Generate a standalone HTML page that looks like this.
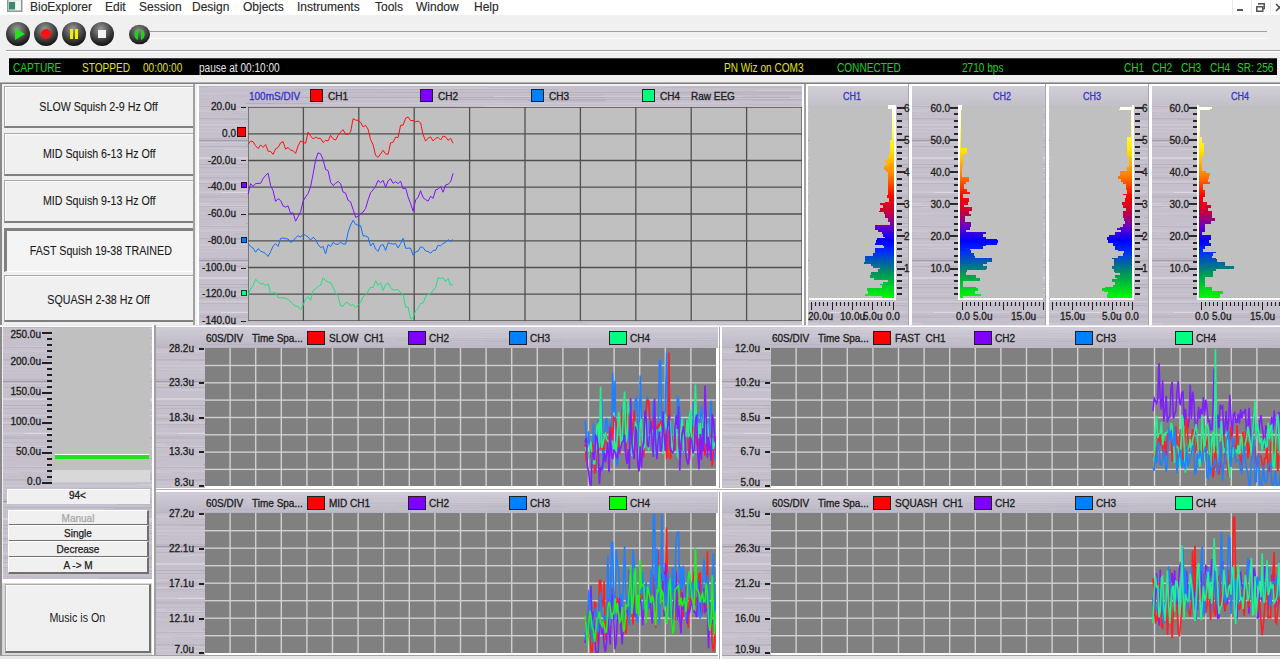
<!DOCTYPE html><html><head><meta charset="utf-8"><style>
*{margin:0;padding:0;box-sizing:border-box}
html,body{width:1280px;height:659px;overflow:hidden;background:#f0f0f0;font-family:"Liberation Sans", sans-serif;position:relative}
.t{position:absolute;white-space:nowrap;line-height:1;-webkit-text-stroke:0.3px currentColor}
.btn,.btnp{-webkit-text-stroke:0.1px currentColor}
.metal{background-color:#c6c2cc;background-image:
 repeating-linear-gradient(180deg, rgba(255,255,255,.10) 0px, rgba(255,255,255,.10) 1px, rgba(0,0,0,0) 1px, rgba(0,0,0,0) 3px),
 repeating-linear-gradient(180deg, rgba(0,0,0,.05) 0px, rgba(0,0,0,.05) 2px, rgba(0,0,0,0) 2px, rgba(0,0,0,0) 7px),
 repeating-linear-gradient(180deg, rgba(255,255,255,.08) 0px, rgba(255,255,255,.08) 3px, rgba(0,0,0,0) 3px, rgba(0,0,0,0) 11px);}
.btn{position:absolute;background:#f0f0f0;border-top:1px solid #a8a8a8;border-left:1px solid #a8a8a8;border-right:2px solid #808080;border-bottom:2px solid #808080;box-shadow:inset 1px 1px 0 #fff;font-size:12px;color:#1a1a1a;display:flex;align-items:center;justify-content:center}
.btnp{position:absolute;background:#f4f4f4;border-top:3px solid #808080;border-left:3px solid #808080;border-right:1px solid #fff;border-bottom:1px solid #fff;font-size:12px;color:#1a1a1a;display:flex;align-items:center;justify-content:center}
.lbl{font-size:10px;color:#202020}
</style></head><body><svg width="0" height="0" style="position:absolute"><defs><pattern id="mt" width="1280" height="120" patternUnits="userSpaceOnUse"><rect width="1280" height="120" fill="#c5c0cb"/><rect x="479" y="0" width="142" height="1" fill="rgba(60,50,80,0.029)"/><rect x="-28" y="0" width="429" height="1" fill="rgba(60,50,80,0.021)"/><rect x="-123" y="0" width="168" height="1" fill="rgba(60,50,80,0.008)"/><rect x="1134" y="0" width="315" height="1" fill="rgba(60,50,80,0.061)"/><rect x="-117" y="0" width="359" height="1" fill="rgba(60,50,80,0.052)"/><rect x="955" y="0" width="341" height="1" fill="rgba(255,255,255,0.008)"/><rect x="465" y="1" width="461" height="1" fill="rgba(60,50,80,0.058)"/><rect x="11" y="1" width="276" height="1" fill="rgba(255,255,255,0.108)"/><rect x="1052" y="1" width="131" height="1" fill="rgba(255,255,255,0.059)"/><rect x="1167" y="1" width="310" height="1" fill="rgba(60,50,80,0.037)"/><rect x="660" y="2" width="201" height="1" fill="rgba(60,50,80,0.032)"/><rect x="-285" y="2" width="257" height="1" fill="rgba(255,255,255,0.050)"/><rect x="117" y="2" width="225" height="1" fill="rgba(255,255,255,0.136)"/><rect x="762" y="3" width="500" height="1" fill="rgba(60,50,80,0.004)"/><rect x="105" y="3" width="350" height="1" fill="rgba(60,50,80,0.016)"/><rect x="-36" y="3" width="150" height="1" fill="rgba(255,255,255,0.008)"/><rect x="1164" y="3" width="122" height="1" fill="rgba(60,50,80,0.001)"/><rect x="63" y="3" width="297" height="1" fill="rgba(60,50,80,0.054)"/><rect x="1052" y="3" width="130" height="1" fill="rgba(255,255,255,0.023)"/><rect x="1100" y="4" width="459" height="1" fill="rgba(255,255,255,0.006)"/><rect x="558" y="4" width="81" height="1" fill="rgba(255,255,255,0.143)"/><rect x="-8" y="4" width="198" height="1" fill="rgba(60,50,80,0.027)"/><rect x="964" y="4" width="42" height="1" fill="rgba(60,50,80,0.020)"/><rect x="530" y="4" width="142" height="1" fill="rgba(255,255,255,0.040)"/><rect x="-187" y="4" width="367" height="1" fill="rgba(255,255,255,0.020)"/><rect x="1264" y="5" width="104" height="1" fill="rgba(255,255,255,0.082)"/><rect x="424" y="5" width="395" height="1" fill="rgba(60,50,80,0.017)"/><rect x="1212" y="5" width="482" height="1" fill="rgba(255,255,255,0.006)"/><rect x="1171" y="5" width="347" height="1" fill="rgba(255,255,255,0.011)"/><rect x="536" y="5" width="103" height="1" fill="rgba(60,50,80,0.028)"/><rect x="-103" y="5" width="100" height="1" fill="rgba(255,255,255,0.042)"/><rect x="539" y="6" width="114" height="1" fill="rgba(255,255,255,0.053)"/><rect x="125" y="6" width="490" height="1" fill="rgba(60,50,80,0.080)"/><rect x="179" y="6" width="473" height="1" fill="rgba(60,50,80,0.032)"/><rect x="227" y="6" width="100" height="1" fill="rgba(255,255,255,0.065)"/><rect x="726" y="7" width="187" height="1" fill="rgba(60,50,80,0.037)"/><rect x="-278" y="7" width="339" height="1" fill="rgba(255,255,255,0.049)"/><rect x="472" y="7" width="244" height="1" fill="rgba(60,50,80,0.039)"/><rect x="517" y="8" width="237" height="1" fill="rgba(60,50,80,0.041)"/><rect x="-111" y="8" width="132" height="1" fill="rgba(255,255,255,0.054)"/><rect x="-224" y="8" width="230" height="1" fill="rgba(60,50,80,0.009)"/><rect x="609" y="8" width="157" height="1" fill="rgba(60,50,80,0.050)"/><rect x="337" y="8" width="477" height="1" fill="rgba(60,50,80,0.041)"/><rect x="-84" y="9" width="487" height="1" fill="rgba(60,50,80,0.060)"/><rect x="1108" y="9" width="409" height="1" fill="rgba(60,50,80,0.033)"/><rect x="1157" y="9" width="385" height="1" fill="rgba(255,255,255,0.172)"/><rect x="1157" y="9" width="167" height="1" fill="rgba(60,50,80,0.040)"/><rect x="-136" y="9" width="491" height="1" fill="rgba(255,255,255,0.079)"/><rect x="562" y="10" width="171" height="1" fill="rgba(255,255,255,0.083)"/><rect x="1102" y="10" width="487" height="1" fill="rgba(255,255,255,0.039)"/><rect x="356" y="10" width="443" height="1" fill="rgba(60,50,80,0.026)"/><rect x="225" y="10" width="260" height="1" fill="rgba(255,255,255,0.008)"/><rect x="295" y="10" width="249" height="1" fill="rgba(255,255,255,0.202)"/><rect x="26" y="10" width="184" height="1" fill="rgba(60,50,80,0.019)"/><rect x="1089" y="11" width="387" height="1" fill="rgba(60,50,80,0.117)"/><rect x="1065" y="11" width="405" height="1" fill="rgba(60,50,80,0.090)"/><rect x="601" y="11" width="139" height="1" fill="rgba(60,50,80,0.076)"/><rect x="407" y="11" width="42" height="1" fill="rgba(255,255,255,0.158)"/><rect x="1066" y="11" width="221" height="1" fill="rgba(60,50,80,0.044)"/><rect x="95" y="11" width="496" height="1" fill="rgba(60,50,80,0.121)"/><rect x="1010" y="12" width="173" height="1" fill="rgba(60,50,80,0.045)"/><rect x="1146" y="12" width="158" height="1" fill="rgba(60,50,80,0.069)"/><rect x="536" y="12" width="480" height="1" fill="rgba(255,255,255,0.104)"/><rect x="-293" y="12" width="97" height="1" fill="rgba(60,50,80,0.056)"/><rect x="-298" y="13" width="307" height="1" fill="rgba(60,50,80,0.028)"/><rect x="1230" y="13" width="125" height="1" fill="rgba(255,255,255,0.153)"/><rect x="746" y="13" width="441" height="1" fill="rgba(255,255,255,0.088)"/><rect x="240" y="13" width="423" height="1" fill="rgba(60,50,80,0.109)"/><rect x="658" y="14" width="326" height="1" fill="rgba(60,50,80,0.068)"/><rect x="993" y="14" width="465" height="1" fill="rgba(60,50,80,0.013)"/><rect x="1266" y="14" width="350" height="1" fill="rgba(255,255,255,0.009)"/><rect x="-258" y="14" width="93" height="1" fill="rgba(60,50,80,0.033)"/><rect x="329" y="14" width="78" height="1" fill="rgba(60,50,80,0.111)"/><rect x="553" y="14" width="193" height="1" fill="rgba(60,50,80,0.062)"/><rect x="841" y="15" width="360" height="1" fill="rgba(255,255,255,0.139)"/><rect x="304" y="15" width="139" height="1" fill="rgba(60,50,80,0.021)"/><rect x="1249" y="15" width="91" height="1" fill="rgba(255,255,255,0.195)"/><rect x="516" y="15" width="444" height="1" fill="rgba(60,50,80,0.005)"/><rect x="52" y="15" width="175" height="1" fill="rgba(60,50,80,0.025)"/><rect x="614" y="16" width="484" height="1" fill="rgba(255,255,255,0.014)"/><rect x="1122" y="16" width="399" height="1" fill="rgba(60,50,80,0.049)"/><rect x="1164" y="16" width="131" height="1" fill="rgba(255,255,255,0.091)"/><rect x="436" y="16" width="168" height="1" fill="rgba(255,255,255,0.032)"/><rect x="76" y="17" width="463" height="1" fill="rgba(255,255,255,0.118)"/><rect x="681" y="17" width="333" height="1" fill="rgba(255,255,255,0.180)"/><rect x="675" y="17" width="380" height="1" fill="rgba(60,50,80,0.065)"/><rect x="47" y="17" width="78" height="1" fill="rgba(60,50,80,0.150)"/><rect x="771" y="17" width="47" height="1" fill="rgba(60,50,80,0.034)"/><rect x="-65" y="17" width="208" height="1" fill="rgba(255,255,255,0.012)"/><rect x="866" y="18" width="388" height="1" fill="rgba(60,50,80,0.019)"/><rect x="791" y="18" width="180" height="1" fill="rgba(60,50,80,0.044)"/><rect x="547" y="18" width="173" height="1" fill="rgba(60,50,80,0.049)"/><rect x="-22" y="19" width="341" height="1" fill="rgba(255,255,255,0.097)"/><rect x="-203" y="19" width="215" height="1" fill="rgba(60,50,80,0.024)"/><rect x="747" y="19" width="157" height="1" fill="rgba(60,50,80,0.039)"/><rect x="599" y="19" width="69" height="1" fill="rgba(60,50,80,0.014)"/><rect x="170" y="20" width="452" height="1" fill="rgba(255,255,255,0.048)"/><rect x="258" y="20" width="181" height="1" fill="rgba(255,255,255,0.117)"/><rect x="1045" y="20" width="226" height="1" fill="rgba(255,255,255,0.223)"/><rect x="844" y="20" width="128" height="1" fill="rgba(255,255,255,0.106)"/><rect x="1137" y="20" width="221" height="1" fill="rgba(60,50,80,0.053)"/><rect x="-134" y="20" width="420" height="1" fill="rgba(60,50,80,0.075)"/><rect x="1184" y="21" width="104" height="1" fill="rgba(255,255,255,0.029)"/><rect x="-123" y="21" width="56" height="1" fill="rgba(60,50,80,0.025)"/><rect x="1254" y="21" width="302" height="1" fill="rgba(60,50,80,0.018)"/><rect x="959" y="22" width="351" height="1" fill="rgba(60,50,80,0.024)"/><rect x="1257" y="22" width="352" height="1" fill="rgba(255,255,255,0.100)"/><rect x="401" y="22" width="454" height="1" fill="rgba(255,255,255,0.161)"/><rect x="980" y="22" width="263" height="1" fill="rgba(255,255,255,0.026)"/><rect x="0" y="23" width="294" height="1" fill="rgba(255,255,255,0.064)"/><rect x="1016" y="23" width="306" height="1" fill="rgba(60,50,80,0.001)"/><rect x="471" y="23" width="389" height="1" fill="rgba(60,50,80,0.008)"/><rect x="182" y="24" width="330" height="1" fill="rgba(60,50,80,0.083)"/><rect x="-136" y="24" width="488" height="1" fill="rgba(255,255,255,0.067)"/><rect x="30" y="24" width="488" height="1" fill="rgba(255,255,255,0.051)"/><rect x="464" y="25" width="169" height="1" fill="rgba(60,50,80,0.019)"/><rect x="341" y="25" width="341" height="1" fill="rgba(255,255,255,0.106)"/><rect x="315" y="25" width="121" height="1" fill="rgba(255,255,255,0.031)"/><rect x="-29" y="25" width="45" height="1" fill="rgba(255,255,255,0.147)"/><rect x="305" y="25" width="188" height="1" fill="rgba(60,50,80,0.062)"/><rect x="-47" y="25" width="292" height="1" fill="rgba(60,50,80,0.017)"/><rect x="35" y="26" width="350" height="1" fill="rgba(255,255,255,0.019)"/><rect x="1099" y="26" width="202" height="1" fill="rgba(255,255,255,0.093)"/><rect x="-230" y="26" width="232" height="1" fill="rgba(60,50,80,0.061)"/><rect x="254" y="26" width="352" height="1" fill="rgba(255,255,255,0.009)"/><rect x="1081" y="26" width="49" height="1" fill="rgba(255,255,255,0.062)"/><rect x="1213" y="27" width="244" height="1" fill="rgba(60,50,80,0.069)"/><rect x="166" y="27" width="129" height="1" fill="rgba(255,255,255,0.085)"/><rect x="773" y="27" width="248" height="1" fill="rgba(255,255,255,0.076)"/><rect x="1026" y="27" width="173" height="1" fill="rgba(60,50,80,0.002)"/><rect x="35" y="27" width="471" height="1" fill="rgba(60,50,80,0.049)"/><rect x="113" y="28" width="107" height="1" fill="rgba(60,50,80,0.022)"/><rect x="68" y="28" width="362" height="1" fill="rgba(60,50,80,0.047)"/><rect x="221" y="28" width="133" height="1" fill="rgba(255,255,255,0.300)"/><rect x="4" y="29" width="41" height="1" fill="rgba(255,255,255,0.027)"/><rect x="510" y="29" width="268" height="1" fill="rgba(60,50,80,0.006)"/><rect x="-149" y="29" width="124" height="1" fill="rgba(60,50,80,0.039)"/><rect x="-30" y="29" width="284" height="1" fill="rgba(60,50,80,0.024)"/><rect x="953" y="29" width="86" height="1" fill="rgba(60,50,80,0.020)"/><rect x="1202" y="29" width="333" height="1" fill="rgba(255,255,255,0.047)"/><rect x="126" y="30" width="406" height="1" fill="rgba(255,255,255,0.072)"/><rect x="113" y="30" width="449" height="1" fill="rgba(60,50,80,0.042)"/><rect x="55" y="30" width="108" height="1" fill="rgba(60,50,80,0.105)"/><rect x="53" y="30" width="470" height="1" fill="rgba(255,255,255,0.036)"/><rect x="1105" y="30" width="171" height="1" fill="rgba(255,255,255,0.065)"/><rect x="733" y="30" width="485" height="1" fill="rgba(255,255,255,0.115)"/><rect x="180" y="31" width="163" height="1" fill="rgba(60,50,80,0.075)"/><rect x="562" y="31" width="242" height="1" fill="rgba(60,50,80,0.012)"/><rect x="773" y="31" width="327" height="1" fill="rgba(255,255,255,0.075)"/><rect x="715" y="32" width="136" height="1" fill="rgba(255,255,255,0.037)"/><rect x="-102" y="32" width="446" height="1" fill="rgba(60,50,80,0.083)"/><rect x="594" y="32" width="71" height="1" fill="rgba(60,50,80,0.086)"/><rect x="345" y="32" width="137" height="1" fill="rgba(255,255,255,0.145)"/><rect x="79" y="32" width="177" height="1" fill="rgba(60,50,80,0.033)"/><rect x="-280" y="33" width="335" height="1" fill="rgba(60,50,80,0.032)"/><rect x="446" y="33" width="98" height="1" fill="rgba(60,50,80,0.006)"/><rect x="26" y="33" width="216" height="1" fill="rgba(60,50,80,0.059)"/><rect x="787" y="33" width="173" height="1" fill="rgba(255,255,255,0.109)"/><rect x="105" y="33" width="271" height="1" fill="rgba(255,255,255,0.260)"/><rect x="174" y="34" width="112" height="1" fill="rgba(255,255,255,0.095)"/><rect x="945" y="34" width="80" height="1" fill="rgba(255,255,255,0.055)"/><rect x="434" y="34" width="202" height="1" fill="rgba(60,50,80,0.042)"/><rect x="468" y="34" width="165" height="1" fill="rgba(60,50,80,0.084)"/><rect x="-256" y="34" width="54" height="1" fill="rgba(60,50,80,0.021)"/><rect x="133" y="35" width="153" height="1" fill="rgba(60,50,80,0.021)"/><rect x="-156" y="35" width="370" height="1" fill="rgba(255,255,255,0.070)"/><rect x="-299" y="35" width="262" height="1" fill="rgba(255,255,255,0.089)"/><rect x="1116" y="35" width="472" height="1" fill="rgba(255,255,255,0.077)"/><rect x="718" y="36" width="256" height="1" fill="rgba(60,50,80,0.045)"/><rect x="845" y="36" width="370" height="1" fill="rgba(60,50,80,0.017)"/><rect x="238" y="36" width="207" height="1" fill="rgba(60,50,80,0.021)"/><rect x="259" y="36" width="311" height="1" fill="rgba(60,50,80,0.088)"/><rect x="198" y="36" width="72" height="1" fill="rgba(255,255,255,0.070)"/><rect x="971" y="37" width="92" height="1" fill="rgba(60,50,80,0.015)"/><rect x="254" y="37" width="488" height="1" fill="rgba(60,50,80,0.024)"/><rect x="135" y="37" width="266" height="1" fill="rgba(255,255,255,0.144)"/><rect x="1062" y="37" width="267" height="1" fill="rgba(60,50,80,0.067)"/><rect x="236" y="37" width="79" height="1" fill="rgba(60,50,80,0.009)"/><rect x="-51" y="38" width="417" height="1" fill="rgba(255,255,255,0.128)"/><rect x="1141" y="38" width="266" height="1" fill="rgba(255,255,255,0.014)"/><rect x="572" y="38" width="446" height="1" fill="rgba(255,255,255,0.087)"/><rect x="181" y="38" width="349" height="1" fill="rgba(60,50,80,0.019)"/><rect x="1120" y="38" width="313" height="1" fill="rgba(255,255,255,0.195)"/><rect x="286" y="38" width="243" height="1" fill="rgba(60,50,80,0.047)"/><rect x="-161" y="39" width="342" height="1" fill="rgba(255,255,255,0.108)"/><rect x="703" y="39" width="213" height="1" fill="rgba(60,50,80,0.025)"/><rect x="919" y="39" width="83" height="1" fill="rgba(60,50,80,0.005)"/><rect x="-129" y="39" width="364" height="1" fill="rgba(60,50,80,0.015)"/><rect x="539" y="40" width="138" height="1" fill="rgba(60,50,80,0.065)"/><rect x="900" y="40" width="336" height="1" fill="rgba(255,255,255,0.075)"/><rect x="-264" y="40" width="50" height="1" fill="rgba(255,255,255,0.070)"/><rect x="117" y="40" width="381" height="1" fill="rgba(255,255,255,0.067)"/><rect x="-274" y="41" width="260" height="1" fill="rgba(255,255,255,0.109)"/><rect x="75" y="41" width="469" height="1" fill="rgba(60,50,80,0.090)"/><rect x="-24" y="41" width="459" height="1" fill="rgba(255,255,255,0.014)"/><rect x="1145" y="42" width="252" height="1" fill="rgba(60,50,80,0.041)"/><rect x="-86" y="42" width="198" height="1" fill="rgba(255,255,255,0.100)"/><rect x="490" y="42" width="363" height="1" fill="rgba(60,50,80,0.070)"/><rect x="-103" y="42" width="79" height="1" fill="rgba(60,50,80,0.007)"/><rect x="1189" y="43" width="121" height="1" fill="rgba(255,255,255,0.134)"/><rect x="1242" y="43" width="180" height="1" fill="rgba(60,50,80,0.002)"/><rect x="938" y="43" width="464" height="1" fill="rgba(60,50,80,0.013)"/><rect x="-157" y="43" width="168" height="1" fill="rgba(60,50,80,0.026)"/><rect x="295" y="43" width="346" height="1" fill="rgba(255,255,255,0.010)"/><rect x="145" y="44" width="473" height="1" fill="rgba(255,255,255,0.188)"/><rect x="327" y="44" width="464" height="1" fill="rgba(60,50,80,0.002)"/><rect x="617" y="44" width="169" height="1" fill="rgba(60,50,80,0.071)"/><rect x="640" y="44" width="185" height="1" fill="rgba(60,50,80,0.000)"/><rect x="5" y="44" width="137" height="1" fill="rgba(60,50,80,0.013)"/><rect x="729" y="44" width="157" height="1" fill="rgba(255,255,255,0.051)"/><rect x="932" y="45" width="304" height="1" fill="rgba(255,255,255,0.127)"/><rect x="-4" y="45" width="333" height="1" fill="rgba(255,255,255,0.060)"/><rect x="-300" y="45" width="212" height="1" fill="rgba(60,50,80,0.013)"/><rect x="889" y="45" width="446" height="1" fill="rgba(60,50,80,0.080)"/><rect x="-132" y="45" width="45" height="1" fill="rgba(60,50,80,0.046)"/><rect x="-129" y="46" width="42" height="1" fill="rgba(255,255,255,0.054)"/><rect x="99" y="46" width="485" height="1" fill="rgba(255,255,255,0.174)"/><rect x="311" y="46" width="138" height="1" fill="rgba(60,50,80,0.035)"/><rect x="0" y="47" width="414" height="1" fill="rgba(60,50,80,0.002)"/><rect x="836" y="47" width="386" height="1" fill="rgba(255,255,255,0.095)"/><rect x="1013" y="47" width="137" height="1" fill="rgba(255,255,255,0.045)"/><rect x="146" y="48" width="192" height="1" fill="rgba(255,255,255,0.028)"/><rect x="528" y="48" width="211" height="1" fill="rgba(60,50,80,0.054)"/><rect x="212" y="48" width="285" height="1" fill="rgba(60,50,80,0.001)"/><rect x="146" y="49" width="218" height="1" fill="rgba(255,255,255,0.117)"/><rect x="1124" y="49" width="323" height="1" fill="rgba(255,255,255,0.125)"/><rect x="1078" y="49" width="158" height="1" fill="rgba(255,255,255,0.119)"/><rect x="986" y="49" width="307" height="1" fill="rgba(60,50,80,0.074)"/><rect x="938" y="49" width="257" height="1" fill="rgba(60,50,80,0.025)"/><rect x="841" y="50" width="130" height="1" fill="rgba(60,50,80,0.125)"/><rect x="1191" y="50" width="305" height="1" fill="rgba(255,255,255,0.076)"/><rect x="-258" y="50" width="48" height="1" fill="rgba(60,50,80,0.051)"/><rect x="940" y="50" width="343" height="1" fill="rgba(60,50,80,0.015)"/><rect x="-207" y="50" width="74" height="1" fill="rgba(255,255,255,0.048)"/><rect x="1079" y="51" width="325" height="1" fill="rgba(60,50,80,0.013)"/><rect x="833" y="51" width="208" height="1" fill="rgba(255,255,255,0.101)"/><rect x="1119" y="51" width="435" height="1" fill="rgba(60,50,80,0.030)"/><rect x="305" y="51" width="56" height="1" fill="rgba(60,50,80,0.075)"/><rect x="1067" y="51" width="215" height="1" fill="rgba(60,50,80,0.063)"/><rect x="59" y="52" width="361" height="1" fill="rgba(255,255,255,0.072)"/><rect x="-111" y="52" width="283" height="1" fill="rgba(60,50,80,0.078)"/><rect x="815" y="52" width="234" height="1" fill="rgba(255,255,255,0.140)"/><rect x="912" y="53" width="368" height="1" fill="rgba(255,255,255,0.053)"/><rect x="-85" y="53" width="144" height="1" fill="rgba(60,50,80,0.042)"/><rect x="420" y="53" width="108" height="1" fill="rgba(255,255,255,0.153)"/><rect x="-291" y="53" width="228" height="1" fill="rgba(255,255,255,0.064)"/><rect x="499" y="53" width="200" height="1" fill="rgba(60,50,80,0.056)"/><rect x="265" y="54" width="248" height="1" fill="rgba(60,50,80,0.037)"/><rect x="-36" y="54" width="109" height="1" fill="rgba(60,50,80,0.070)"/><rect x="-35" y="54" width="187" height="1" fill="rgba(60,50,80,0.123)"/><rect x="1136" y="54" width="378" height="1" fill="rgba(255,255,255,0.045)"/><rect x="-245" y="54" width="320" height="1" fill="rgba(60,50,80,0.096)"/><rect x="-9" y="55" width="166" height="1" fill="rgba(60,50,80,0.054)"/><rect x="242" y="55" width="195" height="1" fill="rgba(255,255,255,0.074)"/><rect x="589" y="55" width="420" height="1" fill="rgba(60,50,80,0.071)"/><rect x="407" y="55" width="55" height="1" fill="rgba(255,255,255,0.140)"/><rect x="707" y="55" width="156" height="1" fill="rgba(60,50,80,0.018)"/><rect x="194" y="56" width="439" height="1" fill="rgba(255,255,255,0.006)"/><rect x="739" y="56" width="59" height="1" fill="rgba(255,255,255,0.140)"/><rect x="-157" y="56" width="221" height="1" fill="rgba(255,255,255,0.144)"/><rect x="849" y="56" width="106" height="1" fill="rgba(255,255,255,0.246)"/><rect x="427" y="56" width="437" height="1" fill="rgba(60,50,80,0.025)"/><rect x="-168" y="57" width="47" height="1" fill="rgba(255,255,255,0.083)"/><rect x="-269" y="57" width="270" height="1" fill="rgba(60,50,80,0.071)"/><rect x="114" y="57" width="369" height="1" fill="rgba(60,50,80,0.055)"/><rect x="143" y="58" width="412" height="1" fill="rgba(60,50,80,0.009)"/><rect x="-209" y="58" width="350" height="1" fill="rgba(255,255,255,0.060)"/><rect x="583" y="58" width="134" height="1" fill="rgba(255,255,255,0.300)"/><rect x="824" y="59" width="274" height="1" fill="rgba(60,50,80,0.016)"/><rect x="1277" y="59" width="465" height="1" fill="rgba(255,255,255,0.146)"/><rect x="1179" y="59" width="457" height="1" fill="rgba(255,255,255,0.037)"/><rect x="-234" y="59" width="391" height="1" fill="rgba(255,255,255,0.008)"/><rect x="866" y="60" width="241" height="1" fill="rgba(255,255,255,0.151)"/><rect x="720" y="60" width="431" height="1" fill="rgba(60,50,80,0.096)"/><rect x="-22" y="60" width="185" height="1" fill="rgba(60,50,80,0.069)"/><rect x="6" y="60" width="393" height="1" fill="rgba(60,50,80,0.035)"/><rect x="375" y="61" width="334" height="1" fill="rgba(255,255,255,0.061)"/><rect x="111" y="61" width="381" height="1" fill="rgba(60,50,80,0.056)"/><rect x="549" y="61" width="386" height="1" fill="rgba(60,50,80,0.005)"/><rect x="-138" y="62" width="239" height="1" fill="rgba(255,255,255,0.131)"/><rect x="1148" y="62" width="251" height="1" fill="rgba(60,50,80,0.007)"/><rect x="941" y="62" width="195" height="1" fill="rgba(60,50,80,0.038)"/><rect x="681" y="62" width="40" height="1" fill="rgba(60,50,80,0.080)"/><rect x="-238" y="62" width="399" height="1" fill="rgba(60,50,80,0.030)"/><rect x="212" y="62" width="158" height="1" fill="rgba(255,255,255,0.077)"/><rect x="26" y="63" width="310" height="1" fill="rgba(255,255,255,0.146)"/><rect x="155" y="63" width="193" height="1" fill="rgba(60,50,80,0.002)"/><rect x="521" y="63" width="122" height="1" fill="rgba(255,255,255,0.110)"/><rect x="467" y="64" width="440" height="1" fill="rgba(255,255,255,0.032)"/><rect x="649" y="64" width="277" height="1" fill="rgba(255,255,255,0.055)"/><rect x="268" y="64" width="416" height="1" fill="rgba(255,255,255,0.083)"/><rect x="1198" y="64" width="363" height="1" fill="rgba(60,50,80,0.060)"/><rect x="63" y="64" width="207" height="1" fill="rgba(60,50,80,0.070)"/><rect x="730" y="65" width="244" height="1" fill="rgba(60,50,80,0.031)"/><rect x="836" y="65" width="382" height="1" fill="rgba(60,50,80,0.076)"/><rect x="656" y="65" width="148" height="1" fill="rgba(60,50,80,0.047)"/><rect x="1108" y="66" width="243" height="1" fill="rgba(255,255,255,0.189)"/><rect x="789" y="66" width="201" height="1" fill="rgba(60,50,80,0.008)"/><rect x="372" y="66" width="150" height="1" fill="rgba(60,50,80,0.006)"/><rect x="491" y="67" width="120" height="1" fill="rgba(60,50,80,0.021)"/><rect x="200" y="67" width="404" height="1" fill="rgba(60,50,80,0.104)"/><rect x="398" y="67" width="81" height="1" fill="rgba(255,255,255,0.150)"/><rect x="77" y="67" width="70" height="1" fill="rgba(60,50,80,0.003)"/><rect x="477" y="68" width="150" height="1" fill="rgba(60,50,80,0.021)"/><rect x="1193" y="68" width="174" height="1" fill="rgba(60,50,80,0.055)"/><rect x="73" y="68" width="374" height="1" fill="rgba(255,255,255,0.050)"/><rect x="839" y="68" width="366" height="1" fill="rgba(60,50,80,0.091)"/><rect x="589" y="68" width="203" height="1" fill="rgba(255,255,255,0.097)"/><rect x="267" y="68" width="417" height="1" fill="rgba(255,255,255,0.149)"/><rect x="685" y="69" width="331" height="1" fill="rgba(60,50,80,0.017)"/><rect x="466" y="69" width="393" height="1" fill="rgba(255,255,255,0.150)"/><rect x="609" y="69" width="277" height="1" fill="rgba(60,50,80,0.104)"/><rect x="75" y="69" width="272" height="1" fill="rgba(60,50,80,0.022)"/><rect x="797" y="70" width="268" height="1" fill="rgba(60,50,80,0.053)"/><rect x="958" y="70" width="277" height="1" fill="rgba(255,255,255,0.023)"/><rect x="1083" y="70" width="272" height="1" fill="rgba(60,50,80,0.057)"/><rect x="94" y="70" width="102" height="1" fill="rgba(60,50,80,0.004)"/><rect x="592" y="70" width="495" height="1" fill="rgba(255,255,255,0.014)"/><rect x="-178" y="71" width="413" height="1" fill="rgba(255,255,255,0.076)"/><rect x="-51" y="71" width="320" height="1" fill="rgba(255,255,255,0.212)"/><rect x="579" y="71" width="316" height="1" fill="rgba(255,255,255,0.300)"/><rect x="-300" y="71" width="97" height="1" fill="rgba(60,50,80,0.065)"/><rect x="-42" y="71" width="341" height="1" fill="rgba(60,50,80,0.001)"/><rect x="1279" y="72" width="433" height="1" fill="rgba(60,50,80,0.027)"/><rect x="219" y="72" width="50" height="1" fill="rgba(60,50,80,0.077)"/><rect x="-212" y="72" width="432" height="1" fill="rgba(255,255,255,0.247)"/><rect x="111" y="72" width="59" height="1" fill="rgba(255,255,255,0.092)"/><rect x="136" y="73" width="304" height="1" fill="rgba(255,255,255,0.244)"/><rect x="1242" y="73" width="43" height="1" fill="rgba(255,255,255,0.035)"/><rect x="421" y="73" width="464" height="1" fill="rgba(255,255,255,0.079)"/><rect x="451" y="73" width="217" height="1" fill="rgba(255,255,255,0.086)"/><rect x="-265" y="74" width="370" height="1" fill="rgba(60,50,80,0.023)"/><rect x="625" y="74" width="93" height="1" fill="rgba(255,255,255,0.136)"/><rect x="137" y="74" width="448" height="1" fill="rgba(255,255,255,0.238)"/><rect x="519" y="74" width="448" height="1" fill="rgba(60,50,80,0.019)"/><rect x="455" y="74" width="214" height="1" fill="rgba(255,255,255,0.198)"/><rect x="1149" y="75" width="386" height="1" fill="rgba(60,50,80,0.072)"/><rect x="1020" y="75" width="285" height="1" fill="rgba(255,255,255,0.029)"/><rect x="1027" y="75" width="293" height="1" fill="rgba(255,255,255,0.026)"/><rect x="797" y="75" width="349" height="1" fill="rgba(255,255,255,0.002)"/><rect x="379" y="76" width="95" height="1" fill="rgba(255,255,255,0.026)"/><rect x="569" y="76" width="404" height="1" fill="rgba(60,50,80,0.001)"/><rect x="464" y="76" width="393" height="1" fill="rgba(255,255,255,0.147)"/><rect x="463" y="77" width="223" height="1" fill="rgba(60,50,80,0.041)"/><rect x="448" y="77" width="341" height="1" fill="rgba(60,50,80,0.021)"/><rect x="355" y="77" width="420" height="1" fill="rgba(255,255,255,0.074)"/><rect x="243" y="77" width="239" height="1" fill="rgba(255,255,255,0.102)"/><rect x="802" y="78" width="80" height="1" fill="rgba(255,255,255,0.179)"/><rect x="-121" y="78" width="382" height="1" fill="rgba(60,50,80,0.088)"/><rect x="1094" y="78" width="143" height="1" fill="rgba(255,255,255,0.022)"/><rect x="-72" y="78" width="216" height="1" fill="rgba(60,50,80,0.034)"/><rect x="152" y="78" width="479" height="1" fill="rgba(255,255,255,0.062)"/><rect x="-190" y="79" width="468" height="1" fill="rgba(255,255,255,0.056)"/><rect x="851" y="79" width="243" height="1" fill="rgba(255,255,255,0.062)"/><rect x="43" y="79" width="471" height="1" fill="rgba(60,50,80,0.059)"/><rect x="343" y="79" width="137" height="1" fill="rgba(60,50,80,0.082)"/><rect x="250" y="80" width="294" height="1" fill="rgba(60,50,80,0.003)"/><rect x="1154" y="80" width="336" height="1" fill="rgba(60,50,80,0.031)"/><rect x="1072" y="80" width="51" height="1" fill="rgba(60,50,80,0.016)"/><rect x="325" y="80" width="221" height="1" fill="rgba(60,50,80,0.024)"/><rect x="661" y="80" width="114" height="1" fill="rgba(255,255,255,0.084)"/><rect x="424" y="80" width="336" height="1" fill="rgba(255,255,255,0.033)"/><rect x="206" y="81" width="201" height="1" fill="rgba(255,255,255,0.035)"/><rect x="218" y="81" width="260" height="1" fill="rgba(60,50,80,0.008)"/><rect x="-69" y="81" width="462" height="1" fill="rgba(60,50,80,0.074)"/><rect x="60" y="81" width="40" height="1" fill="rgba(60,50,80,0.053)"/><rect x="1004" y="81" width="342" height="1" fill="rgba(60,50,80,0.017)"/><rect x="436" y="82" width="111" height="1" fill="rgba(60,50,80,0.040)"/><rect x="961" y="82" width="469" height="1" fill="rgba(255,255,255,0.189)"/><rect x="139" y="82" width="259" height="1" fill="rgba(60,50,80,0.012)"/><rect x="743" y="82" width="272" height="1" fill="rgba(60,50,80,0.025)"/><rect x="102" y="82" width="268" height="1" fill="rgba(255,255,255,0.277)"/><rect x="164" y="82" width="495" height="1" fill="rgba(255,255,255,0.002)"/><rect x="396" y="83" width="279" height="1" fill="rgba(60,50,80,0.060)"/><rect x="1208" y="83" width="145" height="1" fill="rgba(255,255,255,0.138)"/><rect x="-222" y="83" width="129" height="1" fill="rgba(255,255,255,0.101)"/><rect x="-236" y="83" width="141" height="1" fill="rgba(60,50,80,0.013)"/><rect x="-156" y="84" width="84" height="1" fill="rgba(255,255,255,0.212)"/><rect x="47" y="84" width="48" height="1" fill="rgba(255,255,255,0.000)"/><rect x="-159" y="84" width="80" height="1" fill="rgba(255,255,255,0.056)"/><rect x="1181" y="85" width="480" height="1" fill="rgba(255,255,255,0.173)"/><rect x="460" y="85" width="438" height="1" fill="rgba(60,50,80,0.043)"/><rect x="467" y="85" width="129" height="1" fill="rgba(60,50,80,0.064)"/><rect x="68" y="86" width="280" height="1" fill="rgba(255,255,255,0.050)"/><rect x="101" y="86" width="302" height="1" fill="rgba(60,50,80,0.110)"/><rect x="425" y="86" width="129" height="1" fill="rgba(255,255,255,0.057)"/><rect x="1111" y="86" width="199" height="1" fill="rgba(60,50,80,0.023)"/><rect x="-213" y="86" width="366" height="1" fill="rgba(60,50,80,0.036)"/><rect x="143" y="86" width="383" height="1" fill="rgba(255,255,255,0.040)"/><rect x="1233" y="87" width="373" height="1" fill="rgba(255,255,255,0.126)"/><rect x="182" y="87" width="353" height="1" fill="rgba(60,50,80,0.039)"/><rect x="833" y="87" width="253" height="1" fill="rgba(255,255,255,0.018)"/><rect x="1225" y="87" width="148" height="1" fill="rgba(255,255,255,0.047)"/><rect x="-56" y="87" width="445" height="1" fill="rgba(255,255,255,0.046)"/><rect x="113" y="88" width="106" height="1" fill="rgba(255,255,255,0.055)"/><rect x="-142" y="88" width="341" height="1" fill="rgba(255,255,255,0.102)"/><rect x="242" y="88" width="81" height="1" fill="rgba(255,255,255,0.016)"/><rect x="759" y="88" width="433" height="1" fill="rgba(60,50,80,0.033)"/><rect x="1086" y="89" width="355" height="1" fill="rgba(60,50,80,0.064)"/><rect x="968" y="89" width="178" height="1" fill="rgba(255,255,255,0.055)"/><rect x="1223" y="89" width="335" height="1" fill="rgba(255,255,255,0.131)"/><rect x="846" y="90" width="434" height="1" fill="rgba(60,50,80,0.011)"/><rect x="1233" y="90" width="277" height="1" fill="rgba(60,50,80,0.113)"/><rect x="1240" y="90" width="284" height="1" fill="rgba(60,50,80,0.027)"/><rect x="1237" y="90" width="165" height="1" fill="rgba(255,255,255,0.040)"/><rect x="-24" y="91" width="74" height="1" fill="rgba(60,50,80,0.066)"/><rect x="1015" y="91" width="75" height="1" fill="rgba(255,255,255,0.038)"/><rect x="781" y="91" width="104" height="1" fill="rgba(255,255,255,0.071)"/><rect x="1257" y="92" width="377" height="1" fill="rgba(60,50,80,0.002)"/><rect x="488" y="92" width="135" height="1" fill="rgba(255,255,255,0.019)"/><rect x="1074" y="92" width="224" height="1" fill="rgba(255,255,255,0.107)"/><rect x="-153" y="92" width="347" height="1" fill="rgba(60,50,80,0.047)"/><rect x="105" y="92" width="425" height="1" fill="rgba(60,50,80,0.038)"/><rect x="-29" y="92" width="119" height="1" fill="rgba(60,50,80,0.002)"/><rect x="414" y="93" width="331" height="1" fill="rgba(255,255,255,0.164)"/><rect x="403" y="93" width="230" height="1" fill="rgba(60,50,80,0.101)"/><rect x="1079" y="93" width="164" height="1" fill="rgba(255,255,255,0.022)"/><rect x="154" y="93" width="352" height="1" fill="rgba(255,255,255,0.086)"/><rect x="738" y="93" width="343" height="1" fill="rgba(255,255,255,0.160)"/><rect x="1129" y="93" width="333" height="1" fill="rgba(255,255,255,0.119)"/><rect x="674" y="94" width="182" height="1" fill="rgba(60,50,80,0.033)"/><rect x="54" y="94" width="150" height="1" fill="rgba(60,50,80,0.044)"/><rect x="974" y="94" width="195" height="1" fill="rgba(255,255,255,0.001)"/><rect x="274" y="94" width="49" height="1" fill="rgba(60,50,80,0.061)"/><rect x="-271" y="95" width="434" height="1" fill="rgba(255,255,255,0.170)"/><rect x="973" y="95" width="314" height="1" fill="rgba(60,50,80,0.032)"/><rect x="257" y="95" width="327" height="1" fill="rgba(255,255,255,0.092)"/><rect x="750" y="95" width="473" height="1" fill="rgba(255,255,255,0.059)"/><rect x="873" y="95" width="350" height="1" fill="rgba(255,255,255,0.044)"/><rect x="-251" y="96" width="446" height="1" fill="rgba(255,255,255,0.096)"/><rect x="748" y="96" width="92" height="1" fill="rgba(60,50,80,0.068)"/><rect x="588" y="96" width="196" height="1" fill="rgba(255,255,255,0.017)"/><rect x="1061" y="96" width="298" height="1" fill="rgba(255,255,255,0.104)"/><rect x="-294" y="97" width="353" height="1" fill="rgba(60,50,80,0.018)"/><rect x="-129" y="97" width="272" height="1" fill="rgba(60,50,80,0.059)"/><rect x="455" y="97" width="165" height="1" fill="rgba(60,50,80,0.031)"/><rect x="406" y="97" width="205" height="1" fill="rgba(255,255,255,0.132)"/><rect x="1017" y="97" width="101" height="1" fill="rgba(255,255,255,0.100)"/><rect x="30" y="97" width="422" height="1" fill="rgba(255,255,255,0.003)"/><rect x="168" y="98" width="329" height="1" fill="rgba(255,255,255,0.090)"/><rect x="677" y="98" width="444" height="1" fill="rgba(255,255,255,0.074)"/><rect x="1070" y="98" width="276" height="1" fill="rgba(255,255,255,0.021)"/><rect x="222" y="98" width="476" height="1" fill="rgba(60,50,80,0.006)"/><rect x="-129" y="99" width="235" height="1" fill="rgba(60,50,80,0.031)"/><rect x="77" y="99" width="312" height="1" fill="rgba(60,50,80,0.064)"/><rect x="128" y="99" width="331" height="1" fill="rgba(255,255,255,0.059)"/><rect x="310" y="100" width="454" height="1" fill="rgba(255,255,255,0.181)"/><rect x="378" y="100" width="441" height="1" fill="rgba(255,255,255,0.143)"/><rect x="699" y="100" width="113" height="1" fill="rgba(255,255,255,0.015)"/><rect x="-141" y="100" width="75" height="1" fill="rgba(255,255,255,0.130)"/><rect x="517" y="100" width="166" height="1" fill="rgba(60,50,80,0.056)"/><rect x="847" y="100" width="446" height="1" fill="rgba(60,50,80,0.004)"/><rect x="901" y="101" width="261" height="1" fill="rgba(255,255,255,0.120)"/><rect x="1199" y="101" width="127" height="1" fill="rgba(60,50,80,0.041)"/><rect x="618" y="101" width="109" height="1" fill="rgba(60,50,80,0.001)"/><rect x="650" y="101" width="286" height="1" fill="rgba(60,50,80,0.028)"/><rect x="217" y="101" width="491" height="1" fill="rgba(60,50,80,0.034)"/><rect x="971" y="102" width="303" height="1" fill="rgba(255,255,255,0.077)"/><rect x="-206" y="102" width="149" height="1" fill="rgba(60,50,80,0.075)"/><rect x="-257" y="102" width="266" height="1" fill="rgba(255,255,255,0.010)"/><rect x="788" y="103" width="69" height="1" fill="rgba(60,50,80,0.054)"/><rect x="604" y="103" width="342" height="1" fill="rgba(60,50,80,0.104)"/><rect x="983" y="103" width="250" height="1" fill="rgba(60,50,80,0.032)"/><rect x="-146" y="103" width="167" height="1" fill="rgba(255,255,255,0.009)"/><rect x="791" y="103" width="371" height="1" fill="rgba(60,50,80,0.021)"/><rect x="159" y="103" width="200" height="1" fill="rgba(255,255,255,0.039)"/><rect x="1031" y="104" width="469" height="1" fill="rgba(255,255,255,0.134)"/><rect x="1127" y="104" width="72" height="1" fill="rgba(60,50,80,0.040)"/><rect x="897" y="104" width="433" height="1" fill="rgba(60,50,80,0.051)"/><rect x="1245" y="104" width="141" height="1" fill="rgba(60,50,80,0.025)"/><rect x="545" y="104" width="324" height="1" fill="rgba(60,50,80,0.075)"/><rect x="1228" y="104" width="108" height="1" fill="rgba(255,255,255,0.113)"/><rect x="345" y="105" width="314" height="1" fill="rgba(60,50,80,0.017)"/><rect x="-50" y="105" width="166" height="1" fill="rgba(255,255,255,0.079)"/><rect x="667" y="105" width="191" height="1" fill="rgba(60,50,80,0.068)"/><rect x="1084" y="106" width="419" height="1" fill="rgba(255,255,255,0.038)"/><rect x="22" y="106" width="54" height="1" fill="rgba(255,255,255,0.294)"/><rect x="892" y="106" width="302" height="1" fill="rgba(255,255,255,0.147)"/><rect x="-210" y="106" width="307" height="1" fill="rgba(255,255,255,0.151)"/><rect x="725" y="106" width="459" height="1" fill="rgba(60,50,80,0.045)"/><rect x="293" y="106" width="277" height="1" fill="rgba(255,255,255,0.195)"/><rect x="667" y="107" width="135" height="1" fill="rgba(255,255,255,0.045)"/><rect x="20" y="107" width="480" height="1" fill="rgba(60,50,80,0.017)"/><rect x="372" y="107" width="58" height="1" fill="rgba(255,255,255,0.152)"/><rect x="1075" y="108" width="177" height="1" fill="rgba(60,50,80,0.058)"/><rect x="909" y="108" width="413" height="1" fill="rgba(60,50,80,0.028)"/><rect x="511" y="108" width="57" height="1" fill="rgba(255,255,255,0.066)"/><rect x="721" y="108" width="311" height="1" fill="rgba(255,255,255,0.212)"/><rect x="143" y="109" width="123" height="1" fill="rgba(60,50,80,0.012)"/><rect x="-60" y="109" width="282" height="1" fill="rgba(60,50,80,0.055)"/><rect x="724" y="109" width="96" height="1" fill="rgba(60,50,80,0.075)"/><rect x="1208" y="109" width="359" height="1" fill="rgba(255,255,255,0.052)"/><rect x="-181" y="110" width="424" height="1" fill="rgba(60,50,80,0.049)"/><rect x="162" y="110" width="170" height="1" fill="rgba(60,50,80,0.009)"/><rect x="1177" y="110" width="109" height="1" fill="rgba(60,50,80,0.007)"/><rect x="271" y="110" width="217" height="1" fill="rgba(60,50,80,0.008)"/><rect x="106" y="111" width="235" height="1" fill="rgba(60,50,80,0.093)"/><rect x="335" y="111" width="89" height="1" fill="rgba(255,255,255,0.077)"/><rect x="757" y="111" width="295" height="1" fill="rgba(255,255,255,0.208)"/><rect x="-193" y="111" width="385" height="1" fill="rgba(60,50,80,0.066)"/><rect x="457" y="111" width="156" height="1" fill="rgba(60,50,80,0.016)"/><rect x="-278" y="111" width="40" height="1" fill="rgba(60,50,80,0.021)"/><rect x="584" y="112" width="302" height="1" fill="rgba(255,255,255,0.133)"/><rect x="476" y="112" width="408" height="1" fill="rgba(255,255,255,0.007)"/><rect x="460" y="112" width="485" height="1" fill="rgba(255,255,255,0.023)"/><rect x="406" y="112" width="335" height="1" fill="rgba(255,255,255,0.174)"/><rect x="963" y="113" width="112" height="1" fill="rgba(255,255,255,0.016)"/><rect x="817" y="113" width="220" height="1" fill="rgba(60,50,80,0.091)"/><rect x="521" y="113" width="58" height="1" fill="rgba(60,50,80,0.055)"/><rect x="227" y="113" width="115" height="1" fill="rgba(255,255,255,0.229)"/><rect x="201" y="114" width="376" height="1" fill="rgba(255,255,255,0.047)"/><rect x="-128" y="114" width="354" height="1" fill="rgba(255,255,255,0.017)"/><rect x="595" y="114" width="307" height="1" fill="rgba(255,255,255,0.103)"/><rect x="156" y="115" width="119" height="1" fill="rgba(255,255,255,0.080)"/><rect x="1221" y="115" width="109" height="1" fill="rgba(255,255,255,0.043)"/><rect x="-91" y="115" width="206" height="1" fill="rgba(60,50,80,0.043)"/><rect x="743" y="115" width="172" height="1" fill="rgba(255,255,255,0.087)"/><rect x="136" y="115" width="490" height="1" fill="rgba(60,50,80,0.035)"/><rect x="906" y="115" width="430" height="1" fill="rgba(60,50,80,0.032)"/><rect x="693" y="116" width="481" height="1" fill="rgba(255,255,255,0.004)"/><rect x="988" y="116" width="102" height="1" fill="rgba(60,50,80,0.024)"/><rect x="-219" y="116" width="74" height="1" fill="rgba(60,50,80,0.018)"/><rect x="168" y="116" width="216" height="1" fill="rgba(60,50,80,0.061)"/><rect x="907" y="116" width="366" height="1" fill="rgba(60,50,80,0.004)"/><rect x="1140" y="117" width="268" height="1" fill="rgba(255,255,255,0.058)"/><rect x="389" y="117" width="198" height="1" fill="rgba(255,255,255,0.115)"/><rect x="619" y="117" width="484" height="1" fill="rgba(255,255,255,0.194)"/><rect x="-203" y="117" width="213" height="1" fill="rgba(255,255,255,0.188)"/><rect x="506" y="117" width="169" height="1" fill="rgba(255,255,255,0.070)"/><rect x="1184" y="117" width="86" height="1" fill="rgba(60,50,80,0.028)"/><rect x="890" y="118" width="66" height="1" fill="rgba(255,255,255,0.177)"/><rect x="870" y="118" width="213" height="1" fill="rgba(255,255,255,0.084)"/><rect x="882" y="118" width="472" height="1" fill="rgba(255,255,255,0.027)"/><rect x="580" y="118" width="128" height="1" fill="rgba(255,255,255,0.074)"/><rect x="-202" y="119" width="339" height="1" fill="rgba(255,255,255,0.190)"/><rect x="364" y="119" width="55" height="1" fill="rgba(255,255,255,0.057)"/><rect x="582" y="119" width="269" height="1" fill="rgba(60,50,80,0.003)"/><rect x="798" y="119" width="154" height="1" fill="rgba(255,255,255,0.106)"/></pattern></defs></svg><div style="position:absolute;left:0px;top:0px;width:1280px;height:15px;background:#fff"></div><svg style="position:absolute;left:7px;top:0px" width="16" height="12"><rect x="0.75" y="-1" width="14" height="12.25" fill="#e4ecea" stroke="#8f9a98" stroke-width="1.5"/><rect x="2" y="2" width="6" height="7.5" fill="#3d8a72"/><rect x="9" y="1" width="4.5" height="9" fill="#f4f6f4"/></svg><div class="t" style="left:30px;top:1px;font-size:12px;color:#2a2a2a;-webkit-text-stroke:0.15px currentColor">BioExplorer</div><div class="t" style="left:105px;top:1px;font-size:12px;color:#2a2a2a;-webkit-text-stroke:0.15px currentColor">Edit</div><div class="t" style="left:139px;top:1px;font-size:12px;color:#2a2a2a;-webkit-text-stroke:0.15px currentColor">Session</div><div class="t" style="left:192px;top:1px;font-size:12px;color:#2a2a2a;-webkit-text-stroke:0.15px currentColor">Design</div><div class="t" style="left:243px;top:1px;font-size:12px;color:#2a2a2a;-webkit-text-stroke:0.15px currentColor">Objects</div><div class="t" style="left:297px;top:1px;font-size:12px;color:#2a2a2a;-webkit-text-stroke:0.15px currentColor">Instruments</div><div class="t" style="left:375px;top:1px;font-size:12px;color:#2a2a2a;-webkit-text-stroke:0.15px currentColor">Tools</div><div class="t" style="left:416px;top:1px;font-size:12px;color:#2a2a2a;-webkit-text-stroke:0.15px currentColor">Window</div><div class="t" style="left:474px;top:1px;font-size:12px;color:#2a2a2a;-webkit-text-stroke:0.15px currentColor">Help</div><div style="position:absolute;left:1237px;top:9px;width:6px;height:2px;background:#555"></div><svg style="position:absolute;left:1256px;top:3px" width="9" height="9"><rect x="0.75" y="3.75" width="6" height="4.5" fill="none" stroke="#555" stroke-width="1.5"/><path d="M2.75 1.75V0.75H8.25V5.5H7" fill="none" stroke="#555" stroke-width="1.5"/></svg><svg style="position:absolute;left:1275px;top:3px" width="5" height="9"><path d="M1 1L8 8M8 1L1 8" stroke="#555" stroke-width="1.6"/></svg><div style="position:absolute;left:1232px;top:0px;width:1px;height:14px;background:#e8e8e8"></div><div style="position:absolute;left:1251px;top:0px;width:1px;height:14px;background:#e8e8e8"></div><div style="position:absolute;left:1270px;top:0px;width:1px;height:14px;background:#e8e8e8"></div><svg style="position:absolute;left:5px;top:21px" width="27" height="27">
<defs><radialGradient id="g18" cx="45%" cy="30%" r="70%"><stop offset="0" stop-color="#9a9a9a"/><stop offset="0.55" stop-color="#4a4a4a"/><stop offset="1" stop-color="#101010"/></radialGradient></defs>
<circle cx="13" cy="13" r="12" fill="url(#g18)"/><path d="M10 7L20 13L10 19Z" fill="#22e022"/></svg><svg style="position:absolute;left:33px;top:21px" width="27" height="27">
<defs><radialGradient id="g46" cx="45%" cy="30%" r="70%"><stop offset="0" stop-color="#9a9a9a"/><stop offset="0.55" stop-color="#4a4a4a"/><stop offset="1" stop-color="#101010"/></radialGradient></defs>
<circle cx="13" cy="13" r="12" fill="url(#g46)"/><circle cx="13" cy="13" r="5" fill="#ff1010"/></svg><svg style="position:absolute;left:61px;top:21px" width="27" height="27">
<defs><radialGradient id="g74" cx="45%" cy="30%" r="70%"><stop offset="0" stop-color="#9a9a9a"/><stop offset="0.55" stop-color="#4a4a4a"/><stop offset="1" stop-color="#101010"/></radialGradient></defs>
<circle cx="13" cy="13" r="12" fill="url(#g74)"/><rect x="9" y="8" width="3" height="10" fill="#f0f000"/><rect x="14" y="8" width="3" height="10" fill="#f0f000"/></svg><svg style="position:absolute;left:89px;top:21px" width="27" height="27">
<defs><radialGradient id="g102" cx="45%" cy="30%" r="70%"><stop offset="0" stop-color="#9a9a9a"/><stop offset="0.55" stop-color="#4a4a4a"/><stop offset="1" stop-color="#101010"/></radialGradient></defs>
<circle cx="13" cy="13" r="12" fill="url(#g102)"/><rect x="9" y="9" width="8" height="8" fill="#f4f4f4"/></svg><svg style="position:absolute;left:128px;top:24px" width="23" height="21"><defs><radialGradient id="gs" cx="45%" cy="30%" r="70%"><stop offset="0" stop-color="#8a8a8a"/><stop offset="0.6" stop-color="#444"/><stop offset="1" stop-color="#151515"/></radialGradient></defs>
<ellipse cx="11.5" cy="10.5" rx="10.5" ry="9.8" fill="url(#gs)"/><path d="M10 5A6 6 0 0 0 10 16Z" fill="#22d022"/><path d="M13 5A6 6 0 0 1 13 16Z" fill="#22d022"/></svg><div style="position:absolute;left:150px;top:31px;width:1117px;height:1px;background:#a0a0a0"></div><div style="position:absolute;left:150px;top:38px;width:1117px;height:1px;background:#fbfbfb"></div><div style="position:absolute;left:6px;top:50px;width:1274px;height:1px;background:#a0a0a0"></div><div style="position:absolute;left:6px;top:51px;width:1274px;height:1px;background:#fff"></div><div style="position:absolute;left:9px;top:58px;width:1268px;height:17px;background:#000;border-top:1px solid #404040"></div><div class="t" style="left:13px;top:62px;font-size:12px;color:#1fd41f;transform:scaleX(0.84);transform-origin:0 0;-webkit-text-stroke:0">CAPTURE</div><div class="t" style="left:82px;top:62px;font-size:12px;color:#e0e020;transform:scaleX(0.84);transform-origin:0 0;-webkit-text-stroke:0">STOPPED</div><div class="t" style="left:143px;top:62px;font-size:12px;color:#e0e020;transform:scaleX(0.84);transform-origin:0 0;-webkit-text-stroke:0">00:00:00</div><div class="t" style="left:199px;top:62px;font-size:12px;color:#e8e8e8;transform:scaleX(0.84);transform-origin:0 0;-webkit-text-stroke:0">pause at 00:10:00</div><div class="t" style="left:724px;top:62px;font-size:12px;color:#e0e020;transform:scaleX(0.84);transform-origin:0 0;-webkit-text-stroke:0">PN Wiz on COM3</div><div class="t" style="left:837px;top:62px;font-size:12px;color:#1fd41f;transform:scaleX(0.84);transform-origin:0 0;-webkit-text-stroke:0">CONNECTED</div><div class="t" style="left:962px;top:62px;font-size:12px;color:#1fd41f;transform:scaleX(0.84);transform-origin:0 0;-webkit-text-stroke:0">2710 bps</div><div class="t" style="left:1124px;top:62px;font-size:12px;color:#1fd41f;transform:scaleX(0.84);transform-origin:0 0;-webkit-text-stroke:0">CH1</div><div class="t" style="left:1152px;top:62px;font-size:12px;color:#1fd41f;transform:scaleX(0.84);transform-origin:0 0;-webkit-text-stroke:0">CH2</div><div class="t" style="left:1181px;top:62px;font-size:12px;color:#1fd41f;transform:scaleX(0.84);transform-origin:0 0;-webkit-text-stroke:0">CH3</div><div class="t" style="left:1210px;top:62px;font-size:12px;color:#1fd41f;transform:scaleX(0.84);transform-origin:0 0;-webkit-text-stroke:0">CH4</div><div class="t" style="left:1237px;top:62px;font-size:12px;color:#1fd41f;transform:scaleX(0.84);transform-origin:0 0;-webkit-text-stroke:0">SR: 256</div><div style="position:absolute;left:0px;top:82px;width:1280px;height:1px;background:#b0b0b0"></div><div style="position:absolute;left:0px;top:83px;width:1280px;height:1px;background:#808080"></div><div style="position:absolute;left:0px;top:84px;width:2px;height:575px;background:#8a8a8a"></div><div style="position:absolute;left:2px;top:84px;width:195px;height:242px;background:#f0f0f0"></div><div class="btn" style="left:4px;top:86px;width:191px;height:42px"><span style="display:inline-block;transform:scaleX(0.89);position:relative;top:0px">SLOW Squish 2-9 Hz Off</span></div><div class="btn" style="left:4px;top:133px;width:191px;height:43px"><span style="display:inline-block;transform:scaleX(0.89);position:relative;top:0px">MID Squish 6-13 Hz Off</span></div><div class="btn" style="left:4px;top:180px;width:191px;height:43px"><span style="display:inline-block;transform:scaleX(0.89);position:relative;top:0px">MID Squish 9-13 Hz Off</span></div><div class="btnp" style="left:4px;top:228px;width:191px;height:44px"><span style="display:inline-block;transform:scaleX(0.89);position:relative;top:0px">FAST Squish 19-38 TRAINED</span></div><div class="btn" style="left:4px;top:275px;width:191px;height:47px"><span style="display:inline-block;transform:scaleX(0.89);position:relative;top:2px">SQUASH 2-38 Hz Off</span></div><div style="position:absolute;left:193px;top:84px;width:2px;height:242px;background:#a0a0a0"></div><svg style="position:absolute;left:199px;top:86px" width="603" height="239"><rect width="603" height="239" fill="url(#mt)"/></svg><div style="position:absolute;left:197px;top:84px;width:2px;height:242px;background:#fff"></div><div style="position:absolute;left:248px;top:107px;width:554px;height:214px;background:#c0c0c0"></div><svg style="position:absolute;left:248px;top:107px" width="554" height="214"><line x1="0.0" y1="0" x2="0.0" y2="214" stroke="#505050" stroke-width="1.3"/><line x1="55.4" y1="0" x2="55.4" y2="214" stroke="#505050" stroke-width="1.3"/><line x1="110.8" y1="0" x2="110.8" y2="214" stroke="#505050" stroke-width="1.3"/><line x1="166.2" y1="0" x2="166.2" y2="214" stroke="#505050" stroke-width="1.3"/><line x1="221.6" y1="0" x2="221.6" y2="214" stroke="#505050" stroke-width="1.3"/><line x1="277.0" y1="0" x2="277.0" y2="214" stroke="#505050" stroke-width="1.3"/><line x1="332.4" y1="0" x2="332.4" y2="214" stroke="#505050" stroke-width="1.3"/><line x1="387.8" y1="0" x2="387.8" y2="214" stroke="#505050" stroke-width="1.3"/><line x1="443.2" y1="0" x2="443.2" y2="214" stroke="#505050" stroke-width="1.3"/><line x1="498.6" y1="0" x2="498.6" y2="214" stroke="#505050" stroke-width="1.3"/><line x1="554.0" y1="0" x2="554.0" y2="214" stroke="#505050" stroke-width="1.3"/><line x1="0" y1="0.0" x2="554" y2="0.0" stroke="#505050" stroke-width="1.3"/><line x1="0" y1="26.8" x2="554" y2="26.8" stroke="#505050" stroke-width="1.3"/><line x1="0" y1="53.5" x2="554" y2="53.5" stroke="#505050" stroke-width="1.3"/><line x1="0" y1="80.2" x2="554" y2="80.2" stroke="#505050" stroke-width="1.3"/><line x1="0" y1="107.0" x2="554" y2="107.0" stroke="#505050" stroke-width="1.3"/><line x1="0" y1="133.8" x2="554" y2="133.8" stroke="#505050" stroke-width="1.3"/><line x1="0" y1="160.5" x2="554" y2="160.5" stroke="#505050" stroke-width="1.3"/><line x1="0" y1="187.2" x2="554" y2="187.2" stroke="#505050" stroke-width="1.3"/><line x1="0" y1="214.0" x2="554" y2="214.0" stroke="#505050" stroke-width="1.3"/></svg><div class="t lbl" style="right:1044px;top:102.0px">20.0u</div><div style="position:absolute;left:241px;top:107px;width:5px;height:1px;background:#202020"></div><div class="t lbl" style="right:1044px;top:128.8px">0.0</div><div style="position:absolute;left:241px;top:134px;width:5px;height:1px;background:#202020"></div><div class="t lbl" style="right:1044px;top:155.5px">-20.0u</div><div style="position:absolute;left:241px;top:160px;width:5px;height:1px;background:#202020"></div><div class="t lbl" style="right:1044px;top:182.2px">-40.0u</div><div style="position:absolute;left:241px;top:187px;width:5px;height:1px;background:#202020"></div><div class="t lbl" style="right:1044px;top:209.0px">-60.0u</div><div style="position:absolute;left:241px;top:214px;width:5px;height:1px;background:#202020"></div><div class="t lbl" style="right:1044px;top:235.8px">-80.0u</div><div style="position:absolute;left:241px;top:241px;width:5px;height:1px;background:#202020"></div><div class="t lbl" style="right:1044px;top:262.5px">-100.0u</div><div style="position:absolute;left:241px;top:268px;width:5px;height:1px;background:#202020"></div><div class="t lbl" style="right:1044px;top:289.2px">-120.0u</div><div style="position:absolute;left:241px;top:294px;width:5px;height:1px;background:#202020"></div><div class="t lbl" style="right:1044px;top:316.0px">-140.0u</div><div style="position:absolute;left:241px;top:321px;width:5px;height:1px;background:#202020"></div><div class="t" style="left:249px;top:92px;font-size:10px;color:#3434c8">100mS/DIV</div><div style="position:absolute;left:310px;top:89px;width:13px;height:13px;background:#ff0000;border:1px solid #202020"></div><div class="t" style="left:328px;top:92px;font-size:10px;color:#202020">CH1</div><div style="position:absolute;left:420px;top:89px;width:13px;height:13px;background:#8000ff;border:1px solid #202020"></div><div class="t" style="left:438px;top:92px;font-size:10px;color:#202020">CH2</div><div style="position:absolute;left:531px;top:89px;width:13px;height:13px;background:#0080ff;border:1px solid #202020"></div><div class="t" style="left:549px;top:92px;font-size:10px;color:#202020">CH3</div><div style="position:absolute;left:642px;top:89px;width:13px;height:13px;background:#00ff80;border:1px solid #202020"></div><div class="t" style="left:660px;top:92px;font-size:10px;color:#202020">CH4</div><div class="t" style="left:691px;top:92px;font-size:10px;color:#202020">Raw EEG</div><div style="position:absolute;left:237px;top:127px;width:9px;height:10px;background:#ff0000;border:1px solid #400"></div><div style="position:absolute;left:241px;top:182px;width:6px;height:6px;background:#8000ff;border:1px solid #204"></div><div style="position:absolute;left:241px;top:237px;width:6px;height:6px;background:#0080ff;border:1px solid #024"></div><div style="position:absolute;left:241px;top:290px;width:6px;height:6px;background:#00ff80;border:1px solid #042"></div><svg style="position:absolute;left:0;top:0" width="1280" height="659"><polyline fill="none" stroke="#ff1010" stroke-width="1" points="248.1,144.3 250.6,141.1 253.1,141.6 255.6,145.8 258.1,148.6 260.6,144.9 263.1,147.4 265.6,144.5 268.1,151.3 270.6,151.4 273.1,154.4 275.6,148.8 278.1,147.5 280.6,142.9 283.1,141.6 285.6,149.2 288.1,147.4 290.6,150.2 293.1,150.8 295.6,153.4 298.1,145.9 300.6,140.9 303.1,142.2 305.6,143.3 308.1,132.1 310.6,135.9 313.1,138.9 315.6,137.2 318.1,138.3 320.6,138.4 323.1,142.5 325.6,140.4 328.1,140.9 330.6,135.4 333.1,138.8 335.6,140.1 338.1,135.4 340.6,132.1 343.1,129.6 345.6,134.3 348.1,134.2 350.6,131.9 353.1,118.7 355.6,120.1 358.1,120.4 360.6,122.3 363.1,126.9 365.6,125.3 368.1,129.3 370.6,139.6 373.1,144.8 375.6,155.4 378.1,157.3 380.6,153.9 383.1,150.3 385.6,153.9 388.1,154.3 390.6,142.9 393.1,142.2 395.6,137.2 398.1,137.5 400.6,125.3 403.1,125.2 405.6,118.1 408.1,117.0 410.6,120.6 413.1,120.5 415.6,121.8 418.1,121.1 420.6,122.8 423.1,134.6 425.6,141.1 428.1,138.1 430.6,136.8 433.1,141.0 435.6,138.3 438.1,137.4 440.6,140.0 443.1,136.0 445.6,136.9 448.1,140.3 450.6,138.3 453.1,143.2"/><polyline fill="none" stroke="#8010ff" stroke-width="1" points="248.1,194.1 250.6,183.6 253.1,186.4 255.6,183.5 258.1,183.4 260.6,183.4 263.1,178.5 265.6,175.4 268.1,173.2 270.6,185.5 273.1,190.7 275.6,201.4 278.1,198.7 280.6,200.4 283.1,206.0 285.6,207.1 288.1,205.9 290.6,213.4 293.1,212.9 295.6,221.2 298.1,216.7 300.6,211.7 303.1,201.1 305.6,196.9 308.1,193.4 310.6,186.6 313.1,174.2 315.6,159.9 318.1,152.8 320.6,153.9 323.1,159.5 325.6,169.5 328.1,170.6 330.6,182.3 333.1,185.6 335.6,183.3 338.1,181.4 340.6,183.7 343.1,192.1 345.6,193.1 348.1,200.4 350.6,201.9 353.1,209.6 355.6,217.3 358.1,216.4 360.6,213.7 363.1,212.0 365.6,208.4 368.1,199.9 370.6,192.7 373.1,189.9 375.6,186.2 378.1,180.3 380.6,182.7 383.1,180.4 385.6,187.2 388.1,180.9 390.6,178.7 393.1,183.3 395.6,181.7 398.1,183.5 400.6,181.2 403.1,188.9 405.6,187.9 408.1,197.0 410.6,203.5 413.1,211.2 415.6,199.8 418.1,197.5 420.6,190.7 423.1,197.7 425.6,199.6 428.1,201.1 430.6,196.3 433.1,198.3 435.6,189.9 438.1,189.1 440.6,186.6 443.1,192.2 445.6,185.0 448.1,184.2 450.6,181.8 453.1,173.4"/><polyline fill="none" stroke="#1070ff" stroke-width="1" points="248.1,243.3 250.6,246.5 253.1,248.1 255.6,252.2 258.1,248.7 260.6,251.0 263.1,252.2 265.6,253.6 268.1,256.4 270.6,251.7 273.1,246.1 275.6,243.7 278.1,246.4 280.6,238.4 283.1,238.0 285.6,238.6 288.1,239.0 290.6,242.5 293.1,241.1 295.6,237.7 298.1,235.7 300.6,237.1 303.1,234.1 305.6,235.4 308.1,237.0 310.6,240.2 313.1,237.1 315.6,239.5 318.1,244.5 320.6,247.6 323.1,246.5 325.6,253.9 328.1,244.5 330.6,246.5 333.1,242.4 335.6,244.1 338.1,244.3 340.6,242.2 343.1,244.0 345.6,244.1 348.1,232.0 350.6,225.0 353.1,220.3 355.6,224.4 358.1,225.2 360.6,225.7 363.1,235.9 365.6,235.9 368.1,237.2 370.6,246.1 373.1,242.9 375.6,249.1 378.1,251.3 380.6,245.4 383.1,244.6 385.6,250.4 388.1,242.7 390.6,243.6 393.1,244.2 395.6,243.4 398.1,248.0 400.6,243.5 403.1,238.3 405.6,248.3 408.1,248.2 410.6,248.1 413.1,255.2 415.6,252.1 418.1,251.1 420.6,246.7 423.1,247.6 425.6,251.0 428.1,251.5 430.6,253.3 433.1,250.4 435.6,250.3 438.1,245.2 440.6,245.8 443.1,243.5 445.6,242.5 448.1,239.6 450.6,241.2 453.1,239.6"/><polyline fill="none" stroke="#20e080" stroke-width="1" points="248.1,295.2 250.6,288.9 253.1,285.5 255.6,279.2 258.1,281.5 260.6,284.0 263.1,283.6 265.6,285.5 268.1,283.9 270.6,293.5 273.1,292.8 275.6,292.9 278.1,297.5 280.6,297.7 283.1,297.9 285.6,298.0 288.1,299.5 290.6,301.7 293.1,304.3 295.6,306.0 298.1,306.5 300.6,309.5 303.1,305.1 305.6,298.9 308.1,296.6 310.6,300.4 313.1,290.8 315.6,288.6 318.1,286.4 320.6,285.4 323.1,277.8 325.6,280.7 328.1,282.0 330.6,282.6 333.1,287.1 335.6,293.0 338.1,296.2 340.6,305.8 343.1,306.3 345.6,302.3 348.1,303.0 350.6,305.5 353.1,304.5 355.6,307.4 358.1,305.3 360.6,302.5 363.1,296.9 365.6,294.8 368.1,291.3 370.6,287.2 373.1,287.6 375.6,280.7 378.1,285.3 380.6,282.7 383.1,290.5 385.6,284.7 388.1,282.9 390.6,287.4 393.1,290.2 395.6,289.7 398.1,289.5 400.6,292.7 403.1,294.2 405.6,307.4 408.1,306.9 410.6,319.0 413.1,317.5 415.6,311.0 418.1,308.5 420.6,303.5 423.1,303.0 425.6,296.8 428.1,294.1 430.6,293.6 433.1,290.4 435.6,287.6 438.1,277.6 440.6,278.6 443.1,277.7 445.6,281.4 448.1,278.4 450.6,285.4 453.1,284.0"/></svg><div style="position:absolute;left:802px;top:84px;width:478px;height:242px;background:#fff"></div><div style="position:absolute;left:804px;top:84px;width:2px;height:242px;background:#a0a0a0"></div><svg style="position:absolute;left:808px;top:86px" width="101" height="239"><rect width="101" height="239" fill="url(#mt)"/></svg><div style="position:absolute;left:808px;top:86px;width:101px;height:19px;background:linear-gradient(180deg,#d4d0da,#c4c0ca);opacity:.9"></div><div style="position:absolute;left:809px;top:105px;width:85px;height:193px;background:#c0c0c0"></div><svg style="position:absolute;left:912px;top:86px" width="134" height="239"><rect width="134" height="239" fill="url(#mt)"/></svg><div style="position:absolute;left:912px;top:86px;width:134px;height:19px;background:linear-gradient(180deg,#d4d0da,#c4c0ca);opacity:.9"></div><div style="position:absolute;left:960px;top:105px;width:83px;height:193px;background:#c0c0c0"></div><svg style="position:absolute;left:1049px;top:86px" width="100" height="239"><rect width="100" height="239" fill="url(#mt)"/></svg><div style="position:absolute;left:1049px;top:86px;width:100px;height:19px;background:linear-gradient(180deg,#d4d0da,#c4c0ca);opacity:.9"></div><div style="position:absolute;left:1050px;top:105px;width:82px;height:193px;background:#c0c0c0"></div><svg style="position:absolute;left:1152px;top:86px" width="128" height="239"><rect width="128" height="239" fill="url(#mt)"/></svg><div style="position:absolute;left:1152px;top:86px;width:128px;height:19px;background:linear-gradient(180deg,#d4d0da,#c4c0ca);opacity:.9"></div><div style="position:absolute;left:1199px;top:105px;width:81px;height:193px;background:#c0c0c0"></div><div style="position:absolute;left:909px;top:84px;width:3px;height:242px;background:#fff"></div><div style="position:absolute;left:908px;top:84px;width:1px;height:242px;background:#a8a8a8"></div><div style="position:absolute;left:1046px;top:84px;width:3px;height:242px;background:#fff"></div><div style="position:absolute;left:1045px;top:84px;width:1px;height:242px;background:#a8a8a8"></div><div style="position:absolute;left:1149px;top:84px;width:3px;height:242px;background:#fff"></div><div style="position:absolute;left:1148px;top:84px;width:1px;height:242px;background:#a8a8a8"></div><div class="t" style="left:843px;top:92px;font-size:10px;color:#3434c8;transform:scaleX(0.9);transform-origin:0 0">CH1</div><div class="t" style="left:993px;top:92px;font-size:10px;color:#3434c8;transform:scaleX(0.9);transform-origin:0 0">CH2</div><div class="t" style="left:1083px;top:92px;font-size:10px;color:#3434c8;transform:scaleX(0.9);transform-origin:0 0">CH3</div><div class="t" style="left:1231px;top:92px;font-size:10px;color:#3434c8;transform:scaleX(0.9);transform-origin:0 0">CH4</div><svg style="position:absolute;left:0;top:0" width="1280" height="659" shape-rendering="crispEdges"><rect x="888.0" y="105" width="6.0" height="1" fill="#ffffff"/><rect x="888.0" y="106" width="6.0" height="1" fill="#fffffc"/><rect x="888.0" y="107" width="6.0" height="1" fill="#fffff6"/><rect x="888.0" y="108" width="6.0" height="1" fill="#fffff0"/><rect x="892.0" y="109" width="2.0" height="1" fill="#ffffea"/><rect x="892.0" y="110" width="2.0" height="1" fill="#ffffe4"/><rect x="892.0" y="111" width="2.0" height="1" fill="#ffffde"/><rect x="892.0" y="112" width="2.0" height="1" fill="#ffffd9"/><rect x="892.0" y="113" width="2.0" height="1" fill="#ffffd3"/><rect x="892.0" y="114" width="2.0" height="1" fill="#ffffcd"/><rect x="892.0" y="115" width="2.0" height="1" fill="#ffffc7"/><rect x="892.0" y="116" width="2.0" height="1" fill="#ffffc1"/><rect x="892.0" y="117" width="2.0" height="1" fill="#ffffbb"/><rect x="892.0" y="118" width="2.0" height="1" fill="#ffffb5"/><rect x="892.0" y="119" width="2.0" height="1" fill="#ffffb0"/><rect x="892.0" y="120" width="2.0" height="1" fill="#ffffaa"/><rect x="892.0" y="121" width="2.0" height="1" fill="#ffffa4"/><rect x="892.0" y="122" width="2.0" height="1" fill="#ffff9e"/><rect x="892.0" y="123" width="2.0" height="1" fill="#ffff98"/><rect x="892.0" y="124" width="2.0" height="1" fill="#ffff92"/><rect x="892.0" y="125" width="2.0" height="1" fill="#ffff8d"/><rect x="892.0" y="126" width="2.0" height="1" fill="#ffff87"/><rect x="892.0" y="127" width="2.0" height="1" fill="#ffff81"/><rect x="892.0" y="128" width="2.0" height="1" fill="#ffff7b"/><rect x="892.0" y="129" width="2.0" height="1" fill="#fffe75"/><rect x="892.0" y="130" width="2.0" height="1" fill="#fffd70"/><rect x="892.0" y="131" width="2.0" height="1" fill="#fffc6a"/><rect x="892.0" y="132" width="2.0" height="1" fill="#fffa64"/><rect x="892.0" y="133" width="2.0" height="1" fill="#fff95f"/><rect x="892.0" y="134" width="2.0" height="1" fill="#fff859"/><rect x="892.0" y="135" width="2.0" height="1" fill="#fff753"/><rect x="892.0" y="136" width="2.0" height="1" fill="#fff64e"/><rect x="892.0" y="137" width="2.0" height="1" fill="#fff548"/><rect x="892.0" y="138" width="2.0" height="1" fill="#fff342"/><rect x="892.0" y="139" width="2.0" height="1" fill="#fff23d"/><rect x="890.0" y="140" width="4.0" height="1" fill="#fff137"/><rect x="890.0" y="141" width="4.0" height="1" fill="#fff031"/><rect x="890.0" y="142" width="4.0" height="1" fill="#ffef2c"/><rect x="890.0" y="143" width="4.0" height="1" fill="#ffed26"/><rect x="890.0" y="144" width="4.0" height="1" fill="#ffec20"/><rect x="890.0" y="145" width="4.0" height="1" fill="#ffeb1b"/><rect x="890.0" y="146" width="4.0" height="1" fill="#ffea15"/><rect x="890.0" y="147" width="4.0" height="1" fill="#ffe90f"/><rect x="890.0" y="148" width="4.0" height="1" fill="#ffe80a"/><rect x="890.0" y="149" width="4.0" height="1" fill="#ffe604"/><rect x="890.0" y="150" width="4.0" height="1" fill="#ffe500"/><rect x="890.0" y="151" width="4.0" height="1" fill="#ffe100"/><rect x="890.0" y="152" width="4.0" height="1" fill="#ffdc00"/><rect x="890.0" y="153" width="4.0" height="1" fill="#ffd800"/><rect x="890.0" y="154" width="4.0" height="1" fill="#ffd400"/><rect x="888.0" y="155" width="6.0" height="1" fill="#ffd000"/><rect x="888.0" y="156" width="6.0" height="1" fill="#ffcc00"/><rect x="888.0" y="157" width="6.0" height="1" fill="#ffc800"/><rect x="888.0" y="158" width="6.0" height="1" fill="#ffc400"/><rect x="888.0" y="159" width="6.0" height="1" fill="#ffc000"/><rect x="885.0" y="160" width="9.0" height="1" fill="#ffbc00"/><rect x="885.0" y="161" width="9.0" height="1" fill="#ffb800"/><rect x="885.0" y="162" width="9.0" height="1" fill="#ffb400"/><rect x="887.0" y="163" width="7.0" height="1" fill="#ffb000"/><rect x="887.0" y="164" width="7.0" height="1" fill="#ffac00"/><rect x="885.0" y="165" width="9.0" height="1" fill="#ffa700"/><rect x="884.0" y="166" width="10.0" height="1" fill="#ffa300"/><rect x="884.0" y="167" width="10.0" height="1" fill="#ff9f00"/><rect x="884.0" y="168" width="10.0" height="1" fill="#ff9b00"/><rect x="884.0" y="169" width="10.0" height="1" fill="#ff9700"/><rect x="886.0" y="170" width="8.0" height="1" fill="#ff9300"/><rect x="886.0" y="171" width="8.0" height="1" fill="#ff8f00"/><rect x="888.0" y="172" width="6.0" height="1" fill="#ff8b00"/><rect x="888.0" y="173" width="6.0" height="1" fill="#ff8700"/><rect x="888.0" y="174" width="6.0" height="1" fill="#ff8300"/><rect x="888.0" y="175" width="6.0" height="1" fill="#ff7e00"/><rect x="888.0" y="176" width="6.0" height="1" fill="#ff7800"/><rect x="888.0" y="177" width="6.0" height="1" fill="#ff7200"/><rect x="888.0" y="178" width="6.0" height="1" fill="#ff6c00"/><rect x="888.0" y="179" width="6.0" height="1" fill="#ff6600"/><rect x="888.0" y="180" width="6.0" height="1" fill="#ff6000"/><rect x="888.0" y="181" width="6.0" height="1" fill="#ff5a00"/><rect x="888.0" y="182" width="6.0" height="1" fill="#ff5400"/><rect x="888.0" y="183" width="6.0" height="1" fill="#ff4e00"/><rect x="888.0" y="184" width="6.0" height="1" fill="#ff4800"/><rect x="888.0" y="185" width="6.0" height="1" fill="#ff4200"/><rect x="888.0" y="186" width="6.0" height="1" fill="#ff3c00"/><rect x="888.0" y="187" width="6.0" height="1" fill="#ff3600"/><rect x="888.0" y="188" width="6.0" height="1" fill="#ff3000"/><rect x="888.0" y="189" width="6.0" height="1" fill="#ff2a00"/><rect x="888.0" y="190" width="6.0" height="1" fill="#ff2400"/><rect x="888.0" y="191" width="6.0" height="1" fill="#ff1e00"/><rect x="888.0" y="192" width="6.0" height="1" fill="#ff1800"/><rect x="888.0" y="193" width="6.0" height="1" fill="#ff1100"/><rect x="888.0" y="194" width="6.0" height="1" fill="#ff0b00"/><rect x="887.0" y="195" width="7.0" height="1" fill="#ff0500"/><rect x="887.0" y="196" width="7.0" height="1" fill="#fe0000"/><rect x="887.0" y="197" width="7.0" height="1" fill="#fb0003"/><rect x="889.0" y="198" width="5.0" height="1" fill="#f70007"/><rect x="889.0" y="199" width="5.0" height="1" fill="#f4000b"/><rect x="889.0" y="200" width="5.0" height="1" fill="#f0000f"/><rect x="889.0" y="201" width="5.0" height="1" fill="#ed0013"/><rect x="885.0" y="202" width="9.0" height="1" fill="#e90017"/><rect x="880.0" y="203" width="14.0" height="1" fill="#e5001b"/><rect x="880.0" y="204" width="14.0" height="1" fill="#e2001f"/><rect x="883.0" y="205" width="11.0" height="1" fill="#de0023"/><rect x="883.0" y="206" width="11.0" height="1" fill="#db0027"/><rect x="883.0" y="207" width="11.0" height="1" fill="#d7002a"/><rect x="880.0" y="208" width="14.0" height="1" fill="#d4002e"/><rect x="880.0" y="209" width="14.0" height="1" fill="#d00032"/><rect x="880.0" y="210" width="14.0" height="1" fill="#cc0036"/><rect x="879.0" y="211" width="15.0" height="1" fill="#c9003a"/><rect x="884.0" y="212" width="10.0" height="1" fill="#c30041"/><rect x="884.0" y="213" width="10.0" height="1" fill="#bd004a"/><rect x="885.0" y="214" width="9.0" height="1" fill="#b60053"/><rect x="885.0" y="215" width="9.0" height="1" fill="#b0005c"/><rect x="885.0" y="216" width="9.0" height="1" fill="#a90066"/><rect x="885.0" y="217" width="9.0" height="1" fill="#a3006f"/><rect x="888.0" y="218" width="6.0" height="1" fill="#9c0078"/><rect x="888.0" y="219" width="6.0" height="1" fill="#960081"/><rect x="888.0" y="220" width="6.0" height="1" fill="#8f008a"/><rect x="888.0" y="221" width="6.0" height="1" fill="#890093"/><rect x="890.0" y="222" width="4.0" height="1" fill="#83009c"/><rect x="890.0" y="223" width="4.0" height="1" fill="#7c00a5"/><rect x="890.0" y="224" width="4.0" height="1" fill="#7600ae"/><rect x="875.0" y="225" width="19.0" height="1" fill="#6f00b7"/><rect x="875.0" y="226" width="19.0" height="1" fill="#6900c0"/><rect x="875.0" y="227" width="19.0" height="1" fill="#6200c8"/><rect x="875.0" y="228" width="19.0" height="1" fill="#5a00cd"/><rect x="875.0" y="229" width="19.0" height="1" fill="#5300d1"/><rect x="878.0" y="230" width="16.0" height="1" fill="#4c00d5"/><rect x="878.0" y="231" width="16.0" height="1" fill="#4400d9"/><rect x="881.6" y="232" width="12.4" height="1" fill="#3d00dd"/><rect x="881.6" y="233" width="12.4" height="1" fill="#3500e1"/><rect x="882.6" y="234" width="11.4" height="1" fill="#2e00e5"/><rect x="882.6" y="235" width="11.4" height="1" fill="#2600e9"/><rect x="882.6" y="236" width="11.4" height="1" fill="#1f00ed"/><rect x="884.6" y="237" width="9.4" height="1" fill="#1800f1"/><rect x="877.0" y="238" width="17.0" height="1" fill="#1000f5"/><rect x="877.0" y="239" width="17.0" height="1" fill="#0900f9"/><rect x="876.0" y="240" width="18.0" height="1" fill="#0100fd"/><rect x="876.0" y="241" width="18.0" height="1" fill="#0003ff"/><rect x="876.0" y="242" width="18.0" height="1" fill="#0007ff"/><rect x="875.0" y="243" width="19.0" height="1" fill="#000bff"/><rect x="875.0" y="244" width="19.0" height="1" fill="#000fff"/><rect x="882.6" y="245" width="11.4" height="1" fill="#0013ff"/><rect x="883.6" y="246" width="10.4" height="1" fill="#0017ff"/><rect x="883.6" y="247" width="10.4" height="1" fill="#001cff"/><rect x="875.0" y="248" width="19.0" height="1" fill="#0020ff"/><rect x="875.0" y="249" width="19.0" height="1" fill="#0024ff"/><rect x="875.0" y="250" width="19.0" height="1" fill="#0028fe"/><rect x="875.0" y="251" width="19.0" height="1" fill="#002df6"/><rect x="875.0" y="252" width="19.0" height="1" fill="#0032ef"/><rect x="873.0" y="253" width="21.0" height="1" fill="#0036e8"/><rect x="873.0" y="254" width="21.0" height="1" fill="#003be1"/><rect x="873.0" y="255" width="21.0" height="1" fill="#0040da"/><rect x="864.7" y="256" width="29.3" height="1" fill="#0045d3"/><rect x="864.7" y="257" width="29.3" height="1" fill="#0049cc"/><rect x="864.7" y="258" width="29.3" height="1" fill="#004ec4"/><rect x="864.7" y="259" width="29.3" height="1" fill="#0053bd"/><rect x="864.7" y="260" width="29.3" height="1" fill="#0058b6"/><rect x="864.7" y="261" width="29.3" height="1" fill="#005caf"/><rect x="863.7" y="262" width="30.3" height="1" fill="#0061a8"/><rect x="863.7" y="263" width="30.3" height="1" fill="#0066a1"/><rect x="870.5" y="264" width="23.5" height="1" fill="#006b9a"/><rect x="870.5" y="265" width="23.5" height="1" fill="#007092"/><rect x="872.5" y="266" width="21.5" height="1" fill="#00748b"/><rect x="872.5" y="267" width="21.5" height="1" fill="#007984"/><rect x="880.0" y="268" width="14.0" height="1" fill="#007e7d"/><rect x="878.0" y="269" width="16.0" height="1" fill="#008376"/><rect x="878.0" y="270" width="16.0" height="1" fill="#00876f"/><rect x="878.0" y="271" width="16.0" height="1" fill="#008c68"/><rect x="870.7" y="272" width="23.3" height="1" fill="#009160"/><rect x="870.7" y="273" width="23.3" height="1" fill="#009659"/><rect x="870.7" y="274" width="23.3" height="1" fill="#009a56"/><rect x="869.7" y="275" width="24.3" height="1" fill="#009e52"/><rect x="869.7" y="276" width="24.3" height="1" fill="#00a24f"/><rect x="869.7" y="277" width="24.3" height="1" fill="#00a64b"/><rect x="873.7" y="278" width="20.3" height="1" fill="#00ab47"/><rect x="873.7" y="279" width="20.3" height="1" fill="#00af44"/><rect x="888.0" y="280" width="6.0" height="1" fill="#00b340"/><rect x="888.0" y="281" width="6.0" height="1" fill="#00b73d"/><rect x="883.0" y="282" width="11.0" height="1" fill="#00bb39"/><rect x="883.0" y="283" width="11.0" height="1" fill="#00c035"/><rect x="880.0" y="284" width="14.0" height="1" fill="#00c432"/><rect x="882.0" y="285" width="12.0" height="1" fill="#00c82e"/><rect x="882.0" y="286" width="12.0" height="1" fill="#00cc2b"/><rect x="882.0" y="287" width="12.0" height="1" fill="#00d027"/><rect x="867.4" y="288" width="26.6" height="1" fill="#00d523"/><rect x="867.4" y="289" width="26.6" height="1" fill="#00d920"/><rect x="867.4" y="290" width="26.6" height="1" fill="#00dd1c"/><rect x="868.4" y="291" width="25.6" height="1" fill="#00e119"/><rect x="868.4" y="292" width="25.6" height="1" fill="#00e515"/><rect x="868.4" y="293" width="25.6" height="1" fill="#00ea11"/><rect x="865.4" y="294" width="28.6" height="1" fill="#00ee0e"/><rect x="865.4" y="295" width="28.6" height="1" fill="#00f20a"/><rect x="882.0" y="296" width="12.0" height="1" fill="#00f607"/><rect x="882.0" y="297" width="12.0" height="1" fill="#00fa03"/><rect x="960.0" y="105" width="2.0" height="1" fill="#ffffff"/><rect x="960.0" y="106" width="2.0" height="1" fill="#fffffc"/><rect x="960.0" y="107" width="2.0" height="1" fill="#fffff6"/><rect x="960.0" y="108" width="2.0" height="1" fill="#fffff0"/><rect x="960.0" y="109" width="2.0" height="1" fill="#ffffea"/><rect x="960.0" y="110" width="1.0" height="1" fill="#ffffe4"/><rect x="960.0" y="111" width="1.0" height="1" fill="#ffffde"/><rect x="960.0" y="112" width="1.0" height="1" fill="#ffffd9"/><rect x="960.0" y="113" width="1.0" height="1" fill="#ffffd3"/><rect x="960.0" y="114" width="1.0" height="1" fill="#ffffcd"/><rect x="960.0" y="115" width="1.0" height="1" fill="#ffffc7"/><rect x="960.0" y="116" width="1.0" height="1" fill="#ffffc1"/><rect x="960.0" y="117" width="1.0" height="1" fill="#ffffbb"/><rect x="960.0" y="118" width="1.0" height="1" fill="#ffffb5"/><rect x="960.0" y="119" width="1.0" height="1" fill="#ffffb0"/><rect x="960.0" y="120" width="1.0" height="1" fill="#ffffaa"/><rect x="960.0" y="121" width="1.0" height="1" fill="#ffffa4"/><rect x="960.0" y="122" width="1.0" height="1" fill="#ffff9e"/><rect x="960.0" y="123" width="1.0" height="1" fill="#ffff98"/><rect x="960.0" y="124" width="1.0" height="1" fill="#ffff92"/><rect x="960.0" y="125" width="1.0" height="1" fill="#ffff8d"/><rect x="960.0" y="126" width="1.0" height="1" fill="#ffff87"/><rect x="960.0" y="127" width="1.0" height="1" fill="#ffff81"/><rect x="960.0" y="128" width="1.0" height="1" fill="#ffff7b"/><rect x="960.0" y="129" width="1.0" height="1" fill="#fffe75"/><rect x="960.0" y="130" width="1.0" height="1" fill="#fffd70"/><rect x="960.0" y="131" width="1.0" height="1" fill="#fffc6a"/><rect x="960.0" y="132" width="1.0" height="1" fill="#fffa64"/><rect x="960.0" y="133" width="1.0" height="1" fill="#fff95f"/><rect x="960.0" y="134" width="1.0" height="1" fill="#fff859"/><rect x="960.0" y="135" width="1.0" height="1" fill="#fff753"/><rect x="960.0" y="136" width="1.0" height="1" fill="#fff64e"/><rect x="960.0" y="137" width="1.0" height="1" fill="#fff548"/><rect x="960.0" y="138" width="1.0" height="1" fill="#fff342"/><rect x="960.0" y="139" width="1.0" height="1" fill="#fff23d"/><rect x="960.0" y="140" width="1.0" height="1" fill="#fff137"/><rect x="960.0" y="141" width="1.0" height="1" fill="#fff031"/><rect x="960.0" y="142" width="1.0" height="1" fill="#ffef2c"/><rect x="960.0" y="143" width="1.0" height="1" fill="#ffed26"/><rect x="960.0" y="144" width="1.0" height="1" fill="#ffec20"/><rect x="960.0" y="145" width="1.0" height="1" fill="#ffeb1b"/><rect x="960.0" y="146" width="1.0" height="1" fill="#ffea15"/><rect x="960.0" y="147" width="1.0" height="1" fill="#ffe90f"/><rect x="960.0" y="148" width="7.0" height="1" fill="#ffe80a"/><rect x="960.0" y="149" width="7.0" height="1" fill="#ffe604"/><rect x="960.0" y="150" width="7.0" height="1" fill="#ffe500"/><rect x="960.0" y="151" width="7.0" height="1" fill="#ffe100"/><rect x="960.0" y="152" width="7.0" height="1" fill="#ffdc00"/><rect x="960.0" y="153" width="7.0" height="1" fill="#ffd800"/><rect x="960.0" y="154" width="3.0" height="1" fill="#ffd400"/><rect x="960.0" y="155" width="3.0" height="1" fill="#ffd000"/><rect x="960.0" y="156" width="3.0" height="1" fill="#ffcc00"/><rect x="960.0" y="157" width="3.0" height="1" fill="#ffc800"/><rect x="960.0" y="158" width="3.0" height="1" fill="#ffc400"/><rect x="960.0" y="159" width="3.0" height="1" fill="#ffc000"/><rect x="960.0" y="160" width="3.0" height="1" fill="#ffbc00"/><rect x="960.0" y="161" width="3.0" height="1" fill="#ffb800"/><rect x="960.0" y="162" width="3.0" height="1" fill="#ffb400"/><rect x="960.0" y="163" width="3.0" height="1" fill="#ffb000"/><rect x="960.0" y="164" width="3.0" height="1" fill="#ffac00"/><rect x="960.0" y="165" width="3.0" height="1" fill="#ffa700"/><rect x="960.0" y="166" width="3.0" height="1" fill="#ffa300"/><rect x="960.0" y="167" width="2.0" height="1" fill="#ff9f00"/><rect x="960.0" y="168" width="2.0" height="1" fill="#ff9b00"/><rect x="960.0" y="169" width="2.0" height="1" fill="#ff9700"/><rect x="960.0" y="170" width="2.0" height="1" fill="#ff9300"/><rect x="960.0" y="171" width="2.0" height="1" fill="#ff8f00"/><rect x="960.0" y="172" width="2.0" height="1" fill="#ff8b00"/><rect x="960.0" y="173" width="2.0" height="1" fill="#ff8700"/><rect x="960.0" y="174" width="2.0" height="1" fill="#ff8300"/><rect x="960.0" y="175" width="2.0" height="1" fill="#ff7e00"/><rect x="960.0" y="176" width="2.0" height="1" fill="#ff7800"/><rect x="960.0" y="177" width="9.0" height="1" fill="#ff7200"/><rect x="960.0" y="178" width="9.0" height="1" fill="#ff6c00"/><rect x="960.0" y="179" width="9.0" height="1" fill="#ff6600"/><rect x="960.0" y="180" width="9.0" height="1" fill="#ff6000"/><rect x="960.0" y="181" width="9.0" height="1" fill="#ff5a00"/><rect x="960.0" y="182" width="6.0" height="1" fill="#ff5400"/><rect x="960.0" y="183" width="6.0" height="1" fill="#ff4e00"/><rect x="960.0" y="184" width="4.0" height="1" fill="#ff4800"/><rect x="960.0" y="185" width="4.0" height="1" fill="#ff4200"/><rect x="960.0" y="186" width="4.0" height="1" fill="#ff3c00"/><rect x="960.0" y="187" width="4.0" height="1" fill="#ff3600"/><rect x="960.0" y="188" width="4.0" height="1" fill="#ff3000"/><rect x="960.0" y="189" width="7.0" height="1" fill="#ff2a00"/><rect x="960.0" y="190" width="7.0" height="1" fill="#ff2400"/><rect x="960.0" y="191" width="7.0" height="1" fill="#ff1e00"/><rect x="960.0" y="192" width="10.0" height="1" fill="#ff1800"/><rect x="960.0" y="193" width="10.0" height="1" fill="#ff1100"/><rect x="960.0" y="194" width="3.0" height="1" fill="#ff0b00"/><rect x="960.0" y="195" width="3.0" height="1" fill="#ff0500"/><rect x="960.0" y="196" width="3.0" height="1" fill="#fe0000"/><rect x="960.0" y="197" width="3.0" height="1" fill="#fb0003"/><rect x="960.0" y="198" width="9.0" height="1" fill="#f70007"/><rect x="960.0" y="199" width="9.0" height="1" fill="#f4000b"/><rect x="960.0" y="200" width="9.0" height="1" fill="#f0000f"/><rect x="960.0" y="201" width="9.0" height="1" fill="#ed0013"/><rect x="960.0" y="202" width="8.0" height="1" fill="#e90017"/><rect x="960.0" y="203" width="8.0" height="1" fill="#e5001b"/><rect x="960.0" y="204" width="8.0" height="1" fill="#e2001f"/><rect x="960.0" y="205" width="4.0" height="1" fill="#de0023"/><rect x="960.0" y="206" width="4.0" height="1" fill="#db0027"/><rect x="960.0" y="207" width="11.5" height="1" fill="#d7002a"/><rect x="960.0" y="208" width="11.5" height="1" fill="#d4002e"/><rect x="960.0" y="209" width="11.5" height="1" fill="#d00032"/><rect x="960.0" y="210" width="11.5" height="1" fill="#cc0036"/><rect x="960.0" y="211" width="8.5" height="1" fill="#c9003a"/><rect x="960.0" y="212" width="8.5" height="1" fill="#c30041"/><rect x="960.0" y="213" width="8.5" height="1" fill="#bd004a"/><rect x="960.0" y="214" width="10.5" height="1" fill="#b60053"/><rect x="960.0" y="215" width="10.5" height="1" fill="#b0005c"/><rect x="960.0" y="216" width="5.0" height="1" fill="#a90066"/><rect x="960.0" y="217" width="5.0" height="1" fill="#a3006f"/><rect x="960.0" y="218" width="5.0" height="1" fill="#9c0078"/><rect x="960.0" y="219" width="5.0" height="1" fill="#960081"/><rect x="960.0" y="220" width="5.0" height="1" fill="#8f008a"/><rect x="960.0" y="221" width="5.0" height="1" fill="#890093"/><rect x="960.0" y="222" width="11.0" height="1" fill="#83009c"/><rect x="960.0" y="223" width="11.0" height="1" fill="#7c00a5"/><rect x="960.0" y="224" width="11.0" height="1" fill="#7600ae"/><rect x="960.0" y="225" width="11.0" height="1" fill="#6f00b7"/><rect x="960.0" y="226" width="11.0" height="1" fill="#6900c0"/><rect x="960.0" y="227" width="10.0" height="1" fill="#6200c8"/><rect x="960.0" y="228" width="10.0" height="1" fill="#5a00cd"/><rect x="960.0" y="229" width="10.0" height="1" fill="#5300d1"/><rect x="960.0" y="230" width="6.0" height="1" fill="#4c00d5"/><rect x="960.0" y="231" width="6.0" height="1" fill="#4400d9"/><rect x="960.0" y="232" width="26.0" height="1" fill="#3d00dd"/><rect x="960.0" y="233" width="26.0" height="1" fill="#3500e1"/><rect x="960.0" y="234" width="23.0" height="1" fill="#2e00e5"/><rect x="960.0" y="235" width="23.0" height="1" fill="#2600e9"/><rect x="960.0" y="236" width="23.0" height="1" fill="#1f00ed"/><rect x="960.0" y="237" width="26.0" height="1" fill="#1800f1"/><rect x="960.0" y="238" width="26.0" height="1" fill="#1000f5"/><rect x="960.0" y="239" width="37.0" height="1" fill="#0900f9"/><rect x="960.0" y="240" width="38.0" height="1" fill="#0100fd"/><rect x="960.0" y="241" width="38.0" height="1" fill="#0003ff"/><rect x="960.0" y="242" width="38.0" height="1" fill="#0007ff"/><rect x="960.0" y="243" width="37.0" height="1" fill="#000bff"/><rect x="960.0" y="244" width="37.0" height="1" fill="#000fff"/><rect x="960.0" y="245" width="26.0" height="1" fill="#0013ff"/><rect x="960.0" y="246" width="23.0" height="1" fill="#0017ff"/><rect x="960.0" y="247" width="23.0" height="1" fill="#001cff"/><rect x="960.0" y="248" width="23.0" height="1" fill="#0020ff"/><rect x="960.0" y="249" width="9.6" height="1" fill="#0024ff"/><rect x="960.0" y="250" width="10.6" height="1" fill="#0028fe"/><rect x="960.0" y="251" width="10.6" height="1" fill="#002df6"/><rect x="960.0" y="252" width="10.6" height="1" fill="#0032ef"/><rect x="960.0" y="253" width="13.6" height="1" fill="#0036e8"/><rect x="960.0" y="254" width="13.6" height="1" fill="#003be1"/><rect x="960.0" y="255" width="13.6" height="1" fill="#0040da"/><rect x="960.0" y="256" width="14.6" height="1" fill="#0045d3"/><rect x="960.0" y="257" width="14.6" height="1" fill="#0049cc"/><rect x="960.0" y="258" width="31.7" height="1" fill="#004ec4"/><rect x="960.0" y="259" width="31.7" height="1" fill="#0053bd"/><rect x="960.0" y="260" width="31.7" height="1" fill="#0058b6"/><rect x="960.0" y="261" width="31.7" height="1" fill="#005caf"/><rect x="960.0" y="262" width="26.7" height="1" fill="#0061a8"/><rect x="960.0" y="263" width="26.7" height="1" fill="#0066a1"/><rect x="960.0" y="264" width="23.0" height="1" fill="#006b9a"/><rect x="960.0" y="265" width="23.0" height="1" fill="#007092"/><rect x="960.0" y="266" width="27.0" height="1" fill="#00748b"/><rect x="960.0" y="267" width="27.0" height="1" fill="#007984"/><rect x="960.0" y="268" width="27.0" height="1" fill="#007e7d"/><rect x="960.0" y="269" width="26.0" height="1" fill="#008376"/><rect x="960.0" y="270" width="7.0" height="1" fill="#00876f"/><rect x="960.0" y="271" width="7.0" height="1" fill="#008c68"/><rect x="960.0" y="272" width="6.0" height="1" fill="#009160"/><rect x="960.0" y="273" width="6.0" height="1" fill="#009659"/><rect x="960.0" y="274" width="6.0" height="1" fill="#009a56"/><rect x="960.0" y="275" width="16.0" height="1" fill="#009e52"/><rect x="960.0" y="276" width="16.0" height="1" fill="#00a24f"/><rect x="960.0" y="277" width="16.0" height="1" fill="#00a64b"/><rect x="960.0" y="278" width="20.0" height="1" fill="#00ab47"/><rect x="960.0" y="279" width="20.0" height="1" fill="#00af44"/><rect x="960.0" y="280" width="20.0" height="1" fill="#00b340"/><rect x="960.0" y="281" width="3.0" height="1" fill="#00b73d"/><rect x="960.0" y="282" width="3.0" height="1" fill="#00bb39"/><rect x="960.0" y="283" width="3.0" height="1" fill="#00c035"/><rect x="960.0" y="284" width="3.0" height="1" fill="#00c432"/><rect x="960.0" y="285" width="3.0" height="1" fill="#00c82e"/><rect x="960.0" y="286" width="3.0" height="1" fill="#00cc2b"/><rect x="960.0" y="287" width="16.0" height="1" fill="#00d027"/><rect x="960.0" y="288" width="18.0" height="1" fill="#00d523"/><rect x="960.0" y="289" width="18.0" height="1" fill="#00d920"/><rect x="960.0" y="290" width="18.0" height="1" fill="#00dd1c"/><rect x="960.0" y="291" width="15.0" height="1" fill="#00e119"/><rect x="960.0" y="292" width="15.0" height="1" fill="#00e515"/><rect x="960.0" y="293" width="15.0" height="1" fill="#00ea11"/><rect x="960.0" y="294" width="21.0" height="1" fill="#00ee0e"/><rect x="960.0" y="295" width="21.0" height="1" fill="#00f20a"/><rect x="960.0" y="296" width="3.0" height="1" fill="#00f607"/><rect x="960.0" y="297" width="3.0" height="1" fill="#00fa03"/><rect x="1120.0" y="107" width="12.0" height="1" fill="#fffff6"/><rect x="1120.0" y="108" width="12.0" height="1" fill="#fffff0"/><rect x="1119.0" y="109" width="13.0" height="1" fill="#ffffea"/><rect x="1131.0" y="110" width="1.0" height="1" fill="#ffffe4"/><rect x="1131.0" y="111" width="1.0" height="1" fill="#ffffde"/><rect x="1131.0" y="112" width="1.0" height="1" fill="#ffffd9"/><rect x="1131.0" y="113" width="1.0" height="1" fill="#ffffd3"/><rect x="1131.0" y="114" width="1.0" height="1" fill="#ffffcd"/><rect x="1131.0" y="115" width="1.0" height="1" fill="#ffffc7"/><rect x="1131.0" y="116" width="1.0" height="1" fill="#ffffc1"/><rect x="1131.0" y="117" width="1.0" height="1" fill="#ffffbb"/><rect x="1131.0" y="118" width="1.0" height="1" fill="#ffffb5"/><rect x="1131.0" y="119" width="1.0" height="1" fill="#ffffb0"/><rect x="1131.0" y="120" width="1.0" height="1" fill="#ffffaa"/><rect x="1131.0" y="121" width="1.0" height="1" fill="#ffffa4"/><rect x="1131.0" y="122" width="1.0" height="1" fill="#ffff9e"/><rect x="1131.0" y="123" width="1.0" height="1" fill="#ffff98"/><rect x="1131.0" y="124" width="1.0" height="1" fill="#ffff92"/><rect x="1131.0" y="125" width="1.0" height="1" fill="#ffff8d"/><rect x="1131.0" y="126" width="1.0" height="1" fill="#ffff87"/><rect x="1131.0" y="127" width="1.0" height="1" fill="#ffff81"/><rect x="1131.0" y="128" width="1.0" height="1" fill="#ffff7b"/><rect x="1131.0" y="129" width="1.0" height="1" fill="#fffe75"/><rect x="1131.0" y="130" width="1.0" height="1" fill="#fffd70"/><rect x="1131.0" y="131" width="1.0" height="1" fill="#fffc6a"/><rect x="1131.0" y="132" width="1.0" height="1" fill="#fffa64"/><rect x="1131.0" y="133" width="1.0" height="1" fill="#fff95f"/><rect x="1131.0" y="134" width="1.0" height="1" fill="#fff859"/><rect x="1131.0" y="135" width="1.0" height="1" fill="#fff753"/><rect x="1131.0" y="136" width="1.0" height="1" fill="#fff64e"/><rect x="1126.7" y="137" width="5.3" height="1" fill="#fff548"/><rect x="1126.7" y="138" width="5.3" height="1" fill="#fff342"/><rect x="1126.7" y="139" width="5.3" height="1" fill="#fff23d"/><rect x="1126.7" y="140" width="5.3" height="1" fill="#fff137"/><rect x="1126.7" y="141" width="5.3" height="1" fill="#fff031"/><rect x="1126.7" y="142" width="5.3" height="1" fill="#ffef2c"/><rect x="1126.7" y="143" width="5.3" height="1" fill="#ffed26"/><rect x="1126.7" y="144" width="5.3" height="1" fill="#ffec20"/><rect x="1126.7" y="145" width="5.3" height="1" fill="#ffeb1b"/><rect x="1126.7" y="146" width="5.3" height="1" fill="#ffea15"/><rect x="1126.7" y="147" width="5.3" height="1" fill="#ffe90f"/><rect x="1126.7" y="148" width="5.3" height="1" fill="#ffe80a"/><rect x="1126.7" y="149" width="5.3" height="1" fill="#ffe604"/><rect x="1126.7" y="150" width="5.3" height="1" fill="#ffe500"/><rect x="1126.7" y="151" width="5.3" height="1" fill="#ffe100"/><rect x="1126.7" y="152" width="5.3" height="1" fill="#ffdc00"/><rect x="1126.7" y="153" width="5.3" height="1" fill="#ffd800"/><rect x="1126.7" y="154" width="5.3" height="1" fill="#ffd400"/><rect x="1126.7" y="155" width="5.3" height="1" fill="#ffd000"/><rect x="1129.0" y="156" width="3.0" height="1" fill="#ffcc00"/><rect x="1129.0" y="157" width="3.0" height="1" fill="#ffc800"/><rect x="1129.0" y="158" width="3.0" height="1" fill="#ffc400"/><rect x="1129.0" y="159" width="3.0" height="1" fill="#ffc000"/><rect x="1129.0" y="160" width="3.0" height="1" fill="#ffbc00"/><rect x="1129.0" y="161" width="3.0" height="1" fill="#ffb800"/><rect x="1129.0" y="162" width="3.0" height="1" fill="#ffb400"/><rect x="1129.0" y="163" width="3.0" height="1" fill="#ffb000"/><rect x="1129.0" y="164" width="3.0" height="1" fill="#ffac00"/><rect x="1129.0" y="165" width="3.0" height="1" fill="#ffa700"/><rect x="1129.0" y="166" width="3.0" height="1" fill="#ffa300"/><rect x="1127.0" y="167" width="5.0" height="1" fill="#ff9f00"/><rect x="1127.0" y="168" width="5.0" height="1" fill="#ff9b00"/><rect x="1127.0" y="169" width="5.0" height="1" fill="#ff9700"/><rect x="1127.0" y="170" width="5.0" height="1" fill="#ff9300"/><rect x="1120.0" y="171" width="12.0" height="1" fill="#ff8f00"/><rect x="1120.0" y="172" width="12.0" height="1" fill="#ff8b00"/><rect x="1120.0" y="173" width="12.0" height="1" fill="#ff8700"/><rect x="1120.0" y="174" width="12.0" height="1" fill="#ff8300"/><rect x="1120.0" y="175" width="12.0" height="1" fill="#ff7e00"/><rect x="1118.0" y="176" width="14.0" height="1" fill="#ff7800"/><rect x="1118.0" y="177" width="14.0" height="1" fill="#ff7200"/><rect x="1118.0" y="178" width="14.0" height="1" fill="#ff6c00"/><rect x="1121.0" y="179" width="11.0" height="1" fill="#ff6600"/><rect x="1121.0" y="180" width="11.0" height="1" fill="#ff6000"/><rect x="1121.0" y="181" width="11.0" height="1" fill="#ff5a00"/><rect x="1123.0" y="182" width="9.0" height="1" fill="#ff5400"/><rect x="1123.0" y="183" width="9.0" height="1" fill="#ff4e00"/><rect x="1126.0" y="184" width="6.0" height="1" fill="#ff4800"/><rect x="1126.0" y="185" width="6.0" height="1" fill="#ff4200"/><rect x="1126.0" y="186" width="6.0" height="1" fill="#ff3c00"/><rect x="1126.0" y="187" width="6.0" height="1" fill="#ff3600"/><rect x="1126.0" y="188" width="6.0" height="1" fill="#ff3000"/><rect x="1126.0" y="189" width="6.0" height="1" fill="#ff2a00"/><rect x="1126.7" y="190" width="5.3" height="1" fill="#ff2400"/><rect x="1126.7" y="191" width="5.3" height="1" fill="#ff1e00"/><rect x="1126.7" y="192" width="5.3" height="1" fill="#ff1800"/><rect x="1126.7" y="193" width="5.3" height="1" fill="#ff1100"/><rect x="1123.0" y="194" width="9.0" height="1" fill="#ff0b00"/><rect x="1126.0" y="195" width="6.0" height="1" fill="#ff0500"/><rect x="1126.0" y="196" width="6.0" height="1" fill="#fe0000"/><rect x="1126.0" y="197" width="6.0" height="1" fill="#fb0003"/><rect x="1125.0" y="198" width="7.0" height="1" fill="#f70007"/><rect x="1125.0" y="199" width="7.0" height="1" fill="#f4000b"/><rect x="1125.0" y="200" width="7.0" height="1" fill="#f0000f"/><rect x="1125.0" y="201" width="7.0" height="1" fill="#ed0013"/><rect x="1122.0" y="202" width="10.0" height="1" fill="#e90017"/><rect x="1122.0" y="203" width="10.0" height="1" fill="#e5001b"/><rect x="1122.0" y="204" width="10.0" height="1" fill="#e2001f"/><rect x="1123.0" y="205" width="9.0" height="1" fill="#de0023"/><rect x="1123.0" y="206" width="9.0" height="1" fill="#db0027"/><rect x="1123.0" y="207" width="9.0" height="1" fill="#d7002a"/><rect x="1126.0" y="208" width="6.0" height="1" fill="#d4002e"/><rect x="1126.0" y="209" width="6.0" height="1" fill="#d00032"/><rect x="1126.0" y="210" width="6.0" height="1" fill="#cc0036"/><rect x="1123.0" y="211" width="9.0" height="1" fill="#c9003a"/><rect x="1123.0" y="212" width="9.0" height="1" fill="#c30041"/><rect x="1123.0" y="213" width="9.0" height="1" fill="#bd004a"/><rect x="1123.0" y="214" width="9.0" height="1" fill="#b60053"/><rect x="1123.0" y="215" width="9.0" height="1" fill="#b0005c"/><rect x="1123.0" y="216" width="9.0" height="1" fill="#a90066"/><rect x="1123.0" y="217" width="9.0" height="1" fill="#a3006f"/><rect x="1124.0" y="218" width="8.0" height="1" fill="#9c0078"/><rect x="1124.0" y="219" width="8.0" height="1" fill="#960081"/><rect x="1124.0" y="220" width="8.0" height="1" fill="#8f008a"/><rect x="1125.0" y="221" width="7.0" height="1" fill="#890093"/><rect x="1125.0" y="222" width="7.0" height="1" fill="#83009c"/><rect x="1125.0" y="223" width="7.0" height="1" fill="#7c00a5"/><rect x="1123.0" y="224" width="9.0" height="1" fill="#7600ae"/><rect x="1123.0" y="225" width="9.0" height="1" fill="#6f00b7"/><rect x="1123.0" y="226" width="9.0" height="1" fill="#6900c0"/><rect x="1120.0" y="227" width="12.0" height="1" fill="#6200c8"/><rect x="1117.0" y="228" width="15.0" height="1" fill="#5a00cd"/><rect x="1117.0" y="229" width="15.0" height="1" fill="#5300d1"/><rect x="1121.0" y="230" width="11.0" height="1" fill="#4c00d5"/><rect x="1121.0" y="231" width="11.0" height="1" fill="#4400d9"/><rect x="1114.5" y="232" width="17.5" height="1" fill="#3d00dd"/><rect x="1114.5" y="233" width="17.5" height="1" fill="#3500e1"/><rect x="1114.5" y="234" width="17.5" height="1" fill="#2e00e5"/><rect x="1108.8" y="235" width="23.2" height="1" fill="#2600e9"/><rect x="1108.8" y="236" width="23.2" height="1" fill="#1f00ed"/><rect x="1106.8" y="237" width="25.2" height="1" fill="#1800f1"/><rect x="1106.8" y="238" width="25.2" height="1" fill="#1000f5"/><rect x="1106.8" y="239" width="25.2" height="1" fill="#0900f9"/><rect x="1107.8" y="240" width="24.2" height="1" fill="#0100fd"/><rect x="1107.8" y="241" width="24.2" height="1" fill="#0003ff"/><rect x="1107.8" y="242" width="24.2" height="1" fill="#0007ff"/><rect x="1113.0" y="243" width="19.0" height="1" fill="#000bff"/><rect x="1113.0" y="244" width="19.0" height="1" fill="#000fff"/><rect x="1113.0" y="245" width="19.0" height="1" fill="#0013ff"/><rect x="1115.0" y="246" width="17.0" height="1" fill="#0017ff"/><rect x="1115.0" y="247" width="17.0" height="1" fill="#001cff"/><rect x="1115.0" y="248" width="17.0" height="1" fill="#0020ff"/><rect x="1115.0" y="249" width="17.0" height="1" fill="#0024ff"/><rect x="1118.0" y="250" width="14.0" height="1" fill="#0028fe"/><rect x="1124.0" y="251" width="8.0" height="1" fill="#002df6"/><rect x="1124.0" y="252" width="8.0" height="1" fill="#0032ef"/><rect x="1123.0" y="253" width="9.0" height="1" fill="#0036e8"/><rect x="1123.0" y="254" width="9.0" height="1" fill="#003be1"/><rect x="1123.0" y="255" width="9.0" height="1" fill="#0040da"/><rect x="1118.0" y="256" width="14.0" height="1" fill="#0045d3"/><rect x="1118.0" y="257" width="14.0" height="1" fill="#0049cc"/><rect x="1112.0" y="258" width="20.0" height="1" fill="#004ec4"/><rect x="1114.0" y="259" width="18.0" height="1" fill="#0053bd"/><rect x="1114.0" y="260" width="18.0" height="1" fill="#0058b6"/><rect x="1114.0" y="261" width="18.0" height="1" fill="#005caf"/><rect x="1114.0" y="262" width="18.0" height="1" fill="#0061a8"/><rect x="1114.0" y="263" width="18.0" height="1" fill="#0066a1"/><rect x="1114.0" y="264" width="18.0" height="1" fill="#006b9a"/><rect x="1114.0" y="265" width="18.0" height="1" fill="#007092"/><rect x="1111.6" y="266" width="20.4" height="1" fill="#00748b"/><rect x="1111.6" y="267" width="20.4" height="1" fill="#007984"/><rect x="1111.6" y="268" width="20.4" height="1" fill="#007e7d"/><rect x="1113.6" y="269" width="18.4" height="1" fill="#008376"/><rect x="1113.6" y="270" width="18.4" height="1" fill="#00876f"/><rect x="1113.6" y="271" width="18.4" height="1" fill="#008c68"/><rect x="1114.6" y="272" width="17.4" height="1" fill="#009160"/><rect x="1120.0" y="273" width="12.0" height="1" fill="#009659"/><rect x="1120.0" y="274" width="12.0" height="1" fill="#009a56"/><rect x="1115.0" y="275" width="17.0" height="1" fill="#009e52"/><rect x="1115.0" y="276" width="17.0" height="1" fill="#00a24f"/><rect x="1115.0" y="277" width="17.0" height="1" fill="#00a64b"/><rect x="1117.0" y="278" width="15.0" height="1" fill="#00ab47"/><rect x="1111.6" y="279" width="20.4" height="1" fill="#00af44"/><rect x="1111.6" y="280" width="20.4" height="1" fill="#00b340"/><rect x="1111.6" y="281" width="20.4" height="1" fill="#00b73d"/><rect x="1114.6" y="282" width="17.4" height="1" fill="#00bb39"/><rect x="1114.6" y="283" width="17.4" height="1" fill="#00c035"/><rect x="1114.6" y="284" width="17.4" height="1" fill="#00c432"/><rect x="1112.6" y="285" width="19.4" height="1" fill="#00c82e"/><rect x="1112.6" y="286" width="19.4" height="1" fill="#00cc2b"/><rect x="1105.0" y="287" width="27.0" height="1" fill="#00d027"/><rect x="1102.0" y="288" width="30.0" height="1" fill="#00d523"/><rect x="1102.0" y="289" width="30.0" height="1" fill="#00d920"/><rect x="1102.0" y="290" width="30.0" height="1" fill="#00dd1c"/><rect x="1104.0" y="291" width="28.0" height="1" fill="#00e119"/><rect x="1107.8" y="292" width="24.2" height="1" fill="#00e515"/><rect x="1107.8" y="293" width="24.2" height="1" fill="#00ea11"/><rect x="1106.8" y="294" width="25.2" height="1" fill="#00ee0e"/><rect x="1106.8" y="295" width="25.2" height="1" fill="#00f20a"/><rect x="1106.8" y="296" width="25.2" height="1" fill="#00f607"/><rect x="1106.8" y="297" width="25.2" height="1" fill="#00fa03"/><rect x="1199.0" y="107" width="13.0" height="1" fill="#fffff6"/><rect x="1199.0" y="108" width="13.0" height="1" fill="#fffff0"/><rect x="1199.0" y="109" width="11.0" height="1" fill="#ffffea"/><rect x="1199.0" y="110" width="1.0" height="1" fill="#ffffe4"/><rect x="1199.0" y="111" width="1.0" height="1" fill="#ffffde"/><rect x="1199.0" y="112" width="1.0" height="1" fill="#ffffd9"/><rect x="1199.0" y="113" width="1.0" height="1" fill="#ffffd3"/><rect x="1199.0" y="114" width="1.0" height="1" fill="#ffffcd"/><rect x="1199.0" y="115" width="1.0" height="1" fill="#ffffc7"/><rect x="1199.0" y="116" width="1.0" height="1" fill="#ffffc1"/><rect x="1199.0" y="117" width="1.0" height="1" fill="#ffffbb"/><rect x="1199.0" y="118" width="1.0" height="1" fill="#ffffb5"/><rect x="1199.0" y="119" width="1.0" height="1" fill="#ffffb0"/><rect x="1199.0" y="120" width="1.0" height="1" fill="#ffffaa"/><rect x="1199.0" y="121" width="1.0" height="1" fill="#ffffa4"/><rect x="1199.0" y="122" width="1.0" height="1" fill="#ffff9e"/><rect x="1199.0" y="123" width="1.0" height="1" fill="#ffff98"/><rect x="1199.0" y="124" width="1.0" height="1" fill="#ffff92"/><rect x="1199.0" y="125" width="1.0" height="1" fill="#ffff8d"/><rect x="1199.0" y="126" width="1.0" height="1" fill="#ffff87"/><rect x="1199.0" y="127" width="1.0" height="1" fill="#ffff81"/><rect x="1199.0" y="128" width="1.0" height="1" fill="#ffff7b"/><rect x="1199.0" y="129" width="1.0" height="1" fill="#fffe75"/><rect x="1199.0" y="130" width="1.0" height="1" fill="#fffd70"/><rect x="1199.0" y="131" width="1.0" height="1" fill="#fffc6a"/><rect x="1199.0" y="132" width="1.0" height="1" fill="#fffa64"/><rect x="1199.0" y="133" width="1.0" height="1" fill="#fff95f"/><rect x="1199.0" y="134" width="1.0" height="1" fill="#fff859"/><rect x="1199.0" y="135" width="1.0" height="1" fill="#fff753"/><rect x="1199.0" y="136" width="1.0" height="1" fill="#fff64e"/><rect x="1199.0" y="137" width="2.5" height="1" fill="#fff548"/><rect x="1199.0" y="138" width="2.5" height="1" fill="#fff342"/><rect x="1199.0" y="139" width="2.5" height="1" fill="#fff23d"/><rect x="1199.0" y="140" width="2.5" height="1" fill="#fff137"/><rect x="1199.0" y="141" width="2.5" height="1" fill="#fff031"/><rect x="1199.0" y="142" width="2.5" height="1" fill="#ffef2c"/><rect x="1199.0" y="143" width="4.7" height="1" fill="#ffed26"/><rect x="1199.0" y="144" width="4.7" height="1" fill="#ffec20"/><rect x="1199.0" y="145" width="4.7" height="1" fill="#ffeb1b"/><rect x="1199.0" y="146" width="4.7" height="1" fill="#ffea15"/><rect x="1199.0" y="147" width="4.7" height="1" fill="#ffe90f"/><rect x="1199.0" y="148" width="4.7" height="1" fill="#ffe80a"/><rect x="1199.0" y="149" width="4.7" height="1" fill="#ffe604"/><rect x="1199.0" y="150" width="4.7" height="1" fill="#ffe500"/><rect x="1199.0" y="151" width="4.7" height="1" fill="#ffe100"/><rect x="1199.0" y="152" width="4.7" height="1" fill="#ffdc00"/><rect x="1199.0" y="153" width="4.7" height="1" fill="#ffd800"/><rect x="1199.0" y="154" width="4.7" height="1" fill="#ffd400"/><rect x="1199.0" y="155" width="4.7" height="1" fill="#ffd000"/><rect x="1199.0" y="156" width="3.0" height="1" fill="#ffcc00"/><rect x="1199.0" y="157" width="3.0" height="1" fill="#ffc800"/><rect x="1199.0" y="158" width="3.0" height="1" fill="#ffc400"/><rect x="1199.0" y="159" width="3.0" height="1" fill="#ffc000"/><rect x="1199.0" y="160" width="3.0" height="1" fill="#ffbc00"/><rect x="1199.0" y="161" width="3.0" height="1" fill="#ffb800"/><rect x="1199.0" y="162" width="3.0" height="1" fill="#ffb400"/><rect x="1199.0" y="163" width="3.0" height="1" fill="#ffb000"/><rect x="1199.0" y="164" width="3.0" height="1" fill="#ffac00"/><rect x="1199.0" y="165" width="3.0" height="1" fill="#ffa700"/><rect x="1199.0" y="166" width="3.0" height="1" fill="#ffa300"/><rect x="1199.0" y="167" width="3.0" height="1" fill="#ff9f00"/><rect x="1199.0" y="168" width="3.0" height="1" fill="#ff9b00"/><rect x="1199.0" y="169" width="3.0" height="1" fill="#ff9700"/><rect x="1199.0" y="170" width="3.0" height="1" fill="#ff9300"/><rect x="1199.0" y="171" width="7.0" height="1" fill="#ff8f00"/><rect x="1199.0" y="172" width="7.0" height="1" fill="#ff8b00"/><rect x="1199.0" y="173" width="11.0" height="1" fill="#ff8700"/><rect x="1199.0" y="174" width="11.0" height="1" fill="#ff8300"/><rect x="1199.0" y="175" width="11.0" height="1" fill="#ff7e00"/><rect x="1199.0" y="176" width="10.0" height="1" fill="#ff7800"/><rect x="1199.0" y="177" width="10.0" height="1" fill="#ff7200"/><rect x="1199.0" y="178" width="10.0" height="1" fill="#ff6c00"/><rect x="1199.0" y="179" width="9.0" height="1" fill="#ff6600"/><rect x="1199.0" y="180" width="9.0" height="1" fill="#ff6000"/><rect x="1199.0" y="181" width="9.0" height="1" fill="#ff5a00"/><rect x="1199.0" y="182" width="11.0" height="1" fill="#ff5400"/><rect x="1199.0" y="183" width="11.0" height="1" fill="#ff4e00"/><rect x="1199.0" y="184" width="4.0" height="1" fill="#ff4800"/><rect x="1199.0" y="185" width="4.0" height="1" fill="#ff4200"/><rect x="1199.0" y="186" width="4.0" height="1" fill="#ff3c00"/><rect x="1199.0" y="187" width="4.0" height="1" fill="#ff3600"/><rect x="1199.0" y="188" width="4.0" height="1" fill="#ff3000"/><rect x="1199.0" y="189" width="4.0" height="1" fill="#ff2a00"/><rect x="1199.0" y="190" width="6.0" height="1" fill="#ff2400"/><rect x="1199.0" y="191" width="6.0" height="1" fill="#ff1e00"/><rect x="1199.0" y="192" width="6.0" height="1" fill="#ff1800"/><rect x="1199.0" y="193" width="6.0" height="1" fill="#ff1100"/><rect x="1199.0" y="194" width="6.0" height="1" fill="#ff0b00"/><rect x="1199.0" y="195" width="6.0" height="1" fill="#ff0500"/><rect x="1199.0" y="196" width="6.0" height="1" fill="#fe0000"/><rect x="1199.0" y="197" width="4.0" height="1" fill="#fb0003"/><rect x="1199.0" y="198" width="4.0" height="1" fill="#f70007"/><rect x="1199.0" y="199" width="4.0" height="1" fill="#f4000b"/><rect x="1199.0" y="200" width="4.0" height="1" fill="#f0000f"/><rect x="1199.0" y="201" width="4.0" height="1" fill="#ed0013"/><rect x="1199.0" y="202" width="8.0" height="1" fill="#e90017"/><rect x="1199.0" y="203" width="8.0" height="1" fill="#e5001b"/><rect x="1199.0" y="204" width="8.0" height="1" fill="#e2001f"/><rect x="1199.0" y="205" width="12.0" height="1" fill="#de0023"/><rect x="1199.0" y="206" width="12.0" height="1" fill="#db0027"/><rect x="1199.0" y="207" width="12.0" height="1" fill="#d7002a"/><rect x="1199.0" y="208" width="9.0" height="1" fill="#d4002e"/><rect x="1199.0" y="209" width="9.0" height="1" fill="#d00032"/><rect x="1199.0" y="210" width="9.0" height="1" fill="#cc0036"/><rect x="1199.0" y="211" width="13.0" height="1" fill="#c9003a"/><rect x="1199.0" y="212" width="13.0" height="1" fill="#c30041"/><rect x="1199.0" y="213" width="13.0" height="1" fill="#bd004a"/><rect x="1199.0" y="214" width="13.0" height="1" fill="#b60053"/><rect x="1199.0" y="215" width="13.0" height="1" fill="#b0005c"/><rect x="1199.0" y="216" width="13.0" height="1" fill="#a90066"/><rect x="1199.0" y="217" width="13.0" height="1" fill="#a3006f"/><rect x="1199.0" y="218" width="16.0" height="1" fill="#9c0078"/><rect x="1199.0" y="219" width="16.0" height="1" fill="#960081"/><rect x="1199.0" y="220" width="16.0" height="1" fill="#8f008a"/><rect x="1199.0" y="221" width="12.0" height="1" fill="#890093"/><rect x="1199.0" y="222" width="12.0" height="1" fill="#83009c"/><rect x="1199.0" y="223" width="12.0" height="1" fill="#7c00a5"/><rect x="1199.0" y="224" width="5.5" height="1" fill="#7600ae"/><rect x="1199.0" y="225" width="5.5" height="1" fill="#6f00b7"/><rect x="1199.0" y="226" width="5.5" height="1" fill="#6900c0"/><rect x="1199.0" y="227" width="5.5" height="1" fill="#6200c8"/><rect x="1199.0" y="228" width="5.5" height="1" fill="#5a00cd"/><rect x="1199.0" y="229" width="5.5" height="1" fill="#5300d1"/><rect x="1199.0" y="230" width="5.5" height="1" fill="#4c00d5"/><rect x="1199.0" y="231" width="5.5" height="1" fill="#4400d9"/><rect x="1199.0" y="232" width="3.0" height="1" fill="#3d00dd"/><rect x="1199.0" y="233" width="3.0" height="1" fill="#3500e1"/><rect x="1199.0" y="234" width="3.0" height="1" fill="#2e00e5"/><rect x="1199.0" y="235" width="12.0" height="1" fill="#2600e9"/><rect x="1199.0" y="236" width="12.0" height="1" fill="#1f00ed"/><rect x="1199.0" y="237" width="12.0" height="1" fill="#1800f1"/><rect x="1199.0" y="238" width="12.0" height="1" fill="#1000f5"/><rect x="1199.0" y="239" width="12.0" height="1" fill="#0900f9"/><rect x="1199.0" y="240" width="10.0" height="1" fill="#0100fd"/><rect x="1199.0" y="241" width="10.0" height="1" fill="#0003ff"/><rect x="1199.0" y="242" width="10.0" height="1" fill="#0007ff"/><rect x="1199.0" y="243" width="12.0" height="1" fill="#000bff"/><rect x="1199.0" y="244" width="12.0" height="1" fill="#000fff"/><rect x="1199.0" y="245" width="12.0" height="1" fill="#0013ff"/><rect x="1199.0" y="246" width="6.0" height="1" fill="#0017ff"/><rect x="1199.0" y="247" width="6.0" height="1" fill="#001cff"/><rect x="1199.0" y="248" width="6.0" height="1" fill="#0020ff"/><rect x="1199.0" y="249" width="4.0" height="1" fill="#0024ff"/><rect x="1199.0" y="250" width="4.0" height="1" fill="#0028fe"/><rect x="1199.0" y="251" width="4.0" height="1" fill="#002df6"/><rect x="1199.0" y="252" width="17.0" height="1" fill="#0032ef"/><rect x="1199.0" y="253" width="14.0" height="1" fill="#0036e8"/><rect x="1199.0" y="254" width="14.0" height="1" fill="#003be1"/><rect x="1199.0" y="255" width="14.0" height="1" fill="#0040da"/><rect x="1199.0" y="256" width="13.0" height="1" fill="#0045d3"/><rect x="1199.0" y="257" width="13.0" height="1" fill="#0049cc"/><rect x="1199.0" y="258" width="16.8" height="1" fill="#004ec4"/><rect x="1199.0" y="259" width="17.8" height="1" fill="#0053bd"/><rect x="1199.0" y="260" width="17.8" height="1" fill="#0058b6"/><rect x="1199.0" y="261" width="17.8" height="1" fill="#005caf"/><rect x="1199.0" y="262" width="26.0" height="1" fill="#0061a8"/><rect x="1199.0" y="263" width="26.0" height="1" fill="#0066a1"/><rect x="1199.0" y="264" width="26.0" height="1" fill="#006b9a"/><rect x="1199.0" y="265" width="26.0" height="1" fill="#007092"/><rect x="1199.0" y="266" width="35.0" height="1" fill="#00748b"/><rect x="1199.0" y="267" width="35.0" height="1" fill="#007984"/><rect x="1199.0" y="268" width="35.0" height="1" fill="#007e7d"/><rect x="1199.0" y="269" width="17.0" height="1" fill="#008376"/><rect x="1199.0" y="270" width="17.0" height="1" fill="#00876f"/><rect x="1199.0" y="271" width="14.0" height="1" fill="#008c68"/><rect x="1199.0" y="272" width="14.0" height="1" fill="#009160"/><rect x="1199.0" y="273" width="14.0" height="1" fill="#009659"/><rect x="1199.0" y="274" width="14.0" height="1" fill="#009a56"/><rect x="1199.0" y="275" width="14.0" height="1" fill="#009e52"/><rect x="1199.0" y="276" width="14.0" height="1" fill="#00a24f"/><rect x="1199.0" y="277" width="5.5" height="1" fill="#00a64b"/><rect x="1199.0" y="278" width="5.5" height="1" fill="#00ab47"/><rect x="1199.0" y="279" width="5.5" height="1" fill="#00af44"/><rect x="1199.0" y="280" width="5.5" height="1" fill="#00b340"/><rect x="1199.0" y="281" width="5.5" height="1" fill="#00b73d"/><rect x="1199.0" y="282" width="5.5" height="1" fill="#00bb39"/><rect x="1199.0" y="283" width="5.5" height="1" fill="#00c035"/><rect x="1199.0" y="284" width="5.5" height="1" fill="#00c432"/><rect x="1199.0" y="285" width="5.5" height="1" fill="#00c82e"/><rect x="1199.0" y="286" width="5.5" height="1" fill="#00cc2b"/><rect x="1199.0" y="287" width="13.0" height="1" fill="#00d027"/><rect x="1199.0" y="288" width="13.0" height="1" fill="#00d523"/><rect x="1199.0" y="289" width="13.0" height="1" fill="#00d920"/><rect x="1199.0" y="290" width="13.0" height="1" fill="#00dd1c"/><rect x="1199.0" y="291" width="23.6" height="1" fill="#00e119"/><rect x="1199.0" y="292" width="23.6" height="1" fill="#00e515"/><rect x="1199.0" y="293" width="23.6" height="1" fill="#00ea11"/><rect x="1199.0" y="294" width="20.6" height="1" fill="#00ee0e"/><rect x="1199.0" y="295" width="20.6" height="1" fill="#00f20a"/><rect x="1199.0" y="296" width="20.6" height="1" fill="#00f607"/><rect x="1199.0" y="297" width="20.6" height="1" fill="#00fa03"/></svg><div style="position:absolute;left:809px;top:298px;width:85px;height:2px;background:#fff"></div><div style="position:absolute;left:960px;top:298px;width:83px;height:2px;background:#fff"></div><div style="position:absolute;left:1050px;top:298px;width:82px;height:2px;background:#fff"></div><div style="position:absolute;left:1199px;top:298px;width:81px;height:2px;background:#fff"></div><div style="position:absolute;left:894px;top:105px;width:2px;height:195px;background:#fff"></div><div style="position:absolute;left:1132px;top:105px;width:2px;height:195px;background:#fff"></div><div style="position:absolute;left:958px;top:105px;width:2px;height:195px;background:#fff"></div><div style="position:absolute;left:1197px;top:105px;width:2px;height:195px;background:#fff"></div><div class="t lbl" style="left:904px;top:104px">6</div><div class="t lbl" style="left:904px;top:136px">5</div><div class="t lbl" style="left:904px;top:168px">4</div><div class="t lbl" style="left:904px;top:200px">3</div><div class="t lbl" style="left:904px;top:232px">2</div><div class="t lbl" style="left:904px;top:264px">1</div><div class="t lbl" style="right:330px;top:104px">60.0</div><div class="t lbl" style="right:330px;top:136px">50.0</div><div class="t lbl" style="right:330px;top:168px">40.0</div><div class="t lbl" style="right:330px;top:200px">30.0</div><div class="t lbl" style="right:330px;top:232px">20.0</div><div class="t lbl" style="right:330px;top:264px">10.0</div><div class="t lbl" style="left:1142px;top:104px">6</div><div class="t lbl" style="left:1142px;top:136px">5</div><div class="t lbl" style="left:1142px;top:168px">4</div><div class="t lbl" style="left:1142px;top:200px">3</div><div class="t lbl" style="left:1142px;top:232px">2</div><div class="t lbl" style="left:1142px;top:264px">1</div><div class="t lbl" style="right:91px;top:104px">60.0</div><div class="t lbl" style="right:91px;top:136px">50.0</div><div class="t lbl" style="right:91px;top:168px">40.0</div><div class="t lbl" style="right:91px;top:200px">30.0</div><div class="t lbl" style="right:91px;top:232px">20.0</div><div class="t lbl" style="right:91px;top:264px">10.0</div><svg style="position:absolute;left:0;top:0" width="1280" height="659" shape-rendering="crispEdges"><rect x="897" y="107" width="8" height="2" fill="#282828"/><rect x="897" y="113" width="5" height="2" fill="#282828"/><rect x="897" y="120" width="5" height="2" fill="#282828"/><rect x="897" y="126" width="5" height="2" fill="#282828"/><rect x="897" y="133" width="5" height="2" fill="#282828"/><rect x="897" y="139" width="8" height="2" fill="#282828"/><rect x="897" y="146" width="5" height="2" fill="#282828"/><rect x="897" y="152" width="5" height="2" fill="#282828"/><rect x="897" y="158" width="5" height="2" fill="#282828"/><rect x="897" y="165" width="5" height="2" fill="#282828"/><rect x="897" y="171" width="8" height="2" fill="#282828"/><rect x="897" y="178" width="5" height="2" fill="#282828"/><rect x="897" y="184" width="5" height="2" fill="#282828"/><rect x="897" y="190" width="5" height="2" fill="#282828"/><rect x="897" y="197" width="5" height="2" fill="#282828"/><rect x="897" y="203" width="8" height="2" fill="#282828"/><rect x="897" y="210" width="5" height="2" fill="#282828"/><rect x="897" y="216" width="5" height="2" fill="#282828"/><rect x="897" y="223" width="5" height="2" fill="#282828"/><rect x="897" y="229" width="5" height="2" fill="#282828"/><rect x="897" y="235" width="8" height="2" fill="#282828"/><rect x="897" y="242" width="5" height="2" fill="#282828"/><rect x="897" y="248" width="5" height="2" fill="#282828"/><rect x="897" y="255" width="5" height="2" fill="#282828"/><rect x="897" y="261" width="5" height="2" fill="#282828"/><rect x="897" y="268" width="8" height="2" fill="#282828"/><rect x="897" y="274" width="5" height="2" fill="#282828"/><rect x="897" y="280" width="5" height="2" fill="#282828"/><rect x="897" y="287" width="5" height="2" fill="#282828"/><rect x="897" y="293" width="5" height="2" fill="#282828"/><rect x="950" y="107" width="8" height="2" fill="#282828"/><rect x="954" y="113" width="4" height="2" fill="#282828"/><rect x="954" y="120" width="4" height="2" fill="#282828"/><rect x="954" y="126" width="4" height="2" fill="#282828"/><rect x="954" y="133" width="4" height="2" fill="#282828"/><rect x="950" y="139" width="8" height="2" fill="#282828"/><rect x="954" y="146" width="4" height="2" fill="#282828"/><rect x="954" y="152" width="4" height="2" fill="#282828"/><rect x="954" y="158" width="4" height="2" fill="#282828"/><rect x="954" y="165" width="4" height="2" fill="#282828"/><rect x="950" y="171" width="8" height="2" fill="#282828"/><rect x="954" y="178" width="4" height="2" fill="#282828"/><rect x="954" y="184" width="4" height="2" fill="#282828"/><rect x="954" y="190" width="4" height="2" fill="#282828"/><rect x="954" y="197" width="4" height="2" fill="#282828"/><rect x="950" y="203" width="8" height="2" fill="#282828"/><rect x="954" y="210" width="4" height="2" fill="#282828"/><rect x="954" y="216" width="4" height="2" fill="#282828"/><rect x="954" y="223" width="4" height="2" fill="#282828"/><rect x="954" y="229" width="4" height="2" fill="#282828"/><rect x="950" y="235" width="8" height="2" fill="#282828"/><rect x="954" y="242" width="4" height="2" fill="#282828"/><rect x="954" y="248" width="4" height="2" fill="#282828"/><rect x="954" y="255" width="4" height="2" fill="#282828"/><rect x="954" y="261" width="4" height="2" fill="#282828"/><rect x="950" y="268" width="8" height="2" fill="#282828"/><rect x="954" y="274" width="4" height="2" fill="#282828"/><rect x="954" y="280" width="4" height="2" fill="#282828"/><rect x="954" y="287" width="4" height="2" fill="#282828"/><rect x="954" y="293" width="4" height="2" fill="#282828"/><rect x="1135" y="107" width="8" height="2" fill="#282828"/><rect x="1135" y="113" width="5" height="2" fill="#282828"/><rect x="1135" y="120" width="5" height="2" fill="#282828"/><rect x="1135" y="126" width="5" height="2" fill="#282828"/><rect x="1135" y="133" width="5" height="2" fill="#282828"/><rect x="1135" y="139" width="8" height="2" fill="#282828"/><rect x="1135" y="146" width="5" height="2" fill="#282828"/><rect x="1135" y="152" width="5" height="2" fill="#282828"/><rect x="1135" y="158" width="5" height="2" fill="#282828"/><rect x="1135" y="165" width="5" height="2" fill="#282828"/><rect x="1135" y="171" width="8" height="2" fill="#282828"/><rect x="1135" y="178" width="5" height="2" fill="#282828"/><rect x="1135" y="184" width="5" height="2" fill="#282828"/><rect x="1135" y="190" width="5" height="2" fill="#282828"/><rect x="1135" y="197" width="5" height="2" fill="#282828"/><rect x="1135" y="203" width="8" height="2" fill="#282828"/><rect x="1135" y="210" width="5" height="2" fill="#282828"/><rect x="1135" y="216" width="5" height="2" fill="#282828"/><rect x="1135" y="223" width="5" height="2" fill="#282828"/><rect x="1135" y="229" width="5" height="2" fill="#282828"/><rect x="1135" y="235" width="8" height="2" fill="#282828"/><rect x="1135" y="242" width="5" height="2" fill="#282828"/><rect x="1135" y="248" width="5" height="2" fill="#282828"/><rect x="1135" y="255" width="5" height="2" fill="#282828"/><rect x="1135" y="261" width="5" height="2" fill="#282828"/><rect x="1135" y="268" width="8" height="2" fill="#282828"/><rect x="1135" y="274" width="5" height="2" fill="#282828"/><rect x="1135" y="280" width="5" height="2" fill="#282828"/><rect x="1135" y="287" width="5" height="2" fill="#282828"/><rect x="1135" y="293" width="5" height="2" fill="#282828"/><rect x="1189" y="107" width="8" height="2" fill="#282828"/><rect x="1193" y="113" width="4" height="2" fill="#282828"/><rect x="1193" y="120" width="4" height="2" fill="#282828"/><rect x="1193" y="126" width="4" height="2" fill="#282828"/><rect x="1193" y="133" width="4" height="2" fill="#282828"/><rect x="1189" y="139" width="8" height="2" fill="#282828"/><rect x="1193" y="146" width="4" height="2" fill="#282828"/><rect x="1193" y="152" width="4" height="2" fill="#282828"/><rect x="1193" y="158" width="4" height="2" fill="#282828"/><rect x="1193" y="165" width="4" height="2" fill="#282828"/><rect x="1189" y="171" width="8" height="2" fill="#282828"/><rect x="1193" y="178" width="4" height="2" fill="#282828"/><rect x="1193" y="184" width="4" height="2" fill="#282828"/><rect x="1193" y="190" width="4" height="2" fill="#282828"/><rect x="1193" y="197" width="4" height="2" fill="#282828"/><rect x="1189" y="203" width="8" height="2" fill="#282828"/><rect x="1193" y="210" width="4" height="2" fill="#282828"/><rect x="1193" y="216" width="4" height="2" fill="#282828"/><rect x="1193" y="223" width="4" height="2" fill="#282828"/><rect x="1193" y="229" width="4" height="2" fill="#282828"/><rect x="1189" y="235" width="8" height="2" fill="#282828"/><rect x="1193" y="242" width="4" height="2" fill="#282828"/><rect x="1193" y="248" width="4" height="2" fill="#282828"/><rect x="1193" y="255" width="4" height="2" fill="#282828"/><rect x="1193" y="261" width="4" height="2" fill="#282828"/><rect x="1189" y="268" width="8" height="2" fill="#282828"/><rect x="1193" y="274" width="4" height="2" fill="#282828"/><rect x="1193" y="280" width="4" height="2" fill="#282828"/><rect x="1193" y="287" width="4" height="2" fill="#282828"/><rect x="1193" y="293" width="4" height="2" fill="#282828"/></svg><svg style="position:absolute;left:0;top:0" width="1280" height="659" shape-rendering="crispEdges"><rect x="811" y="302" width="1" height="8" fill="#202020"/><rect x="815" y="302" width="1" height="4" fill="#202020"/><rect x="819" y="302" width="1" height="4" fill="#202020"/><rect x="823" y="302" width="1" height="4" fill="#202020"/><rect x="827" y="302" width="1" height="4" fill="#202020"/><rect x="832" y="302" width="1" height="8" fill="#202020"/><rect x="836" y="302" width="1" height="4" fill="#202020"/><rect x="840" y="302" width="1" height="4" fill="#202020"/><rect x="844" y="302" width="1" height="4" fill="#202020"/><rect x="848" y="302" width="1" height="4" fill="#202020"/><rect x="852" y="302" width="1" height="8" fill="#202020"/><rect x="856" y="302" width="1" height="4" fill="#202020"/><rect x="860" y="302" width="1" height="4" fill="#202020"/><rect x="864" y="302" width="1" height="4" fill="#202020"/><rect x="868" y="302" width="1" height="4" fill="#202020"/><rect x="872" y="302" width="1" height="8" fill="#202020"/><rect x="877" y="302" width="1" height="4" fill="#202020"/><rect x="881" y="302" width="1" height="4" fill="#202020"/><rect x="885" y="302" width="1" height="4" fill="#202020"/><rect x="889" y="302" width="1" height="4" fill="#202020"/><rect x="893" y="302" width="1" height="8" fill="#202020"/><rect x="962" y="302" width="1" height="8" fill="#202020"/><rect x="966" y="302" width="1" height="4" fill="#202020"/><rect x="970" y="302" width="1" height="4" fill="#202020"/><rect x="974" y="302" width="1" height="4" fill="#202020"/><rect x="978" y="302" width="1" height="4" fill="#202020"/><rect x="982" y="302" width="1" height="8" fill="#202020"/><rect x="986" y="302" width="1" height="4" fill="#202020"/><rect x="990" y="302" width="1" height="4" fill="#202020"/><rect x="995" y="302" width="1" height="4" fill="#202020"/><rect x="999" y="302" width="1" height="4" fill="#202020"/><rect x="1003" y="302" width="1" height="8" fill="#202020"/><rect x="1007" y="302" width="1" height="4" fill="#202020"/><rect x="1011" y="302" width="1" height="4" fill="#202020"/><rect x="1015" y="302" width="1" height="4" fill="#202020"/><rect x="1019" y="302" width="1" height="4" fill="#202020"/><rect x="1023" y="302" width="1" height="8" fill="#202020"/><rect x="1027" y="302" width="1" height="4" fill="#202020"/><rect x="1031" y="302" width="1" height="4" fill="#202020"/><rect x="1035" y="302" width="1" height="4" fill="#202020"/><rect x="1039" y="302" width="1" height="4" fill="#202020"/><rect x="1043" y="302" width="1" height="8" fill="#202020"/><rect x="1052" y="302" width="1" height="8" fill="#202020"/><rect x="1056" y="302" width="1" height="4" fill="#202020"/><rect x="1060" y="302" width="1" height="4" fill="#202020"/><rect x="1064" y="302" width="1" height="4" fill="#202020"/><rect x="1068" y="302" width="1" height="4" fill="#202020"/><rect x="1072" y="302" width="1" height="8" fill="#202020"/><rect x="1076" y="302" width="1" height="4" fill="#202020"/><rect x="1080" y="302" width="1" height="4" fill="#202020"/><rect x="1084" y="302" width="1" height="4" fill="#202020"/><rect x="1088" y="302" width="1" height="4" fill="#202020"/><rect x="1092" y="302" width="1" height="8" fill="#202020"/><rect x="1096" y="302" width="1" height="4" fill="#202020"/><rect x="1100" y="302" width="1" height="4" fill="#202020"/><rect x="1104" y="302" width="1" height="4" fill="#202020"/><rect x="1108" y="302" width="1" height="4" fill="#202020"/><rect x="1112" y="302" width="1" height="8" fill="#202020"/><rect x="1116" y="302" width="1" height="4" fill="#202020"/><rect x="1120" y="302" width="1" height="4" fill="#202020"/><rect x="1124" y="302" width="1" height="4" fill="#202020"/><rect x="1128" y="302" width="1" height="4" fill="#202020"/><rect x="1132" y="302" width="1" height="8" fill="#202020"/><rect x="1201" y="302" width="1" height="8" fill="#202020"/><rect x="1205" y="302" width="1" height="4" fill="#202020"/><rect x="1209" y="302" width="1" height="4" fill="#202020"/><rect x="1213" y="302" width="1" height="4" fill="#202020"/><rect x="1217" y="302" width="1" height="4" fill="#202020"/><rect x="1222" y="302" width="1" height="8" fill="#202020"/><rect x="1226" y="302" width="1" height="4" fill="#202020"/><rect x="1230" y="302" width="1" height="4" fill="#202020"/><rect x="1234" y="302" width="1" height="4" fill="#202020"/><rect x="1238" y="302" width="1" height="4" fill="#202020"/><rect x="1242" y="302" width="1" height="8" fill="#202020"/><rect x="1246" y="302" width="1" height="4" fill="#202020"/><rect x="1250" y="302" width="1" height="4" fill="#202020"/><rect x="1254" y="302" width="1" height="4" fill="#202020"/><rect x="1258" y="302" width="1" height="4" fill="#202020"/><rect x="1262" y="302" width="1" height="8" fill="#202020"/><rect x="1267" y="302" width="1" height="4" fill="#202020"/><rect x="1271" y="302" width="1" height="4" fill="#202020"/><rect x="1275" y="302" width="1" height="4" fill="#202020"/><rect x="1279" y="302" width="1" height="4" fill="#202020"/></svg><div class="t" style="left:808px;top:312px;font-size:10px;color:#202020">20.0u</div><div class="t" style="left:840px;top:312px;font-size:10px;color:#202020">10.0u</div><div class="t" style="left:863px;top:312px;font-size:10px;color:#202020">5.0u</div><div class="t" style="left:886px;top:312px;font-size:10px;color:#202020">0.0</div><div class="t" style="left:956px;top:312px;font-size:10px;color:#202020">0.0</div><div class="t" style="left:973px;top:312px;font-size:10px;color:#202020">5.0u</div><div class="t" style="left:1011px;top:312px;font-size:10px;color:#202020">15.0u</div><div class="t" style="left:1060px;top:312px;font-size:10px;color:#202020">15.0u</div><div class="t" style="left:1102px;top:312px;font-size:10px;color:#202020">5.0u</div><div class="t" style="left:1125px;top:312px;font-size:10px;color:#202020">0.0</div><div class="t" style="left:1195px;top:312px;font-size:10px;color:#202020">0.0</div><div class="t" style="left:1212px;top:312px;font-size:10px;color:#202020">5.0u</div><div class="t" style="left:1250px;top:312px;font-size:10px;color:#202020">15.0u</div><div style="position:absolute;left:0px;top:325px;width:1280px;height:2px;background:#fff"></div><div style="position:absolute;left:2px;top:325px;width:1278px;height:1px;background:#e8e8e8"></div><svg style="position:absolute;left:3px;top:327px" width="149" height="252"><rect width="149" height="252" fill="url(#mt)"/></svg><div style="position:absolute;left:152px;top:325px;width:2px;height:334px;background:#fff"></div><div style="position:absolute;left:154px;top:325px;width:2px;height:334px;background:#a0a0a0"></div><div style="position:absolute;left:52px;top:328px;width:98px;height:154px;background:#c0c0c0"></div><div style="position:absolute;left:52px;top:470px;width:98px;height:12px;background:#d8d8d8"></div><div style="position:absolute;left:55px;top:454px;width:94px;height:1px;background:#fff"></div><div style="position:absolute;left:55px;top:455px;width:94px;height:4px;background:#22e022"></div><svg style="position:absolute;left:0;top:0" width="1280" height="659" shape-rendering="crispEdges"><rect x="42" y="482" width="10" height="1.5" fill="#202020"/><rect x="47" y="476" width="5" height="1.5" fill="#202020"/><rect x="47" y="470" width="5" height="1.5" fill="#202020"/><rect x="47" y="464" width="5" height="1.5" fill="#202020"/><rect x="47" y="458" width="5" height="1.5" fill="#202020"/><rect x="42" y="452" width="10" height="1.5" fill="#202020"/><rect x="47" y="446" width="5" height="1.5" fill="#202020"/><rect x="47" y="440" width="5" height="1.5" fill="#202020"/><rect x="47" y="434" width="5" height="1.5" fill="#202020"/><rect x="47" y="428" width="5" height="1.5" fill="#202020"/><rect x="42" y="422" width="10" height="1.5" fill="#202020"/><rect x="47" y="416" width="5" height="1.5" fill="#202020"/><rect x="47" y="410" width="5" height="1.5" fill="#202020"/><rect x="47" y="404" width="5" height="1.5" fill="#202020"/><rect x="47" y="398" width="5" height="1.5" fill="#202020"/><rect x="42" y="392" width="10" height="1.5" fill="#202020"/><rect x="47" y="386" width="5" height="1.5" fill="#202020"/><rect x="47" y="380" width="5" height="1.5" fill="#202020"/><rect x="47" y="374" width="5" height="1.5" fill="#202020"/><rect x="47" y="368" width="5" height="1.5" fill="#202020"/><rect x="42" y="362" width="10" height="1.5" fill="#202020"/><rect x="47" y="356" width="5" height="1.5" fill="#202020"/><rect x="47" y="350" width="5" height="1.5" fill="#202020"/><rect x="47" y="344" width="5" height="1.5" fill="#202020"/><rect x="47" y="338" width="5" height="1.5" fill="#202020"/><rect x="42" y="332" width="10" height="1.5" fill="#202020"/></svg><div class="t lbl" style="right:1239px;top:477px">0.0</div><div class="t lbl" style="right:1239px;top:447px">50.0u</div><div class="t lbl" style="right:1239px;top:417px">100.0u</div><div class="t lbl" style="right:1239px;top:387px">150.0u</div><div class="t lbl" style="right:1239px;top:357px">200.0u</div><div class="t lbl" style="right:1239px;top:330px">250.0u</div><div style="position:absolute;left:7px;top:489px;width:143px;height:15px;background:#f0f0f0;border-top:1px solid #fff;border-left:1px solid #fff"></div><div class="t" style="left:69px;top:491px;font-size:10px;color:#202020">94&lt;</div><div style="position:absolute;left:8px;top:510px;width:141px;height:16px;background:#f0f0f0;border-top:1px solid #fff;border-left:1px solid #fff;border-right:2px solid #707070;border-bottom:2px solid #707070;font-size:10px;color:#a8a8a8;text-align:center;line-height:15px;-webkit-text-stroke:0.25px currentColor">Manual</div><div style="position:absolute;left:8px;top:525px;width:141px;height:17px;background:#f0f0f0;border-top:1px solid #fff;border-left:1px solid #fff;border-right:2px solid #707070;border-bottom:2px solid #707070;font-size:10px;color:#202020;text-align:center;line-height:16px;-webkit-text-stroke:0.25px currentColor">Single</div><div style="position:absolute;left:8px;top:541px;width:141px;height:17px;background:#f0f0f0;border-top:1px solid #fff;border-left:1px solid #fff;border-right:2px solid #707070;border-bottom:2px solid #707070;font-size:10px;color:#202020;text-align:center;line-height:16px;-webkit-text-stroke:0.25px currentColor">Decrease</div><div style="position:absolute;left:8px;top:557px;width:141px;height:17px;background:#f0f0f0;border-top:1px solid #fff;border-left:1px solid #fff;border-right:2px solid #707070;border-bottom:2px solid #707070;font-size:10px;color:#202020;text-align:center;line-height:16px;-webkit-text-stroke:0.25px currentColor">A -&gt; M</div><div style="position:absolute;left:2px;top:579px;width:150px;height:4px;background:#fff"></div><div style="position:absolute;left:2px;top:583px;width:150px;height:76px;background:#d8d8d8"></div><div style="position:absolute;left:5px;top:584px;width:146px;height:69px;background:#f0f0f0;border-top:1px solid #a8a8a8;border-left:1px solid #a8a8a8;border-right:2px solid #707070;border-bottom:2px solid #707070;box-shadow:inset 1px 1px 0 #fff;font-size:12px;color:#1a1a1a;display:flex;align-items:center;justify-content:center"><span style="display:inline-block;transform:scaleX(0.89)">Music is On</span></div><div style="position:absolute;left:0px;top:655px;width:1280px;height:1px;background:#a0a0a0"></div><div style="position:absolute;left:0px;top:656px;width:1280px;height:3px;background:#e8e8e8"></div><svg style="position:absolute;left:156px;top:327px" width="562" height="161"><rect width="562" height="161" fill="url(#mt)"/></svg><div style="position:absolute;left:156px;top:327px;width:562px;height:20.5px;background:linear-gradient(180deg,rgba(215,211,222,.7),rgba(180,176,190,.6))"></div><div style="position:absolute;left:205px;top:347.5px;width:511px;height:138.5px;background:#808080"></div><svg style="position:absolute;left:205px;top:347.5px" width="511" height="138.5"><rect x="24.4" y="0" width="1.4" height="138.5" fill="#d0d0d0"/><rect x="50.0" y="0" width="1.4" height="138.5" fill="#d0d0d0"/><rect x="75.6" y="0" width="1.4" height="138.5" fill="#d0d0d0"/><rect x="101.2" y="0" width="1.4" height="138.5" fill="#d0d0d0"/><rect x="126.8" y="0" width="1.4" height="138.5" fill="#d0d0d0"/><rect x="152.4" y="0" width="1.4" height="138.5" fill="#d0d0d0"/><rect x="178.0" y="0" width="1.4" height="138.5" fill="#d0d0d0"/><rect x="203.6" y="0" width="1.4" height="138.5" fill="#d0d0d0"/><rect x="229.2" y="0" width="1.4" height="138.5" fill="#d0d0d0"/><rect x="254.8" y="0" width="1.4" height="138.5" fill="#d0d0d0"/><rect x="280.4" y="0" width="1.4" height="138.5" fill="#d0d0d0"/><rect x="306.0" y="0" width="1.4" height="138.5" fill="#d0d0d0"/><rect x="331.6" y="0" width="1.4" height="138.5" fill="#d0d0d0"/><rect x="357.2" y="0" width="1.4" height="138.5" fill="#d0d0d0"/><rect x="382.8" y="0" width="1.4" height="138.5" fill="#d0d0d0"/><rect x="408.4" y="0" width="1.4" height="138.5" fill="#d0d0d0"/><rect x="434.0" y="0" width="1.4" height="138.5" fill="#d0d0d0"/><rect x="459.6" y="0" width="1.4" height="138.5" fill="#d0d0d0"/><rect x="485.2" y="0" width="1.4" height="138.5" fill="#d0d0d0"/><rect x="0" y="16.8" width="511" height="1.4" fill="#d0d0d0"/><rect x="0" y="34.1" width="511" height="1.4" fill="#d0d0d0"/><rect x="0" y="51.4" width="511" height="1.4" fill="#d0d0d0"/><rect x="0" y="68.8" width="511" height="1.4" fill="#d0d0d0"/><rect x="0" y="86.1" width="511" height="1.4" fill="#d0d0d0"/><rect x="0" y="103.4" width="511" height="1.4" fill="#d0d0d0"/><rect x="0" y="120.7" width="511" height="1.4" fill="#d0d0d0"/></svg><div style="position:absolute;left:205px;top:486px;width:513px;height:2px;background:#fff"></div><div style="position:absolute;left:716px;top:347.5px;width:2px;height:140.5px;background:#fff"></div><div class="t lbl" style="right:1086px;top:344px">28.2u</div><div style="position:absolute;left:199px;top:348px;width:5px;height:1.5px;background:#202020"></div><div class="t lbl" style="right:1086px;top:378px">23.3u</div><div style="position:absolute;left:199px;top:382px;width:5px;height:1.5px;background:#202020"></div><div class="t lbl" style="right:1086px;top:413px">18.3u</div><div style="position:absolute;left:199px;top:417px;width:5px;height:1.5px;background:#202020"></div><div class="t lbl" style="right:1086px;top:447px">13.3u</div><div style="position:absolute;left:199px;top:451px;width:5px;height:1.5px;background:#202020"></div><div class="t lbl" style="right:1086px;top:478px">8.3u</div><div style="position:absolute;left:199px;top:485px;width:5px;height:1.5px;background:#202020"></div><div class="t" style="left:206px;top:333.5px;font-size:10px;color:#202020">60S/DIV</div><div class="t" style="left:252px;top:333.5px;font-size:10px;color:#202020">Time Spa...</div><div style="position:absolute;left:307px;top:330.5px;width:18px;height:14px;background:#ff0000;border:1px solid #202020"></div><div style="position:absolute;left:408px;top:330.5px;width:18px;height:14px;background:#8000ff;border:1px solid #202020"></div><div style="position:absolute;left:509px;top:330.5px;width:18px;height:14px;background:#0080ff;border:1px solid #202020"></div><div style="position:absolute;left:609px;top:330.5px;width:18px;height:14px;background:#00ff80;border:1px solid #202020"></div><div class="t" style="left:329px;top:333.5px;font-size:10px;color:#202020">SLOW&nbsp; CH1</div><div class="t" style="left:429px;top:333.5px;font-size:10px;color:#202020">CH2</div><div class="t" style="left:530px;top:333.5px;font-size:10px;color:#202020">CH3</div><div class="t" style="left:630px;top:333.5px;font-size:10px;color:#202020">CH4</div><svg style="position:absolute;left:205px;top:347.5px" width="511" height="138.5"><g transform="translate(-205,-347.5)"><polyline fill="none" stroke="#2080ff" stroke-width="1.6" points="585.0,420.8 586.2,436.3 587.4,447.2 588.6,430.9 589.8,448.4 591.0,453.6 592.2,465.6 593.4,422.9 594.6,442.1 595.8,472.5 597.0,450.0 598.2,419.1 599.4,437.8 600.6,435.3 601.8,398.7 603.0,469.0 604.2,449.0 605.4,423.0 606.6,417.4 607.8,432.5 609.0,427.9 610.2,423.0 611.4,452.1 612.6,372.0 613.8,411.9 615.0,380.0 616.2,457.6 617.4,465.9 618.6,451.6 619.8,445.3 621.0,431.4 622.2,406.1 623.4,423.8 624.6,449.8 625.8,448.0 627.0,423.3 628.2,430.7 629.4,443.3 630.6,412.8 631.8,423.6 633.0,424.4 634.2,441.6 635.4,399.0 636.6,396.3 637.8,424.9 639.0,454.5 640.2,375.0 641.4,409.1 642.6,437.7 643.8,449.2 645.0,421.5 646.2,401.8 647.4,397.4 648.6,402.3 649.8,430.4 651.0,432.9 652.2,420.1 653.4,400.2 654.6,436.5 655.8,450.4 657.0,432.8 658.2,434.6 659.4,360.0 660.6,360.0 661.8,441.6 663.0,433.0 664.2,440.0 665.4,403.7 666.6,352.0 667.8,401.2 669.0,421.3 670.2,422.3 671.4,426.7 672.6,451.4 673.8,450.6 675.0,442.3 676.2,434.6 677.4,396.5 678.6,398.4 679.8,413.0 681.0,430.0 682.2,431.2 683.4,452.3 684.6,438.8 685.8,418.9 687.0,423.8 688.2,438.6 689.4,448.6 690.6,435.1 691.8,436.8 693.0,421.7 694.2,401.6 695.4,400.6 696.6,418.7 697.8,412.4 699.0,441.3 700.2,421.7 701.4,405.7 702.6,418.1 703.8,436.0 705.0,443.0 706.2,416.7 707.4,438.3 708.6,443.3 709.8,416.4 711.0,400.2 712.2,423.3 713.4,458.8 714.6,458.9 715.8,436.9 717.0,429.0"/><polyline fill="none" stroke="#ff2020" stroke-width="1.6" points="585.0,443.2 586.2,458.9 587.4,456.8 588.6,451.7 589.8,457.0 591.0,447.2 592.2,443.0 593.4,446.9 594.6,473.4 595.8,463.0 597.0,449.2 598.2,449.8 599.4,443.4 600.6,447.0 601.8,444.5 603.0,448.9 604.2,448.3 605.4,431.8 606.6,436.2 607.8,450.2 609.0,437.4 610.2,426.7 611.4,427.3 612.6,443.9 613.8,416.9 615.0,419.0 616.2,422.5 617.4,429.2 618.6,448.3 619.8,453.3 621.0,425.5 622.2,410.5 623.4,412.1 624.6,434.9 625.8,454.0 627.0,414.0 628.2,414.4 629.4,422.6 630.6,439.3 631.8,449.7 633.0,426.1 634.2,409.9 635.4,434.8 636.6,452.1 637.8,453.5 639.0,452.7 640.2,424.5 641.4,420.3 642.6,434.6 643.8,456.9 645.0,428.2 646.2,409.8 647.4,400.0 648.6,400.0 649.8,417.0 651.0,424.5 652.2,436.9 653.4,416.7 654.6,422.4 655.8,426.5 657.0,427.9 658.2,424.2 659.4,426.3 660.6,421.0 661.8,423.3 663.0,448.2 664.2,427.3 665.4,428.4 666.6,457.6 667.8,456.3 669.0,352.0 670.2,458.5 671.4,455.2 672.6,443.0 673.8,433.1 675.0,449.5 676.2,433.6 677.4,444.0 678.6,447.9 679.8,431.8 681.0,425.3 682.2,449.4 683.4,438.6 684.6,439.3 685.8,421.3 687.0,420.7 688.2,442.4 689.4,460.0 690.6,435.9 691.8,431.5 693.0,425.7 694.2,438.9 695.4,433.8 696.6,444.1 697.8,424.8 699.0,448.3 700.2,441.5 701.4,439.5 702.6,450.6 703.8,449.2 705.0,455.1 706.2,437.6 707.4,447.9 708.6,449.0 709.8,433.0 711.0,445.6 712.2,465.7 713.4,450.1 714.6,447.0 715.8,435.2 717.0,459.1"/><polyline fill="none" stroke="#20f090" stroke-width="1.6" points="585.0,446.4 586.2,450.4 587.4,453.6 588.6,458.2 589.8,446.3 591.0,441.3 592.2,462.6 593.4,460.8 594.6,464.2 595.8,451.5 597.0,425.5 598.2,423.4 599.4,447.3 600.6,386.0 601.8,447.4 603.0,443.1 604.2,437.1 605.4,431.9 606.6,439.3 607.8,439.8 609.0,450.3 610.2,445.4 611.4,440.4 612.6,441.3 613.8,448.8 615.0,441.7 616.2,452.0 617.4,433.7 618.6,411.3 619.8,420.8 621.0,445.7 622.2,441.4 623.4,406.7 624.6,391.0 625.8,442.2 627.0,436.8 628.2,400.0 629.4,410.8 630.6,411.3 631.8,455.5 633.0,449.6 634.2,435.2 635.4,422.6 636.6,425.2 637.8,456.3 639.0,459.6 640.2,422.8 641.4,418.6 642.6,438.7 643.8,447.7 645.0,445.9 646.2,415.1 647.4,440.7 648.6,450.2 649.8,430.0 651.0,433.8 652.2,429.1 653.4,440.7 654.6,453.8 655.8,428.6 657.0,437.9 658.2,450.0 659.4,429.4 660.6,426.1 661.8,433.1 663.0,453.6 664.2,429.0 665.4,413.3 666.6,433.1 667.8,429.0 669.0,423.4 670.2,420.1 671.4,440.6 672.6,454.7 673.8,437.8 675.0,415.3 676.2,416.8 677.4,455.1 678.6,457.7 679.8,442.9 681.0,428.8 682.2,418.1 683.4,450.8 684.6,435.4 685.8,435.9 687.0,419.0 688.2,436.9 689.4,415.5 690.6,409.7 691.8,446.9 693.0,455.9 694.2,431.5 695.4,384.0 696.6,425.7 697.8,422.1 699.0,438.2 700.2,422.4 701.4,436.2 702.6,429.5 703.8,414.2 705.0,414.6 706.2,443.2 707.4,423.0 708.6,435.3 709.8,445.7 711.0,437.9 712.2,438.3 713.4,448.3 714.6,442.8 715.8,444.5 717.0,450.4"/><polyline fill="none" stroke="#8020ff" stroke-width="1.6" points="585.0,442.0 586.2,437.3 587.4,465.8 588.6,471.2 589.8,483.0 591.0,485.0 592.2,452.6 593.4,452.6 594.6,459.7 595.8,435.3 597.0,437.3 598.2,448.2 599.4,483.6 600.6,466.2 601.8,468.9 603.0,462.7 604.2,452.4 605.4,461.9 606.6,452.4 607.8,441.8 609.0,471.7 610.2,430.0 611.4,453.5 612.6,458.7 613.8,449.1 615.0,452.1 616.2,455.7 617.4,457.2 618.6,446.7 619.8,450.2 621.0,446.3 622.2,441.5 623.4,440.2 624.6,434.3 625.8,454.6 627.0,463.4 628.2,448.7 629.4,468.6 630.6,397.6 631.8,442.1 633.0,451.9 634.2,458.7 635.4,425.9 636.6,432.0 637.8,463.7 639.0,471.0 640.2,445.8 641.4,467.3 642.6,447.5 643.8,440.6 645.0,410.0 646.2,417.1 647.4,443.8 648.6,446.6 649.8,431.1 651.0,420.9 652.2,442.9 653.4,456.4 654.6,398.0 655.8,444.9 657.0,458.8 658.2,439.1 659.4,431.0 660.6,451.3 661.8,448.5 663.0,411.0 664.2,435.7 665.4,450.5 666.6,434.0 667.8,424.0 669.0,414.2 670.2,446.4 671.4,450.6 672.6,452.7 673.8,449.5 675.0,426.4 676.2,414.7 677.4,428.5 678.6,405.8 679.8,470.0 681.0,444.4 682.2,433.5 683.4,425.7 684.6,434.5 685.8,453.9 687.0,460.7 688.2,464.0 689.4,453.8 690.6,436.9 691.8,440.7 693.0,452.8 694.2,448.4 695.4,420.3 696.6,414.1 697.8,453.2 699.0,468.8 700.2,433.6 701.4,459.1 702.6,427.8 703.8,450.8 705.0,385.0 706.2,415.5 707.4,457.5 708.6,436.2 709.8,447.5 711.0,460.2 712.2,413.6 713.4,419.4 714.6,436.5 715.8,442.1 717.0,461.6"/></g></svg><svg style="position:absolute;left:722px;top:327px" width="558" height="161"><rect width="558" height="161" fill="url(#mt)"/></svg><div style="position:absolute;left:722px;top:327px;width:558px;height:20.5px;background:linear-gradient(180deg,rgba(215,211,222,.7),rgba(180,176,190,.6))"></div><div style="position:absolute;left:771px;top:347.5px;width:509px;height:138.5px;background:#808080"></div><svg style="position:absolute;left:771px;top:347.5px" width="509" height="138.5"><rect x="24.4" y="0" width="1.4" height="138.5" fill="#d0d0d0"/><rect x="50.0" y="0" width="1.4" height="138.5" fill="#d0d0d0"/><rect x="75.6" y="0" width="1.4" height="138.5" fill="#d0d0d0"/><rect x="101.2" y="0" width="1.4" height="138.5" fill="#d0d0d0"/><rect x="126.8" y="0" width="1.4" height="138.5" fill="#d0d0d0"/><rect x="152.4" y="0" width="1.4" height="138.5" fill="#d0d0d0"/><rect x="178.0" y="0" width="1.4" height="138.5" fill="#d0d0d0"/><rect x="203.6" y="0" width="1.4" height="138.5" fill="#d0d0d0"/><rect x="229.2" y="0" width="1.4" height="138.5" fill="#d0d0d0"/><rect x="254.8" y="0" width="1.4" height="138.5" fill="#d0d0d0"/><rect x="280.4" y="0" width="1.4" height="138.5" fill="#d0d0d0"/><rect x="306.0" y="0" width="1.4" height="138.5" fill="#d0d0d0"/><rect x="331.6" y="0" width="1.4" height="138.5" fill="#d0d0d0"/><rect x="357.2" y="0" width="1.4" height="138.5" fill="#d0d0d0"/><rect x="382.8" y="0" width="1.4" height="138.5" fill="#d0d0d0"/><rect x="408.4" y="0" width="1.4" height="138.5" fill="#d0d0d0"/><rect x="434.0" y="0" width="1.4" height="138.5" fill="#d0d0d0"/><rect x="459.6" y="0" width="1.4" height="138.5" fill="#d0d0d0"/><rect x="485.2" y="0" width="1.4" height="138.5" fill="#d0d0d0"/><rect x="0" y="16.8" width="509" height="1.4" fill="#d0d0d0"/><rect x="0" y="34.1" width="509" height="1.4" fill="#d0d0d0"/><rect x="0" y="51.4" width="509" height="1.4" fill="#d0d0d0"/><rect x="0" y="68.8" width="509" height="1.4" fill="#d0d0d0"/><rect x="0" y="86.1" width="509" height="1.4" fill="#d0d0d0"/><rect x="0" y="103.4" width="509" height="1.4" fill="#d0d0d0"/><rect x="0" y="120.7" width="509" height="1.4" fill="#d0d0d0"/></svg><div style="position:absolute;left:771px;top:486px;width:509px;height:2px;background:#fff"></div><div class="t lbl" style="right:520px;top:344px">12.0u</div><div style="position:absolute;left:765px;top:348px;width:5px;height:1.5px;background:#202020"></div><div class="t lbl" style="right:520px;top:378px">10.2u</div><div style="position:absolute;left:765px;top:382px;width:5px;height:1.5px;background:#202020"></div><div class="t lbl" style="right:520px;top:413px">8.5u</div><div style="position:absolute;left:765px;top:417px;width:5px;height:1.5px;background:#202020"></div><div class="t lbl" style="right:520px;top:447px">6.7u</div><div style="position:absolute;left:765px;top:451px;width:5px;height:1.5px;background:#202020"></div><div class="t lbl" style="right:520px;top:478px">5.0u</div><div style="position:absolute;left:765px;top:485px;width:5px;height:1.5px;background:#202020"></div><div class="t" style="left:772px;top:333.5px;font-size:10px;color:#202020">60S/DIV</div><div class="t" style="left:818px;top:333.5px;font-size:10px;color:#202020">Time Spa...</div><div style="position:absolute;left:873px;top:330.5px;width:18px;height:14px;background:#ff0000;border:1px solid #202020"></div><div style="position:absolute;left:974px;top:330.5px;width:18px;height:14px;background:#8000ff;border:1px solid #202020"></div><div style="position:absolute;left:1075px;top:330.5px;width:18px;height:14px;background:#0080ff;border:1px solid #202020"></div><div style="position:absolute;left:1175px;top:330.5px;width:18px;height:14px;background:#00ff80;border:1px solid #202020"></div><div class="t" style="left:895px;top:333.5px;font-size:10px;color:#202020">FAST&nbsp; CH1</div><div class="t" style="left:995px;top:333.5px;font-size:10px;color:#202020">CH2</div><div class="t" style="left:1096px;top:333.5px;font-size:10px;color:#202020">CH3</div><div class="t" style="left:1196px;top:333.5px;font-size:10px;color:#202020">CH4</div><svg style="position:absolute;left:771px;top:347.5px" width="509" height="138.5"><g transform="translate(-771,-347.5)"><polyline fill="none" stroke="#8020ff" stroke-width="1.6" points="1153.0,410.6 1154.2,397.8 1155.4,400.3 1156.6,402.8 1157.8,398.1 1159.0,362.6 1160.2,398.4 1161.4,409.3 1162.6,380.0 1163.8,421.0 1165.0,411.3 1166.2,395.4 1167.4,421.7 1168.6,416.8 1169.8,416.6 1171.0,387.8 1172.2,381.5 1173.4,418.2 1174.6,413.8 1175.8,410.7 1177.0,391.5 1178.2,380.3 1179.4,401.4 1180.6,404.6 1181.8,392.3 1183.0,391.5 1184.2,425.0 1185.4,408.3 1186.6,420.3 1187.8,428.1 1189.0,419.6 1190.2,384.0 1191.4,418.8 1192.6,391.2 1193.8,400.1 1195.0,422.9 1196.2,434.4 1197.4,420.6 1198.6,406.3 1199.8,418.1 1201.0,408.4 1202.2,413.2 1203.4,396.6 1204.6,415.2 1205.8,399.2 1207.0,408.2 1208.2,421.1 1209.4,420.5 1210.6,429.3 1211.8,429.0 1213.0,408.8 1214.2,368.0 1215.4,418.3 1216.6,431.4 1217.8,414.0 1219.0,427.8 1220.2,404.1 1221.4,407.4 1222.6,405.7 1223.8,435.0 1225.0,426.5 1226.2,410.6 1227.4,431.3 1228.6,420.7 1229.8,394.4 1231.0,418.2 1232.2,434.9 1233.4,413.9 1234.6,412.0 1235.8,421.9 1237.0,421.6 1238.2,413.0 1239.4,422.9 1240.6,408.9 1241.8,417.9 1243.0,411.6 1244.2,412.3 1245.4,408.2 1246.6,435.0 1247.8,430.4 1249.0,407.4 1250.2,427.5 1251.4,444.6 1252.6,433.4 1253.8,411.1 1255.0,412.6 1256.2,436.4 1257.4,426.8 1258.6,433.0 1259.8,420.4 1261.0,414.6 1262.2,426.4 1263.4,435.2 1264.6,447.1 1265.8,425.7 1267.0,426.3 1268.2,434.6 1269.4,432.3 1270.6,430.9 1271.8,416.0 1273.0,430.0 1274.2,410.0 1275.4,423.9 1276.6,433.6 1277.8,414.9 1279.0,411.5 1280.2,419.4 1281.4,431.9"/><polyline fill="none" stroke="#ff2020" stroke-width="1.6" points="1153.0,456.1 1154.2,453.3 1155.4,457.4 1156.6,447.5 1157.8,444.6 1159.0,431.9 1160.2,445.3 1161.4,429.0 1162.6,447.2 1163.8,456.5 1165.0,440.5 1166.2,455.2 1167.4,433.5 1168.6,439.5 1169.8,428.2 1171.0,428.5 1172.2,461.0 1173.4,436.1 1174.6,429.9 1175.8,425.8 1177.0,442.9 1178.2,465.5 1179.4,440.9 1180.6,428.7 1181.8,444.0 1183.0,463.3 1184.2,446.5 1185.4,428.9 1186.6,416.6 1187.8,436.0 1189.0,450.5 1190.2,450.5 1191.4,440.2 1192.6,428.5 1193.8,433.0 1195.0,452.8 1196.2,447.4 1197.4,441.2 1198.6,456.8 1199.8,448.8 1201.0,455.0 1202.2,425.6 1203.4,458.6 1204.6,460.0 1205.8,455.3 1207.0,440.3 1208.2,435.5 1209.4,467.3 1210.6,447.6 1211.8,446.8 1213.0,477.1 1214.2,467.7 1215.4,445.8 1216.6,466.8 1217.8,465.6 1219.0,474.3 1220.2,466.3 1221.4,455.8 1222.6,435.3 1223.8,434.7 1225.0,457.5 1226.2,461.3 1227.4,463.5 1228.6,476.2 1229.8,441.3 1231.0,426.0 1232.2,441.3 1233.4,448.3 1234.6,446.1 1235.8,452.1 1237.0,424.6 1238.2,443.4 1239.4,452.0 1240.6,459.7 1241.8,464.6 1243.0,431.2 1244.2,450.9 1245.4,432.5 1246.6,434.4 1247.8,458.0 1249.0,441.8 1250.2,453.7 1251.4,454.6 1252.6,445.4 1253.8,446.3 1255.0,446.4 1256.2,460.7 1257.4,466.4 1258.6,453.9 1259.8,455.7 1261.0,455.8 1262.2,464.7 1263.4,469.0 1264.6,457.9 1265.8,457.9 1267.0,445.6 1268.2,465.9 1269.4,471.6 1270.6,444.9 1271.8,440.3 1273.0,441.9 1274.2,453.3 1275.4,438.6 1276.6,449.3 1277.8,471.0 1279.0,453.7 1280.2,447.7 1281.4,428.8"/><polyline fill="none" stroke="#20f090" stroke-width="1.6" points="1153.0,459.4 1154.2,458.9 1155.4,426.7 1156.6,415.3 1157.8,437.6 1159.0,433.0 1160.2,433.0 1161.4,421.3 1162.6,444.3 1163.8,436.0 1165.0,432.7 1166.2,432.0 1167.4,431.8 1168.6,429.0 1169.8,436.4 1171.0,422.2 1172.2,425.6 1173.4,441.2 1174.6,462.4 1175.8,448.7 1177.0,445.6 1178.2,447.3 1179.4,465.1 1180.6,464.8 1181.8,414.3 1183.0,418.0 1184.2,445.5 1185.4,472.3 1186.6,457.3 1187.8,449.2 1189.0,446.3 1190.2,438.5 1191.4,454.6 1192.6,439.5 1193.8,435.1 1195.0,429.7 1196.2,423.5 1197.4,437.4 1198.6,455.8 1199.8,466.5 1201.0,451.7 1202.2,415.0 1203.4,437.7 1204.6,461.2 1205.8,425.5 1207.0,424.3 1208.2,427.2 1209.4,454.5 1210.6,466.3 1211.8,440.6 1213.0,431.2 1214.2,452.1 1215.4,348.5 1216.6,429.9 1217.8,452.5 1219.0,461.8 1220.2,442.2 1221.4,420.6 1222.6,440.6 1223.8,452.7 1225.0,448.5 1226.2,445.6 1227.4,431.0 1228.6,466.5 1229.8,477.1 1231.0,455.6 1232.2,456.1 1233.4,446.5 1234.6,453.6 1235.8,450.0 1237.0,452.0 1238.2,444.5 1239.4,453.7 1240.6,438.8 1241.8,435.3 1243.0,453.8 1244.2,448.8 1245.4,442.2 1246.6,437.3 1247.8,426.0 1249.0,432.7 1250.2,442.3 1251.4,455.3 1252.6,431.9 1253.8,415.9 1255.0,400.8 1256.2,438.7 1257.4,422.9 1258.6,430.6 1259.8,442.3 1261.0,437.6 1262.2,450.2 1263.4,441.6 1264.6,438.8 1265.8,446.9 1267.0,446.1 1268.2,422.4 1269.4,438.6 1270.6,425.7 1271.8,424.6 1273.0,464.7 1274.2,468.1 1275.4,449.4 1276.6,420.9 1277.8,413.7 1279.0,436.7 1280.2,454.8 1281.4,432.3"/><polyline fill="none" stroke="#2080ff" stroke-width="1.6" points="1153.0,467.2 1154.2,470.2 1155.4,456.0 1156.6,462.8 1157.8,444.7 1159.0,441.4 1160.2,463.6 1161.4,464.6 1162.6,460.0 1163.8,448.6 1165.0,458.5 1166.2,471.3 1167.4,462.9 1168.6,426.7 1169.8,439.5 1171.0,430.2 1172.2,441.6 1173.4,445.7 1174.6,427.0 1175.8,447.2 1177.0,472.4 1178.2,458.6 1179.4,454.0 1180.6,449.1 1181.8,467.1 1183.0,458.9 1184.2,464.2 1185.4,468.3 1186.6,446.1 1187.8,465.7 1189.0,460.7 1190.2,455.4 1191.4,453.9 1192.6,445.7 1193.8,445.0 1195.0,474.2 1196.2,471.5 1197.4,453.9 1198.6,458.1 1199.8,449.9 1201.0,455.6 1202.2,462.0 1203.4,450.8 1204.6,450.5 1205.8,445.5 1207.0,476.6 1208.2,478.3 1209.4,454.4 1210.6,475.2 1211.8,466.5 1213.0,466.3 1214.2,463.5 1215.4,457.8 1216.6,470.2 1217.8,472.5 1219.0,461.4 1220.2,441.0 1221.4,461.1 1222.6,480.1 1223.8,462.9 1225.0,462.8 1226.2,438.9 1227.4,438.0 1228.6,429.5 1229.8,455.4 1231.0,466.6 1232.2,437.2 1233.4,438.1 1234.6,449.8 1235.8,461.2 1237.0,459.6 1238.2,459.8 1239.4,459.6 1240.6,470.5 1241.8,472.6 1243.0,454.9 1244.2,445.0 1245.4,459.5 1246.6,468.3 1247.8,472.4 1249.0,485.0 1250.2,485.0 1251.4,461.4 1252.6,453.1 1253.8,439.6 1255.0,482.1 1256.2,481.4 1257.4,456.7 1258.6,453.2 1259.8,485.0 1261.0,485.0 1262.2,480.5 1263.4,465.0 1264.6,479.8 1265.8,481.9 1267.0,480.5 1268.2,464.5 1269.4,463.5 1270.6,461.7 1271.8,482.9 1273.0,485.0 1274.2,480.5 1275.4,470.6 1276.6,485.0 1277.8,485.0 1279.0,484.4 1280.2,474.2 1281.4,471.1"/></g></svg><svg style="position:absolute;left:156px;top:492px" width="562" height="163"><rect width="562" height="163" fill="url(#mt)"/></svg><div style="position:absolute;left:156px;top:492px;width:562px;height:20.700000000000045px;background:linear-gradient(180deg,rgba(215,211,222,.7),rgba(180,176,190,.6))"></div><div style="position:absolute;left:205px;top:512.7px;width:511px;height:140.0px;background:#808080"></div><svg style="position:absolute;left:205px;top:512.7px" width="511" height="140.0"><rect x="24.4" y="0" width="1.4" height="140.0" fill="#d0d0d0"/><rect x="50.0" y="0" width="1.4" height="140.0" fill="#d0d0d0"/><rect x="75.6" y="0" width="1.4" height="140.0" fill="#d0d0d0"/><rect x="101.2" y="0" width="1.4" height="140.0" fill="#d0d0d0"/><rect x="126.8" y="0" width="1.4" height="140.0" fill="#d0d0d0"/><rect x="152.4" y="0" width="1.4" height="140.0" fill="#d0d0d0"/><rect x="178.0" y="0" width="1.4" height="140.0" fill="#d0d0d0"/><rect x="203.6" y="0" width="1.4" height="140.0" fill="#d0d0d0"/><rect x="229.2" y="0" width="1.4" height="140.0" fill="#d0d0d0"/><rect x="254.8" y="0" width="1.4" height="140.0" fill="#d0d0d0"/><rect x="280.4" y="0" width="1.4" height="140.0" fill="#d0d0d0"/><rect x="306.0" y="0" width="1.4" height="140.0" fill="#d0d0d0"/><rect x="331.6" y="0" width="1.4" height="140.0" fill="#d0d0d0"/><rect x="357.2" y="0" width="1.4" height="140.0" fill="#d0d0d0"/><rect x="382.8" y="0" width="1.4" height="140.0" fill="#d0d0d0"/><rect x="408.4" y="0" width="1.4" height="140.0" fill="#d0d0d0"/><rect x="434.0" y="0" width="1.4" height="140.0" fill="#d0d0d0"/><rect x="459.6" y="0" width="1.4" height="140.0" fill="#d0d0d0"/><rect x="485.2" y="0" width="1.4" height="140.0" fill="#d0d0d0"/><rect x="0" y="17.0" width="511" height="1.4" fill="#d0d0d0"/><rect x="0" y="34.5" width="511" height="1.4" fill="#d0d0d0"/><rect x="0" y="52.0" width="511" height="1.4" fill="#d0d0d0"/><rect x="0" y="69.5" width="511" height="1.4" fill="#d0d0d0"/><rect x="0" y="87.0" width="511" height="1.4" fill="#d0d0d0"/><rect x="0" y="104.5" width="511" height="1.4" fill="#d0d0d0"/><rect x="0" y="122.0" width="511" height="1.4" fill="#d0d0d0"/></svg><div style="position:absolute;left:205px;top:652.7px;width:513px;height:2px;background:#fff"></div><div style="position:absolute;left:716px;top:512.7px;width:2px;height:142.0px;background:#fff"></div><div class="t lbl" style="right:1086px;top:509px">27.2u</div><div style="position:absolute;left:199px;top:513px;width:5px;height:1.5px;background:#202020"></div><div class="t lbl" style="right:1086px;top:544px">22.1u</div><div style="position:absolute;left:199px;top:548px;width:5px;height:1.5px;background:#202020"></div><div class="t lbl" style="right:1086px;top:579px">17.1u</div><div style="position:absolute;left:199px;top:583px;width:5px;height:1.5px;background:#202020"></div><div class="t lbl" style="right:1086px;top:614px">12.1u</div><div style="position:absolute;left:199px;top:618px;width:5px;height:1.5px;background:#202020"></div><div class="t lbl" style="right:1086px;top:645px">7.0u</div><div style="position:absolute;left:199px;top:652px;width:5px;height:1.5px;background:#202020"></div><div class="t" style="left:206px;top:498.70000000000005px;font-size:10px;color:#202020">60S/DIV</div><div class="t" style="left:252px;top:498.70000000000005px;font-size:10px;color:#202020">Time Spa...</div><div style="position:absolute;left:307px;top:495.70000000000005px;width:18px;height:14px;background:#ff0000;border:1px solid #202020"></div><div style="position:absolute;left:408px;top:495.70000000000005px;width:18px;height:14px;background:#8000ff;border:1px solid #202020"></div><div style="position:absolute;left:509px;top:495.70000000000005px;width:18px;height:14px;background:#0080ff;border:1px solid #202020"></div><div style="position:absolute;left:609px;top:495.70000000000005px;width:18px;height:14px;background:#00ff00;border:1px solid #202020"></div><div class="t" style="left:329px;top:498.70000000000005px;font-size:10px;color:#202020">MID CH1</div><div class="t" style="left:429px;top:498.70000000000005px;font-size:10px;color:#202020">CH2</div><div class="t" style="left:530px;top:498.70000000000005px;font-size:10px;color:#202020">CH3</div><div class="t" style="left:630px;top:498.70000000000005px;font-size:10px;color:#202020">CH4</div><svg style="position:absolute;left:205px;top:512.7px" width="511" height="140.0"><g transform="translate(-205,-512.7)"><polyline fill="none" stroke="#ff2020" stroke-width="1.6" points="585.0,620.8 586.2,621.5 587.4,617.0 588.6,603.9 589.8,622.6 591.0,651.7 592.2,651.7 593.4,631.6 594.6,602.3 595.8,603.5 597.0,637.0 598.2,644.7 599.4,580.0 600.6,580.0 601.8,606.8 603.0,604.0 604.2,581.3 605.4,639.1 606.6,625.0 607.8,597.8 609.0,606.9 610.2,615.2 611.4,592.4 612.6,587.6 613.8,592.4 615.0,606.7 616.2,605.1 617.4,598.6 618.6,601.6 619.8,608.7 621.0,606.6 622.2,631.3 623.4,620.2 624.6,620.2 625.8,634.0 627.0,619.8 628.2,612.7 629.4,591.7 630.6,603.2 631.8,607.3 633.0,624.2 634.2,607.3 635.4,595.7 636.6,602.7 637.8,599.4 639.0,591.1 640.2,590.5 641.4,597.4 642.6,597.5 643.8,583.9 645.0,589.5 646.2,592.4 647.4,590.8 648.6,607.6 649.8,602.8 651.0,588.3 652.2,595.0 653.4,574.8 654.6,602.0 655.8,627.4 657.0,597.9 658.2,550.0 659.4,598.2 660.6,603.6 661.8,595.7 663.0,593.4 664.2,570.7 665.4,585.8 666.6,527.0 667.8,604.8 669.0,596.1 670.2,597.9 671.4,591.5 672.6,574.7 673.8,601.1 675.0,620.2 676.2,604.7 677.4,602.9 678.6,590.2 679.8,572.2 681.0,591.7 682.2,618.1 683.4,615.8 684.6,588.4 685.8,586.7 687.0,602.2 688.2,627.5 689.4,597.9 690.6,602.2 691.8,585.3 693.0,583.1 694.2,571.0 695.4,605.1 696.6,597.0 697.8,600.8 699.0,573.6 700.2,572.8 701.4,596.0 702.6,612.8 703.8,597.7 705.0,595.5 706.2,609.0 707.4,551.0 708.6,619.3 709.8,613.4 711.0,606.4 712.2,642.1 713.4,651.1 714.6,642.5 715.8,619.6 717.0,593.3"/><polyline fill="none" stroke="#8020ff" stroke-width="1.6" points="585.0,642.7 586.2,634.5 587.4,636.9 588.6,633.2 589.8,618.5 591.0,585.4 592.2,631.4 593.4,611.6 594.6,632.2 595.8,651.7 597.0,651.7 598.2,651.7 599.4,626.2 600.6,622.2 601.8,632.6 603.0,630.1 604.2,645.2 605.4,651.7 606.6,641.5 607.8,616.7 609.0,633.1 610.2,644.1 611.4,599.7 612.6,593.4 613.8,618.2 615.0,648.9 616.2,642.4 617.4,617.5 618.6,611.2 619.8,597.2 621.0,628.1 622.2,644.1 623.4,622.1 624.6,614.7 625.8,609.8 627.0,611.4 628.2,614.4 629.4,570.0 630.6,570.0 631.8,595.0 633.0,587.3 634.2,613.5 635.4,615.8 636.6,600.8 637.8,611.8 639.0,602.6 640.2,597.3 641.4,605.4 642.6,625.1 643.8,609.5 645.0,588.3 646.2,589.9 647.4,595.6 648.6,608.1 649.8,597.8 651.0,610.0 652.2,623.5 653.4,597.8 654.6,595.8 655.8,586.1 657.0,603.0 658.2,597.9 659.4,593.7 660.6,574.2 661.8,573.9 663.0,588.9 664.2,616.2 665.4,562.7 666.6,600.7 667.8,600.8 669.0,577.8 670.2,593.1 671.4,609.3 672.6,632.9 673.8,598.7 675.0,611.6 676.2,571.0 677.4,619.8 678.6,605.6 679.8,619.4 681.0,633.3 682.2,591.9 683.4,609.1 684.6,599.3 685.8,596.6 687.0,623.4 688.2,609.4 689.4,612.9 690.6,606.0 691.8,599.4 693.0,606.5 694.2,611.7 695.4,612.3 696.6,616.8 697.8,597.8 699.0,580.6 700.2,603.1 701.4,615.1 702.6,595.7 703.8,588.1 705.0,611.6 706.2,609.4 707.4,608.8 708.6,647.9 709.8,602.3 711.0,615.5 712.2,622.6 713.4,621.4 714.6,631.3 715.8,626.5 717.0,629.5"/><polyline fill="none" stroke="#2080ff" stroke-width="1.6" points="585.0,631.7 586.2,638.7 587.4,638.5 588.6,589.5 589.8,599.6 591.0,628.1 592.2,642.5 593.4,623.2 594.6,613.9 595.8,606.9 597.0,622.1 598.2,632.0 599.4,599.3 600.6,592.3 601.8,613.4 603.0,616.4 604.2,618.5 605.4,616.4 606.6,621.2 607.8,555.1 609.0,587.8 610.2,624.9 611.4,542.0 612.6,542.0 613.8,603.8 615.0,619.6 616.2,549.7 617.4,564.4 618.6,567.7 619.8,596.5 621.0,593.6 622.2,616.1 623.4,580.8 624.6,545.7 625.8,594.3 627.0,603.4 628.2,595.1 629.4,625.2 630.6,592.8 631.8,607.1 633.0,549.1 634.2,562.7 635.4,577.5 636.6,618.8 637.8,622.3 639.0,591.5 640.2,590.6 641.4,593.4 642.6,571.5 643.8,609.0 645.0,584.9 646.2,582.9 647.4,605.4 648.6,607.5 649.8,595.2 651.0,569.4 652.2,594.8 653.4,514.0 654.6,514.0 655.8,607.2 657.0,547.9 658.2,598.6 659.4,624.8 660.6,586.0 661.8,514.0 663.0,580.8 664.2,574.7 665.4,603.9 666.6,606.9 667.8,572.7 669.0,595.9 670.2,617.9 671.4,595.4 672.6,567.2 673.8,600.3 675.0,585.2 676.2,538.2 677.4,532.0 678.6,532.0 679.8,592.1 681.0,566.3 682.2,590.1 683.4,565.3 684.6,592.1 685.8,619.3 687.0,594.7 688.2,572.3 689.4,589.1 690.6,596.3 691.8,582.6 693.0,582.6 694.2,606.2 695.4,583.0 696.6,578.2 697.8,581.5 699.0,614.5 700.2,617.4 701.4,613.1 702.6,585.6 703.8,558.7 705.0,570.6 706.2,603.9 707.4,574.7 708.6,590.2 709.8,623.4 711.0,621.0 712.2,604.2 713.4,552.6 714.6,619.8 715.8,605.5 717.0,585.4"/><polyline fill="none" stroke="#20f020" stroke-width="1.6" points="585.0,615.6 586.2,625.8 587.4,644.8 588.6,627.5 589.8,610.3 591.0,615.9 592.2,627.4 593.4,629.5 594.6,641.5 595.8,632.1 597.0,618.4 598.2,617.7 599.4,611.3 600.6,622.4 601.8,625.5 603.0,622.2 604.2,624.9 605.4,631.9 606.6,631.5 607.8,607.8 609.0,601.6 610.2,606.8 611.4,618.7 612.6,613.3 613.8,613.2 615.0,597.9 616.2,612.7 617.4,602.7 618.6,614.5 619.8,621.8 621.0,619.4 622.2,606.7 623.4,631.4 624.6,628.5 625.8,604.6 627.0,605.7 628.2,605.3 629.4,586.2 630.6,564.5 631.8,613.6 633.0,602.7 634.2,575.5 635.4,567.8 636.6,613.4 637.8,594.5 639.0,616.0 640.2,560.0 641.4,586.0 642.6,584.2 643.8,585.3 645.0,605.5 646.2,622.9 647.4,586.5 648.6,591.2 649.8,595.8 651.0,602.5 652.2,595.0 653.4,598.5 654.6,614.5 655.8,625.2 657.0,589.0 658.2,592.1 659.4,564.8 660.6,603.4 661.8,590.3 663.0,592.5 664.2,608.1 665.4,611.4 666.6,623.6 667.8,607.4 669.0,586.2 670.2,577.5 671.4,615.1 672.6,633.5 673.8,629.7 675.0,589.3 676.2,588.3 677.4,586.7 678.6,585.3 679.8,604.5 681.0,597.3 682.2,606.2 683.4,602.3 684.6,597.0 685.8,611.6 687.0,600.6 688.2,576.6 689.4,570.9 690.6,583.2 691.8,597.1 693.0,602.1 694.2,609.9 695.4,547.0 696.6,588.3 697.8,590.0 699.0,593.2 700.2,602.0 701.4,595.6 702.6,592.7 703.8,601.7 705.0,601.0 706.2,582.7 707.4,592.6 708.6,623.1 709.8,630.7 711.0,622.4 712.2,574.9 713.4,609.6 714.6,634.2 715.8,611.7 717.0,607.9"/></g></svg><svg style="position:absolute;left:722px;top:492px" width="558" height="163"><rect width="558" height="163" fill="url(#mt)"/></svg><div style="position:absolute;left:722px;top:492px;width:558px;height:20.700000000000045px;background:linear-gradient(180deg,rgba(215,211,222,.7),rgba(180,176,190,.6))"></div><div style="position:absolute;left:771px;top:512.7px;width:509px;height:140.0px;background:#808080"></div><svg style="position:absolute;left:771px;top:512.7px" width="509" height="140.0"><rect x="24.4" y="0" width="1.4" height="140.0" fill="#d0d0d0"/><rect x="50.0" y="0" width="1.4" height="140.0" fill="#d0d0d0"/><rect x="75.6" y="0" width="1.4" height="140.0" fill="#d0d0d0"/><rect x="101.2" y="0" width="1.4" height="140.0" fill="#d0d0d0"/><rect x="126.8" y="0" width="1.4" height="140.0" fill="#d0d0d0"/><rect x="152.4" y="0" width="1.4" height="140.0" fill="#d0d0d0"/><rect x="178.0" y="0" width="1.4" height="140.0" fill="#d0d0d0"/><rect x="203.6" y="0" width="1.4" height="140.0" fill="#d0d0d0"/><rect x="229.2" y="0" width="1.4" height="140.0" fill="#d0d0d0"/><rect x="254.8" y="0" width="1.4" height="140.0" fill="#d0d0d0"/><rect x="280.4" y="0" width="1.4" height="140.0" fill="#d0d0d0"/><rect x="306.0" y="0" width="1.4" height="140.0" fill="#d0d0d0"/><rect x="331.6" y="0" width="1.4" height="140.0" fill="#d0d0d0"/><rect x="357.2" y="0" width="1.4" height="140.0" fill="#d0d0d0"/><rect x="382.8" y="0" width="1.4" height="140.0" fill="#d0d0d0"/><rect x="408.4" y="0" width="1.4" height="140.0" fill="#d0d0d0"/><rect x="434.0" y="0" width="1.4" height="140.0" fill="#d0d0d0"/><rect x="459.6" y="0" width="1.4" height="140.0" fill="#d0d0d0"/><rect x="485.2" y="0" width="1.4" height="140.0" fill="#d0d0d0"/><rect x="0" y="17.0" width="509" height="1.4" fill="#d0d0d0"/><rect x="0" y="34.5" width="509" height="1.4" fill="#d0d0d0"/><rect x="0" y="52.0" width="509" height="1.4" fill="#d0d0d0"/><rect x="0" y="69.5" width="509" height="1.4" fill="#d0d0d0"/><rect x="0" y="87.0" width="509" height="1.4" fill="#d0d0d0"/><rect x="0" y="104.5" width="509" height="1.4" fill="#d0d0d0"/><rect x="0" y="122.0" width="509" height="1.4" fill="#d0d0d0"/></svg><div style="position:absolute;left:771px;top:652.7px;width:509px;height:2px;background:#fff"></div><div class="t lbl" style="right:520px;top:509px">31.5u</div><div style="position:absolute;left:765px;top:513px;width:5px;height:1.5px;background:#202020"></div><div class="t lbl" style="right:520px;top:544px">26.3u</div><div style="position:absolute;left:765px;top:548px;width:5px;height:1.5px;background:#202020"></div><div class="t lbl" style="right:520px;top:579px">21.2u</div><div style="position:absolute;left:765px;top:583px;width:5px;height:1.5px;background:#202020"></div><div class="t lbl" style="right:520px;top:614px">16.0u</div><div style="position:absolute;left:765px;top:618px;width:5px;height:1.5px;background:#202020"></div><div class="t lbl" style="right:520px;top:645px">10.9u</div><div style="position:absolute;left:765px;top:652px;width:5px;height:1.5px;background:#202020"></div><div class="t" style="left:772px;top:498.70000000000005px;font-size:10px;color:#202020">60S/DIV</div><div class="t" style="left:818px;top:498.70000000000005px;font-size:10px;color:#202020">Time Spa...</div><div style="position:absolute;left:873px;top:495.70000000000005px;width:18px;height:14px;background:#ff0000;border:1px solid #202020"></div><div style="position:absolute;left:974px;top:495.70000000000005px;width:18px;height:14px;background:#8000ff;border:1px solid #202020"></div><div style="position:absolute;left:1075px;top:495.70000000000005px;width:18px;height:14px;background:#0080ff;border:1px solid #202020"></div><div style="position:absolute;left:1175px;top:495.70000000000005px;width:18px;height:14px;background:#00ff80;border:1px solid #202020"></div><div class="t" style="left:895px;top:498.70000000000005px;font-size:10px;color:#202020">SQUASH&nbsp; CH1</div><div class="t" style="left:995px;top:498.70000000000005px;font-size:10px;color:#202020">CH2</div><div class="t" style="left:1096px;top:498.70000000000005px;font-size:10px;color:#202020">CH3</div><div class="t" style="left:1196px;top:498.70000000000005px;font-size:10px;color:#202020">CH4</div><svg style="position:absolute;left:771px;top:512.7px" width="509" height="140.0"><g transform="translate(-771,-512.7)"><polyline fill="none" stroke="#8020ff" stroke-width="1.6" points="1153.0,597.6 1154.2,616.4 1155.4,597.5 1156.6,573.1 1157.8,599.5 1159.0,625.3 1160.2,569.2 1161.4,615.8 1162.6,613.0 1163.8,614.8 1165.0,618.7 1166.2,614.0 1167.4,591.1 1168.6,597.1 1169.8,593.3 1171.0,580.0 1172.2,572.6 1173.4,591.4 1174.6,570.0 1175.8,599.1 1177.0,608.6 1178.2,590.6 1179.4,568.7 1180.6,561.7 1181.8,589.5 1183.0,595.0 1184.2,602.6 1185.4,586.2 1186.6,570.9 1187.8,599.7 1189.0,599.8 1190.2,587.1 1191.4,575.1 1192.6,589.5 1193.8,613.6 1195.0,582.9 1196.2,579.5 1197.4,609.8 1198.6,585.2 1199.8,576.2 1201.0,570.5 1202.2,607.3 1203.4,613.5 1204.6,596.4 1205.8,565.6 1207.0,566.8 1208.2,574.9 1209.4,580.5 1210.6,575.7 1211.8,558.8 1213.0,582.3 1214.2,575.9 1215.4,589.5 1216.6,605.0 1217.8,617.9 1219.0,617.4 1220.2,582.2 1221.4,562.0 1222.6,561.7 1223.8,600.6 1225.0,611.0 1226.2,590.1 1227.4,604.2 1228.6,580.0 1229.8,579.4 1231.0,573.3 1232.2,590.3 1233.4,587.9 1234.6,594.9 1235.8,619.8 1237.0,617.7 1238.2,588.2 1239.4,573.9 1240.6,572.5 1241.8,584.2 1243.0,588.4 1244.2,603.6 1245.4,597.5 1246.6,582.6 1247.8,590.7 1249.0,613.3 1250.2,560.0 1251.4,593.8 1252.6,603.6 1253.8,568.1 1255.0,573.6 1256.2,585.5 1257.4,617.5 1258.6,617.4 1259.8,584.0 1261.0,591.9 1262.2,601.5 1263.4,589.5 1264.6,565.8 1265.8,576.4 1267.0,585.3 1268.2,609.7 1269.4,583.0 1270.6,602.9 1271.8,576.2 1273.0,573.9 1274.2,585.8 1275.4,607.6 1276.6,598.9 1277.8,585.4 1279.0,593.7 1280.2,591.8 1281.4,612.4"/><polyline fill="none" stroke="#ff2020" stroke-width="1.6" points="1153.0,577.9 1154.2,592.3 1155.4,623.1 1156.6,617.3 1157.8,620.8 1159.0,582.5 1160.2,588.1 1161.4,626.2 1162.6,627.8 1163.8,614.1 1165.0,603.8 1166.2,596.7 1167.4,634.7 1168.6,618.4 1169.8,568.8 1171.0,616.7 1172.2,638.0 1173.4,608.3 1174.6,583.2 1175.8,603.1 1177.0,605.1 1178.2,630.3 1179.4,636.0 1180.6,623.4 1181.8,607.7 1183.0,598.1 1184.2,604.9 1185.4,611.7 1186.6,594.3 1187.8,601.1 1189.0,612.3 1190.2,616.1 1191.4,602.5 1192.6,550.2 1193.8,590.0 1195.0,545.3 1196.2,595.6 1197.4,602.4 1198.6,582.9 1199.8,597.5 1201.0,599.3 1202.2,595.9 1203.4,572.9 1204.6,592.2 1205.8,612.7 1207.0,605.9 1208.2,566.9 1209.4,602.0 1210.6,619.9 1211.8,583.8 1213.0,594.3 1214.2,611.6 1215.4,616.1 1216.6,584.6 1217.8,577.7 1219.0,575.2 1220.2,607.5 1221.4,604.0 1222.6,581.3 1223.8,587.4 1225.0,610.6 1226.2,600.7 1227.4,585.4 1228.6,569.2 1229.8,587.6 1231.0,604.2 1232.2,590.4 1233.4,517.0 1234.6,517.0 1235.8,583.6 1237.0,571.7 1238.2,601.2 1239.4,608.7 1240.6,607.3 1241.8,588.9 1243.0,604.4 1244.2,615.8 1245.4,582.9 1246.6,571.3 1247.8,598.5 1249.0,607.0 1250.2,571.0 1251.4,584.7 1252.6,600.3 1253.8,593.4 1255.0,608.0 1256.2,614.2 1257.4,612.2 1258.6,600.4 1259.8,603.2 1261.0,620.9 1262.2,634.8 1263.4,624.2 1264.6,609.8 1265.8,591.2 1267.0,591.3 1268.2,617.6 1269.4,616.6 1270.6,617.6 1271.8,579.9 1273.0,571.5 1274.2,552.0 1275.4,620.9 1276.6,623.2 1277.8,609.0 1279.0,593.2 1280.2,602.7 1281.4,610.0"/><polyline fill="none" stroke="#2080ff" stroke-width="1.6" points="1153.0,595.8 1154.2,603.3 1155.4,605.8 1156.6,609.6 1157.8,609.0 1159.0,588.3 1160.2,590.7 1161.4,593.4 1162.6,608.9 1163.8,624.0 1165.0,605.6 1166.2,599.5 1167.4,597.5 1168.6,565.9 1169.8,579.5 1171.0,603.4 1172.2,591.6 1173.4,586.5 1174.6,584.5 1175.8,601.8 1177.0,588.0 1178.2,598.6 1179.4,606.6 1180.6,603.8 1181.8,584.4 1183.0,548.0 1184.2,601.8 1185.4,568.2 1186.6,595.7 1187.8,610.2 1189.0,583.3 1190.2,598.0 1191.4,565.4 1192.6,602.9 1193.8,597.1 1195.0,601.6 1196.2,618.9 1197.4,588.2 1198.6,585.0 1199.8,581.5 1201.0,563.6 1202.2,545.9 1203.4,613.0 1204.6,614.3 1205.8,574.8 1207.0,578.1 1208.2,567.6 1209.4,575.1 1210.6,587.6 1211.8,610.4 1213.0,586.4 1214.2,568.0 1215.4,581.6 1216.6,600.6 1217.8,606.3 1219.0,595.2 1220.2,572.4 1221.4,532.0 1222.6,583.5 1223.8,584.8 1225.0,601.9 1226.2,600.5 1227.4,574.2 1228.6,535.0 1229.8,538.1 1231.0,613.7 1232.2,594.7 1233.4,574.3 1234.6,592.8 1235.8,577.9 1237.0,599.4 1238.2,603.3 1239.4,573.3 1240.6,594.6 1241.8,600.5 1243.0,598.0 1244.2,581.0 1245.4,588.3 1246.6,578.1 1247.8,557.0 1249.0,572.5 1250.2,587.4 1251.4,588.6 1252.6,606.3 1253.8,597.1 1255.0,580.5 1256.2,588.2 1257.4,576.4 1258.6,586.2 1259.8,581.8 1261.0,574.3 1262.2,581.2 1263.4,589.3 1264.6,592.5 1265.8,588.0 1267.0,577.2 1268.2,567.1 1269.4,602.8 1270.6,604.6 1271.8,591.4 1273.0,581.8 1274.2,581.6 1275.4,583.4 1276.6,574.6 1277.8,597.0 1279.0,587.3 1280.2,559.7 1281.4,582.6"/><polyline fill="none" stroke="#20f090" stroke-width="1.6" points="1153.0,623.0 1154.2,590.5 1155.4,575.3 1156.6,586.7 1157.8,585.6 1159.0,617.2 1160.2,611.1 1161.4,577.8 1162.6,575.2 1163.8,607.5 1165.0,620.7 1166.2,599.2 1167.4,570.2 1168.6,602.9 1169.8,623.1 1171.0,601.2 1172.2,587.9 1173.4,585.4 1174.6,611.3 1175.8,581.1 1177.0,581.8 1178.2,589.8 1179.4,615.0 1180.6,603.9 1181.8,544.9 1183.0,591.9 1184.2,619.6 1185.4,593.6 1186.6,598.6 1187.8,600.9 1189.0,599.3 1190.2,573.3 1191.4,582.1 1192.6,591.5 1193.8,610.8 1195.0,620.8 1196.2,600.0 1197.4,569.8 1198.6,562.7 1199.8,591.5 1201.0,619.8 1202.2,603.3 1203.4,585.9 1204.6,600.8 1205.8,596.9 1207.0,588.1 1208.2,571.4 1209.4,598.9 1210.6,581.7 1211.8,603.1 1213.0,576.5 1214.2,538.0 1215.4,570.5 1216.6,567.0 1217.8,590.5 1219.0,613.7 1220.2,606.9 1221.4,606.0 1222.6,598.0 1223.8,569.6 1225.0,581.3 1226.2,593.7 1227.4,597.3 1228.6,587.6 1229.8,584.3 1231.0,594.4 1232.2,568.7 1233.4,566.2 1234.6,612.4 1235.8,623.5 1237.0,588.3 1238.2,563.9 1239.4,580.5 1240.6,600.0 1241.8,596.7 1243.0,608.7 1244.2,593.2 1245.4,574.5 1246.6,584.8 1247.8,601.1 1249.0,596.7 1250.2,569.8 1251.4,557.5 1252.6,614.8 1253.8,613.9 1255.0,575.9 1256.2,616.1 1257.4,598.6 1258.6,590.4 1259.8,580.9 1261.0,597.0 1262.2,553.0 1263.4,601.4 1264.6,601.5 1265.8,583.3 1267.0,560.0 1268.2,595.0 1269.4,591.3 1270.6,581.3 1271.8,588.2 1273.0,584.1 1274.2,602.7 1275.4,600.8 1276.6,597.5 1277.8,586.1 1279.0,562.5 1280.2,594.1 1281.4,601.4"/></g></svg><div style="position:absolute;left:718px;top:327px;width:4px;height:332px;background:#fff"></div><div style="position:absolute;left:719px;top:327px;width:1px;height:332px;background:#a8a8a8"></div><div style="position:absolute;left:156px;top:488px;width:1124px;height:4px;background:#fff"></div><div style="position:absolute;left:156px;top:489px;width:1124px;height:1px;background:#b0b0b0"></div></body></html>
